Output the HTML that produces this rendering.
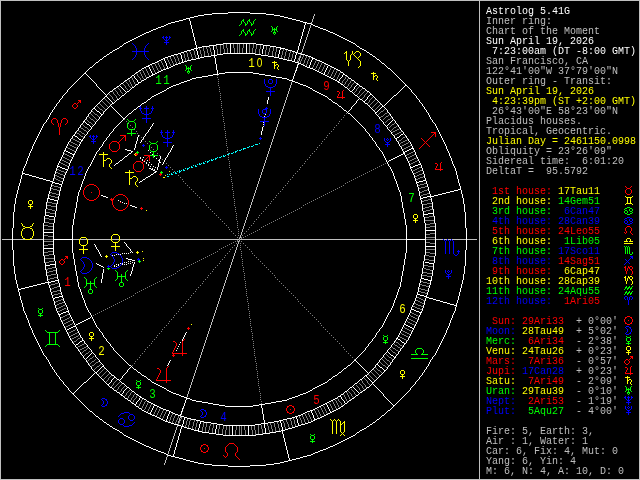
<!DOCTYPE html>
<html lang="en"><head><meta charset="utf-8"><title>Astrolog 5.41G</title>
<style>
html,body{margin:0;padding:0;background:#000;overflow:hidden}
svg{display:block}
.sb{font-family:"Liberation Mono","DejaVu Sans Mono",monospace;font-size:10px;white-space:pre}
.hn{font-family:"Liberation Mono","DejaVu Sans Mono",monospace;font-size:13.5px;text-anchor:middle}
.z{font-family:"Liberation Sans",sans-serif;font-size:12.6px}
path{fill:none;stroke-width:1;shape-rendering:crispEdges}
</style></head>
<body>
<svg width="640" height="480" viewBox="0 0 640 480" style="will-change:transform">
<rect width="640" height="480" fill="#000"/>
<path stroke="#bfbfbf" d="M0 0.5h640M0 1.5h1M479 1.5h1M639 1.5h1M0 2.5h1M479 2.5h1M639 2.5h1M0 3.5h1M479 3.5h1M639 3.5h1M0 4.5h1M479 4.5h1M639 4.5h1M0 5.5h1M479 5.5h1M639 5.5h1M0 6.5h1M479 6.5h1M639 6.5h1M0 7.5h1M479 7.5h1M639 7.5h1M0 8.5h1M479 8.5h1M639 8.5h1M0 9.5h1M479 9.5h1M639 9.5h1M0 10.5h1M479 10.5h1M639 10.5h1M0 11.5h1M479 11.5h1M639 11.5h1M0 12.5h1M479 12.5h1M639 12.5h1M0 13.5h1M479 13.5h1M639 13.5h1M0 14.5h1M314 14.5h1M479 14.5h1M639 14.5h1M0 15.5h1M314 15.5h1M479 15.5h1M639 15.5h1M0 16.5h1M313 16.5h1M479 16.5h1M639 16.5h1M0 17.5h1M313 17.5h1M479 17.5h1M639 17.5h1M0 18.5h1M313 18.5h1M479 18.5h1M639 18.5h1M0 19.5h1M312 19.5h1M479 19.5h1M639 19.5h1M0 20.5h1M312 20.5h1M479 20.5h1M639 20.5h1M0 21.5h1M312 21.5h1M479 21.5h1M639 21.5h1M0 22.5h1M311 22.5h1M479 22.5h1M639 22.5h1M0 23.5h1M311 23.5h1M479 23.5h1M639 23.5h1M0 24.5h1M479 24.5h1M639 24.5h1M0 25.5h1M310 25.5h1M479 25.5h1M639 25.5h1M0 26.5h1M310 26.5h1M479 26.5h1M639 26.5h1M0 27.5h1M310 27.5h1M479 27.5h1M639 27.5h1M0 28.5h1M309 28.5h1M479 28.5h1M639 28.5h1M0 29.5h1M309 29.5h1M479 29.5h1M639 29.5h1M0 30.5h1M309 30.5h1M479 30.5h1M639 30.5h1M0 31.5h1M308 31.5h1M479 31.5h1M639 31.5h1M0 32.5h1M308 32.5h1M479 32.5h1M639 32.5h1M0 33.5h1M308 33.5h1M479 33.5h1M639 33.5h1M0 34.5h1M307 34.5h1M479 34.5h1M639 34.5h1M0 35.5h1M307 35.5h1M479 35.5h1M639 35.5h1M0 36.5h1M307 36.5h1M479 36.5h1M639 36.5h1M0 37.5h1M306 37.5h1M479 37.5h1M639 37.5h1M0 38.5h1M306 38.5h1M479 38.5h1M639 38.5h1M0 39.5h1M306 39.5h1M479 39.5h1M639 39.5h1M0 40.5h1M305 40.5h1M479 40.5h1M639 40.5h1M0 41.5h1M305 41.5h1M479 41.5h1M639 41.5h1M0 42.5h1M305 42.5h1M479 42.5h1M639 42.5h1M0 43.5h1M304 43.5h1M479 43.5h1M639 43.5h1M0 44.5h1M304 44.5h1M479 44.5h1M639 44.5h1M0 45.5h1M304 45.5h1M479 45.5h1M639 45.5h1M0 46.5h1M303 46.5h1M479 46.5h1M639 46.5h1M0 47.5h1M303 47.5h1M479 47.5h1M639 47.5h1M0 48.5h1M303 48.5h1M479 48.5h1M639 48.5h1M0 49.5h1M302 49.5h1M479 49.5h1M639 49.5h1M0 50.5h1M302 50.5h1M479 50.5h1M639 50.5h1M0 51.5h1M302 51.5h1M479 51.5h1M639 51.5h1M0 52.5h1M301 52.5h1M479 52.5h1M639 52.5h1M0 53.5h1M301 53.5h1M479 53.5h1M639 53.5h1M0 54.5h1M479 54.5h1M639 54.5h1M0 55.5h1M479 55.5h1M639 55.5h1M0 56.5h1M300 56.5h1M479 56.5h1M639 56.5h1M0 57.5h1M300 57.5h1M479 57.5h1M639 57.5h1M0 58.5h1M299 58.5h1M479 58.5h1M639 58.5h1M0 59.5h1M299 59.5h1M479 59.5h1M639 59.5h1M0 60.5h1M299 60.5h1M479 60.5h1M639 60.5h1M0 61.5h1M298 61.5h1M479 61.5h1M639 61.5h1M0 62.5h1M298 62.5h1M479 62.5h1M639 62.5h1M0 63.5h1M479 63.5h1M639 63.5h1M0 64.5h1M297 64.5h1M479 64.5h1M639 64.5h1M0 65.5h1M479 65.5h1M639 65.5h1M0 66.5h1M479 66.5h1M639 66.5h1M0 67.5h1M296 67.5h1M479 67.5h1M639 67.5h1M0 68.5h1M479 68.5h1M639 68.5h1M0 69.5h1M479 69.5h1M639 69.5h1M0 70.5h1M295 70.5h1M479 70.5h1M639 70.5h1M0 71.5h1M479 71.5h1M639 71.5h1M0 72.5h1M479 72.5h1M639 72.5h1M0 73.5h1M479 73.5h1M639 73.5h1M0 74.5h1M479 74.5h1M639 74.5h1M0 75.5h1M479 75.5h1M639 75.5h1M0 76.5h1M479 76.5h1M639 76.5h1M0 77.5h1M479 77.5h1M639 77.5h1M0 78.5h1M479 78.5h1M639 78.5h1M0 79.5h1M479 79.5h1M639 79.5h1M0 80.5h1M479 80.5h1M639 80.5h1M0 81.5h1M479 81.5h1M639 81.5h1M0 82.5h1M291 82.5h1M479 82.5h1M639 82.5h1M0 83.5h1M291 83.5h1M479 83.5h1M639 83.5h1M0 84.5h1M291 84.5h1M479 84.5h1M639 84.5h1M0 85.5h1M290 85.5h1M479 85.5h1M639 85.5h1M0 86.5h1M290 86.5h1M479 86.5h1M639 86.5h1M0 87.5h1M290 87.5h1M479 87.5h1M639 87.5h1M0 88.5h1M289 88.5h1M479 88.5h1M639 88.5h1M0 89.5h1M289 89.5h1M479 89.5h1M639 89.5h1M0 90.5h1M289 90.5h1M479 90.5h1M639 90.5h1M0 91.5h1M288 91.5h1M479 91.5h1M639 91.5h1M0 92.5h1M288 92.5h1M479 92.5h1M639 92.5h1M0 93.5h1M288 93.5h1M479 93.5h1M639 93.5h1M0 94.5h1M287 94.5h1M479 94.5h1M639 94.5h1M0 95.5h1M287 95.5h1M479 95.5h1M639 95.5h1M0 96.5h1M287 96.5h1M479 96.5h1M639 96.5h1M0 97.5h1M286 97.5h1M479 97.5h1M639 97.5h1M0 98.5h1M286 98.5h1M479 98.5h1M639 98.5h1M0 99.5h1M286 99.5h1M479 99.5h1M639 99.5h1M0 100.5h1M285 100.5h1M479 100.5h1M639 100.5h1M0 101.5h1M285 101.5h1M479 101.5h1M639 101.5h1M0 102.5h1M285 102.5h1M479 102.5h1M639 102.5h1M0 103.5h1M284 103.5h1M479 103.5h1M639 103.5h1M0 104.5h1M284 104.5h1M479 104.5h1M639 104.5h1M0 105.5h1M284 105.5h1M479 105.5h1M639 105.5h1M0 106.5h1M283 106.5h1M479 106.5h1M639 106.5h1M0 107.5h1M283 107.5h1M479 107.5h1M639 107.5h1M0 108.5h1M283 108.5h1M479 108.5h1M639 108.5h1M0 109.5h1M282 109.5h1M479 109.5h1M639 109.5h1M0 110.5h1M282 110.5h1M479 110.5h1M639 110.5h1M0 111.5h1M282 111.5h1M479 111.5h1M639 111.5h1M0 112.5h1M281 112.5h1M479 112.5h1M639 112.5h1M0 113.5h1M281 113.5h1M479 113.5h1M639 113.5h1M0 114.5h1M281 114.5h1M479 114.5h1M639 114.5h1M0 115.5h1M280 115.5h1M479 115.5h1M639 115.5h1M0 116.5h1M280 116.5h1M479 116.5h1M639 116.5h1M0 117.5h1M280 117.5h1M479 117.5h1M639 117.5h1M0 118.5h1M279 118.5h1M479 118.5h1M639 118.5h1M0 119.5h1M279 119.5h1M479 119.5h1M639 119.5h1M0 120.5h1M279 120.5h1M479 120.5h1M639 120.5h1M0 121.5h1M278 121.5h1M479 121.5h1M639 121.5h1M0 122.5h1M278 122.5h1M479 122.5h1M639 122.5h1M0 123.5h1M278 123.5h1M479 123.5h1M639 123.5h1M0 124.5h1M277 124.5h1M479 124.5h1M639 124.5h1M0 125.5h1M277 125.5h1M479 125.5h1M639 125.5h1M0 126.5h1M277 126.5h1M479 126.5h1M639 126.5h1M0 127.5h1M276 127.5h1M479 127.5h1M639 127.5h1M0 128.5h1M276 128.5h1M479 128.5h1M639 128.5h1M0 129.5h1M276 129.5h1M479 129.5h1M639 129.5h1M0 130.5h1M275 130.5h1M479 130.5h1M639 130.5h1M0 131.5h1M275 131.5h1M479 131.5h1M639 131.5h1M0 132.5h1M275 132.5h1M479 132.5h1M639 132.5h1M0 133.5h1M274 133.5h1M479 133.5h1M639 133.5h1M0 134.5h1M274 134.5h1M479 134.5h1M639 134.5h1M0 135.5h1M274 135.5h1M479 135.5h1M639 135.5h1M0 136.5h1M273 136.5h1M479 136.5h1M639 136.5h1M0 137.5h1M273 137.5h1M479 137.5h1M639 137.5h1M0 138.5h1M273 138.5h1M479 138.5h1M639 138.5h1M0 139.5h1M272 139.5h1M479 139.5h1M639 139.5h1M0 140.5h1M272 140.5h1M479 140.5h1M639 140.5h1M0 141.5h1M272 141.5h1M479 141.5h1M639 141.5h1M0 142.5h1M271 142.5h1M479 142.5h1M639 142.5h1M0 143.5h1M271 143.5h1M479 143.5h1M639 143.5h1M0 144.5h1M271 144.5h1M479 144.5h1M639 144.5h1M0 145.5h1M270 145.5h1M479 145.5h1M639 145.5h1M0 146.5h1M270 146.5h1M479 146.5h1M639 146.5h1M0 147.5h1M270 147.5h1M479 147.5h1M639 147.5h1M0 148.5h1M269 148.5h1M479 148.5h1M639 148.5h1M0 149.5h1M269 149.5h1M479 149.5h1M639 149.5h1M0 150.5h1M269 150.5h1M479 150.5h1M639 150.5h1M0 151.5h1M268 151.5h1M479 151.5h1M639 151.5h1M0 152.5h1M268 152.5h1M479 152.5h1M639 152.5h1M0 153.5h1M268 153.5h1M479 153.5h1M639 153.5h1M0 154.5h1M267 154.5h1M479 154.5h1M639 154.5h1M0 155.5h1M267 155.5h1M479 155.5h1M639 155.5h1M0 156.5h1M267 156.5h1M479 156.5h1M639 156.5h1M0 157.5h1M266 157.5h1M479 157.5h1M639 157.5h1M0 158.5h1M266 158.5h1M479 158.5h1M639 158.5h1M0 159.5h1M266 159.5h1M479 159.5h1M639 159.5h1M0 160.5h1M265 160.5h1M479 160.5h1M639 160.5h1M0 161.5h1M265 161.5h1M479 161.5h1M639 161.5h1M0 162.5h1M265 162.5h1M479 162.5h1M639 162.5h1M0 163.5h1M264 163.5h1M479 163.5h1M639 163.5h1M0 164.5h1M264 164.5h1M479 164.5h1M639 164.5h1M0 165.5h1M264 165.5h1M479 165.5h1M639 165.5h1M0 166.5h1M263 166.5h1M479 166.5h1M639 166.5h1M0 167.5h1M263 167.5h1M479 167.5h1M639 167.5h1M0 168.5h1M263 168.5h1M479 168.5h1M639 168.5h1M0 169.5h1M262 169.5h1M479 169.5h1M639 169.5h1M0 170.5h1M262 170.5h1M479 170.5h1M639 170.5h1M0 171.5h1M262 171.5h1M479 171.5h1M639 171.5h1M0 172.5h1M261 172.5h1M479 172.5h1M639 172.5h1M0 173.5h1M261 173.5h1M479 173.5h1M639 173.5h1M0 174.5h1M261 174.5h1M479 174.5h1M639 174.5h1M0 175.5h1M260 175.5h1M479 175.5h1M639 175.5h1M0 176.5h1M260 176.5h1M479 176.5h1M639 176.5h1M0 177.5h1M260 177.5h1M479 177.5h1M639 177.5h1M0 178.5h1M259 178.5h1M479 178.5h1M639 178.5h1M0 179.5h1M259 179.5h1M479 179.5h1M639 179.5h1M0 180.5h1M259 180.5h1M479 180.5h1M639 180.5h1M0 181.5h1M258 181.5h1M479 181.5h1M639 181.5h1M0 182.5h1M258 182.5h1M479 182.5h1M639 182.5h1M0 183.5h1M258 183.5h1M479 183.5h1M639 183.5h1M0 184.5h1M257 184.5h1M479 184.5h1M639 184.5h1M0 185.5h1M257 185.5h1M479 185.5h1M639 185.5h1M0 186.5h1M257 186.5h1M479 186.5h1M639 186.5h1M0 187.5h1M256 187.5h1M479 187.5h1M639 187.5h1M0 188.5h1M256 188.5h1M479 188.5h1M639 188.5h1M0 189.5h1M256 189.5h1M479 189.5h1M639 189.5h1M0 190.5h1M255 190.5h1M479 190.5h1M639 190.5h1M0 191.5h1M255 191.5h1M479 191.5h1M639 191.5h1M0 192.5h1M255 192.5h1M479 192.5h1M639 192.5h1M0 193.5h1M254 193.5h1M479 193.5h1M639 193.5h1M0 194.5h1M254 194.5h1M479 194.5h1M639 194.5h1M0 195.5h1M254 195.5h1M479 195.5h1M639 195.5h1M0 196.5h1M253 196.5h1M479 196.5h1M639 196.5h1M0 197.5h1M253 197.5h1M479 197.5h1M639 197.5h1M0 198.5h1M253 198.5h1M479 198.5h1M639 198.5h1M0 199.5h1M252 199.5h1M479 199.5h1M639 199.5h1M0 200.5h1M252 200.5h1M479 200.5h1M639 200.5h1M0 201.5h1M252 201.5h1M479 201.5h1M639 201.5h1M0 202.5h1M251 202.5h1M479 202.5h1M639 202.5h1M0 203.5h1M251 203.5h1M479 203.5h1M639 203.5h1M0 204.5h1M251 204.5h1M479 204.5h1M639 204.5h1M0 205.5h1M250 205.5h1M479 205.5h1M639 205.5h1M0 206.5h1M250 206.5h1M479 206.5h1M639 206.5h1M0 207.5h1M250 207.5h1M479 207.5h1M639 207.5h1M0 208.5h1M249 208.5h1M479 208.5h1M639 208.5h1M0 209.5h1M249 209.5h1M479 209.5h1M639 209.5h1M0 210.5h1M249 210.5h1M479 210.5h1M639 210.5h1M0 211.5h1M248 211.5h1M479 211.5h1M639 211.5h1M0 212.5h1M248 212.5h1M479 212.5h1M639 212.5h1M0 213.5h1M248 213.5h1M479 213.5h1M639 213.5h1M0 214.5h1M247 214.5h1M479 214.5h1M639 214.5h1M0 215.5h1M247 215.5h1M479 215.5h1M639 215.5h1M0 216.5h1M247 216.5h1M479 216.5h1M639 216.5h1M0 217.5h1M246 217.5h1M479 217.5h1M639 217.5h1M0 218.5h1M246 218.5h1M479 218.5h1M639 218.5h1M0 219.5h1M246 219.5h1M479 219.5h1M639 219.5h1M0 220.5h1M245 220.5h1M479 220.5h1M639 220.5h1M0 221.5h1M245 221.5h1M479 221.5h1M639 221.5h1M0 222.5h1M245 222.5h1M479 222.5h1M639 222.5h1M0 223.5h1M244 223.5h1M479 223.5h1M639 223.5h1M0 224.5h1M244 224.5h1M479 224.5h1M639 224.5h1M0 225.5h1M244 225.5h1M479 225.5h1M639 225.5h1M0 226.5h1M243 226.5h1M479 226.5h1M639 226.5h1M0 227.5h1M243 227.5h1M479 227.5h1M639 227.5h1M0 228.5h1M243 228.5h1M479 228.5h1M639 228.5h1M0 229.5h1M242 229.5h1M479 229.5h1M639 229.5h1M0 230.5h1M242 230.5h1M479 230.5h1M639 230.5h1M0 231.5h1M242 231.5h1M479 231.5h1M639 231.5h1M0 232.5h1M241 232.5h1M479 232.5h1M639 232.5h1M0 233.5h1M241 233.5h1M479 233.5h1M639 233.5h1M0 234.5h1M241 234.5h1M479 234.5h1M639 234.5h1M0 235.5h1M240 235.5h1M479 235.5h1M639 235.5h1M0 236.5h1M240 236.5h1M479 236.5h1M639 236.5h1M0 237.5h1M240 237.5h1M479 237.5h1M639 237.5h1M0 238.5h1M239 238.5h1M479 238.5h1M639 238.5h1M0 239.5h1M2 239.5h10M13 239.5h12M30 239.5h13M73 239.5h6M80 239.5h7M88 239.5h23M112 239.5h7M120 239.5h119M240 239.5h166M436 239.5h7M444 239.5h3M448 239.5h3M452 239.5h14M467 239.5h10M479 239.5h1M639 239.5h1M0 240.5h1M239 240.5h1M479 240.5h1M639 240.5h1M0 241.5h1M238 241.5h1M479 241.5h1M639 241.5h1M0 242.5h1M238 242.5h1M479 242.5h1M639 242.5h1M0 243.5h1M238 243.5h1M479 243.5h1M639 243.5h1M0 244.5h1M237 244.5h1M479 244.5h1M639 244.5h1M0 245.5h1M237 245.5h1M479 245.5h1M639 245.5h1M0 246.5h1M237 246.5h1M479 246.5h1M639 246.5h1M0 247.5h1M236 247.5h1M479 247.5h1M639 247.5h1M0 248.5h1M236 248.5h1M479 248.5h1M639 248.5h1M0 249.5h1M236 249.5h1M479 249.5h1M639 249.5h1M0 250.5h1M235 250.5h1M479 250.5h1M639 250.5h1M0 251.5h1M235 251.5h1M479 251.5h1M639 251.5h1M0 252.5h1M235 252.5h1M479 252.5h1M639 252.5h1M0 253.5h1M234 253.5h1M479 253.5h1M639 253.5h1M0 254.5h1M234 254.5h1M479 254.5h1M639 254.5h1M0 255.5h1M234 255.5h1M479 255.5h1M639 255.5h1M0 256.5h1M233 256.5h1M479 256.5h1M639 256.5h1M0 257.5h1M233 257.5h1M479 257.5h1M639 257.5h1M0 258.5h1M233 258.5h1M479 258.5h1M639 258.5h1M0 259.5h1M232 259.5h1M479 259.5h1M639 259.5h1M0 260.5h1M232 260.5h1M479 260.5h1M639 260.5h1M0 261.5h1M232 261.5h1M479 261.5h1M639 261.5h1M0 262.5h1M231 262.5h1M479 262.5h1M639 262.5h1M0 263.5h1M231 263.5h1M479 263.5h1M639 263.5h1M0 264.5h1M231 264.5h1M479 264.5h1M639 264.5h1M0 265.5h1M230 265.5h1M479 265.5h1M639 265.5h1M0 266.5h1M230 266.5h1M479 266.5h1M639 266.5h1M0 267.5h1M230 267.5h1M479 267.5h1M639 267.5h1M0 268.5h1M229 268.5h1M479 268.5h1M639 268.5h1M0 269.5h1M229 269.5h1M479 269.5h1M639 269.5h1M0 270.5h1M229 270.5h1M479 270.5h1M639 270.5h1M0 271.5h1M228 271.5h1M479 271.5h1M639 271.5h1M0 272.5h1M228 272.5h1M479 272.5h1M639 272.5h1M0 273.5h1M228 273.5h1M479 273.5h1M639 273.5h1M0 274.5h1M227 274.5h1M479 274.5h1M639 274.5h1M0 275.5h1M227 275.5h1M479 275.5h1M639 275.5h1M0 276.5h1M227 276.5h1M479 276.5h1M639 276.5h1M0 277.5h1M226 277.5h1M479 277.5h1M639 277.5h1M0 278.5h1M226 278.5h1M479 278.5h1M639 278.5h1M0 279.5h1M226 279.5h1M479 279.5h1M639 279.5h1M0 280.5h1M225 280.5h1M479 280.5h1M639 280.5h1M0 281.5h1M225 281.5h1M479 281.5h1M639 281.5h1M0 282.5h1M225 282.5h1M479 282.5h1M639 282.5h1M0 283.5h1M224 283.5h1M479 283.5h1M639 283.5h1M0 284.5h1M224 284.5h1M479 284.5h1M639 284.5h1M0 285.5h1M224 285.5h1M479 285.5h1M639 285.5h1M0 286.5h1M223 286.5h1M479 286.5h1M639 286.5h1M0 287.5h1M223 287.5h1M479 287.5h1M639 287.5h1M0 288.5h1M223 288.5h1M479 288.5h1M639 288.5h1M0 289.5h1M222 289.5h1M479 289.5h1M639 289.5h1M0 290.5h1M222 290.5h1M479 290.5h1M639 290.5h1M0 291.5h1M222 291.5h1M479 291.5h1M639 291.5h1M0 292.5h1M221 292.5h1M479 292.5h1M639 292.5h1M0 293.5h1M221 293.5h1M479 293.5h1M639 293.5h1M0 294.5h1M221 294.5h1M479 294.5h1M639 294.5h1M0 295.5h1M220 295.5h1M479 295.5h1M639 295.5h1M0 296.5h1M220 296.5h1M479 296.5h1M639 296.5h1M0 297.5h1M220 297.5h1M479 297.5h1M639 297.5h1M0 298.5h1M219 298.5h1M479 298.5h1M639 298.5h1M0 299.5h1M219 299.5h1M479 299.5h1M639 299.5h1M0 300.5h1M219 300.5h1M479 300.5h1M639 300.5h1M0 301.5h1M218 301.5h1M479 301.5h1M639 301.5h1M0 302.5h1M218 302.5h1M479 302.5h1M639 302.5h1M0 303.5h1M218 303.5h1M479 303.5h1M639 303.5h1M0 304.5h1M217 304.5h1M479 304.5h1M639 304.5h1M0 305.5h1M217 305.5h1M479 305.5h1M639 305.5h1M0 306.5h1M217 306.5h1M479 306.5h1M639 306.5h1M0 307.5h1M216 307.5h1M479 307.5h1M639 307.5h1M0 308.5h1M216 308.5h1M479 308.5h1M639 308.5h1M0 309.5h1M216 309.5h1M479 309.5h1M639 309.5h1M0 310.5h1M215 310.5h1M479 310.5h1M639 310.5h1M0 311.5h1M215 311.5h1M479 311.5h1M639 311.5h1M0 312.5h1M215 312.5h1M479 312.5h1M639 312.5h1M0 313.5h1M214 313.5h1M479 313.5h1M639 313.5h1M0 314.5h1M214 314.5h1M479 314.5h1M639 314.5h1M0 315.5h1M214 315.5h1M479 315.5h1M639 315.5h1M0 316.5h1M213 316.5h1M479 316.5h1M639 316.5h1M0 317.5h1M213 317.5h1M479 317.5h1M639 317.5h1M0 318.5h1M213 318.5h1M479 318.5h1M639 318.5h1M0 319.5h1M212 319.5h1M479 319.5h1M639 319.5h1M0 320.5h1M212 320.5h1M479 320.5h1M639 320.5h1M0 321.5h1M212 321.5h1M479 321.5h1M639 321.5h1M0 322.5h1M211 322.5h1M479 322.5h1M639 322.5h1M0 323.5h1M211 323.5h1M479 323.5h1M639 323.5h1M0 324.5h1M211 324.5h1M479 324.5h1M639 324.5h1M0 325.5h1M210 325.5h1M479 325.5h1M639 325.5h1M0 326.5h1M210 326.5h1M479 326.5h1M639 326.5h1M0 327.5h1M210 327.5h1M479 327.5h1M639 327.5h1M0 328.5h1M209 328.5h1M479 328.5h1M639 328.5h1M0 329.5h1M209 329.5h1M479 329.5h1M639 329.5h1M0 330.5h1M209 330.5h1M479 330.5h1M639 330.5h1M0 331.5h1M208 331.5h1M479 331.5h1M639 331.5h1M0 332.5h1M208 332.5h1M479 332.5h1M639 332.5h1M0 333.5h1M208 333.5h1M479 333.5h1M639 333.5h1M0 334.5h1M207 334.5h1M479 334.5h1M639 334.5h1M0 335.5h1M207 335.5h1M479 335.5h1M639 335.5h1M0 336.5h1M207 336.5h1M479 336.5h1M639 336.5h1M0 337.5h1M206 337.5h1M479 337.5h1M639 337.5h1M0 338.5h1M206 338.5h1M479 338.5h1M639 338.5h1M0 339.5h1M206 339.5h1M479 339.5h1M639 339.5h1M0 340.5h1M205 340.5h1M479 340.5h1M639 340.5h1M0 341.5h1M205 341.5h1M479 341.5h1M639 341.5h1M0 342.5h1M205 342.5h1M479 342.5h1M639 342.5h1M0 343.5h1M204 343.5h1M479 343.5h1M639 343.5h1M0 344.5h1M204 344.5h1M479 344.5h1M639 344.5h1M0 345.5h1M204 345.5h1M479 345.5h1M639 345.5h1M0 346.5h1M203 346.5h1M479 346.5h1M639 346.5h1M0 347.5h1M203 347.5h1M479 347.5h1M639 347.5h1M0 348.5h1M203 348.5h1M479 348.5h1M639 348.5h1M0 349.5h1M202 349.5h1M479 349.5h1M639 349.5h1M0 350.5h1M202 350.5h1M479 350.5h1M639 350.5h1M0 351.5h1M202 351.5h1M479 351.5h1M639 351.5h1M0 352.5h1M201 352.5h1M479 352.5h1M639 352.5h1M0 353.5h1M201 353.5h1M479 353.5h1M639 353.5h1M0 354.5h1M201 354.5h1M479 354.5h1M639 354.5h1M0 355.5h1M200 355.5h1M479 355.5h1M639 355.5h1M0 356.5h1M200 356.5h1M479 356.5h1M639 356.5h1M0 357.5h1M200 357.5h1M479 357.5h1M639 357.5h1M0 358.5h1M199 358.5h1M479 358.5h1M639 358.5h1M0 359.5h1M199 359.5h1M479 359.5h1M639 359.5h1M0 360.5h1M199 360.5h1M479 360.5h1M639 360.5h1M0 361.5h1M198 361.5h1M479 361.5h1M639 361.5h1M0 362.5h1M198 362.5h1M479 362.5h1M639 362.5h1M0 363.5h1M198 363.5h1M479 363.5h1M639 363.5h1M0 364.5h1M197 364.5h1M479 364.5h1M639 364.5h1M0 365.5h1M197 365.5h1M479 365.5h1M639 365.5h1M0 366.5h1M197 366.5h1M479 366.5h1M639 366.5h1M0 367.5h1M196 367.5h1M479 367.5h1M639 367.5h1M0 368.5h1M196 368.5h1M479 368.5h1M639 368.5h1M0 369.5h1M196 369.5h1M479 369.5h1M639 369.5h1M0 370.5h1M195 370.5h1M479 370.5h1M639 370.5h1M0 371.5h1M195 371.5h1M479 371.5h1M639 371.5h1M0 372.5h1M195 372.5h1M479 372.5h1M639 372.5h1M0 373.5h1M194 373.5h1M479 373.5h1M639 373.5h1M0 374.5h1M194 374.5h1M479 374.5h1M639 374.5h1M0 375.5h1M194 375.5h1M479 375.5h1M639 375.5h1M0 376.5h1M193 376.5h1M479 376.5h1M639 376.5h1M0 377.5h1M193 377.5h1M479 377.5h1M639 377.5h1M0 378.5h1M193 378.5h1M479 378.5h1M639 378.5h1M0 379.5h1M192 379.5h1M479 379.5h1M639 379.5h1M0 380.5h1M192 380.5h1M479 380.5h1M639 380.5h1M0 381.5h1M192 381.5h1M479 381.5h1M639 381.5h1M0 382.5h1M191 382.5h1M479 382.5h1M639 382.5h1M0 383.5h1M191 383.5h1M479 383.5h1M639 383.5h1M0 384.5h1M191 384.5h1M479 384.5h1M639 384.5h1M0 385.5h1M190 385.5h1M479 385.5h1M639 385.5h1M0 386.5h1M190 386.5h1M479 386.5h1M639 386.5h1M0 387.5h1M190 387.5h1M479 387.5h1M639 387.5h1M0 388.5h1M189 388.5h1M479 388.5h1M639 388.5h1M0 389.5h1M189 389.5h1M479 389.5h1M639 389.5h1M0 390.5h1M189 390.5h1M479 390.5h1M639 390.5h1M0 391.5h1M188 391.5h1M479 391.5h1M639 391.5h1M0 392.5h1M188 392.5h1M479 392.5h1M639 392.5h1M0 393.5h1M188 393.5h1M479 393.5h1M639 393.5h1M0 394.5h1M187 394.5h1M479 394.5h1M639 394.5h1M0 395.5h1M187 395.5h1M479 395.5h1M639 395.5h1M0 396.5h1M187 396.5h1M479 396.5h1M639 396.5h1M0 397.5h1M479 397.5h1M639 397.5h1M0 398.5h1M479 398.5h1M639 398.5h1M0 399.5h1M479 399.5h1M639 399.5h1M0 400.5h1M479 400.5h1M639 400.5h1M0 401.5h1M479 401.5h1M639 401.5h1M0 402.5h1M479 402.5h1M639 402.5h1M0 403.5h1M479 403.5h1M639 403.5h1M0 404.5h1M479 404.5h1M639 404.5h1M0 405.5h1M479 405.5h1M639 405.5h1M0 406.5h1M479 406.5h1M639 406.5h1M0 407.5h1M479 407.5h1M639 407.5h1M0 408.5h1M183 408.5h1M479 408.5h1M639 408.5h1M0 409.5h1M479 409.5h1M639 409.5h1M0 410.5h1M479 410.5h1M639 410.5h1M0 411.5h1M182 411.5h1M479 411.5h1M639 411.5h1M0 412.5h1M479 412.5h1M639 412.5h1M0 413.5h1M479 413.5h1M639 413.5h1M0 414.5h1M181 414.5h1M479 414.5h1M639 414.5h1M0 415.5h1M479 415.5h1M639 415.5h1M0 416.5h1M180 416.5h1M479 416.5h1M639 416.5h1M0 417.5h1M180 417.5h1M479 417.5h1M639 417.5h1M0 418.5h1M179 418.5h1M479 418.5h1M639 418.5h1M0 419.5h1M179 419.5h1M479 419.5h1M639 419.5h1M0 420.5h1M179 420.5h1M479 420.5h1M639 420.5h1M0 421.5h1M178 421.5h1M479 421.5h1M639 421.5h1M0 422.5h1M178 422.5h1M479 422.5h1M639 422.5h1M0 423.5h1M479 423.5h1M639 423.5h1M0 424.5h1M479 424.5h1M639 424.5h1M0 425.5h1M177 425.5h1M479 425.5h1M639 425.5h1M0 426.5h1M177 426.5h1M479 426.5h1M639 426.5h1M0 427.5h1M176 427.5h1M479 427.5h1M639 427.5h1M0 428.5h1M176 428.5h1M479 428.5h1M639 428.5h1M0 429.5h1M176 429.5h1M479 429.5h1M639 429.5h1M0 430.5h1M175 430.5h1M479 430.5h1M639 430.5h1M0 431.5h1M175 431.5h1M479 431.5h1M639 431.5h1M0 432.5h1M175 432.5h1M479 432.5h1M639 432.5h1M0 433.5h1M174 433.5h1M479 433.5h1M639 433.5h1M0 434.5h1M174 434.5h1M479 434.5h1M639 434.5h1M0 435.5h1M174 435.5h1M479 435.5h1M639 435.5h1M0 436.5h1M173 436.5h1M479 436.5h1M639 436.5h1M0 437.5h1M173 437.5h1M479 437.5h1M639 437.5h1M0 438.5h1M173 438.5h1M479 438.5h1M639 438.5h1M0 439.5h1M172 439.5h1M479 439.5h1M639 439.5h1M0 440.5h1M172 440.5h1M479 440.5h1M639 440.5h1M0 441.5h1M172 441.5h1M479 441.5h1M639 441.5h1M0 442.5h1M171 442.5h1M479 442.5h1M639 442.5h1M0 443.5h1M171 443.5h1M479 443.5h1M639 443.5h1M0 444.5h1M171 444.5h1M479 444.5h1M639 444.5h1M0 445.5h1M170 445.5h1M479 445.5h1M639 445.5h1M0 446.5h1M170 446.5h1M479 446.5h1M639 446.5h1M0 447.5h1M170 447.5h1M479 447.5h1M639 447.5h1M0 448.5h1M169 448.5h1M479 448.5h1M639 448.5h1M0 449.5h1M169 449.5h1M479 449.5h1M639 449.5h1M0 450.5h1M169 450.5h1M479 450.5h1M639 450.5h1M0 451.5h1M168 451.5h1M479 451.5h1M639 451.5h1M0 452.5h1M168 452.5h1M479 452.5h1M639 452.5h1M0 453.5h1M168 453.5h1M479 453.5h1M639 453.5h1M0 454.5h1M479 454.5h1M639 454.5h1M0 455.5h1M167 455.5h1M479 455.5h1M639 455.5h1M0 456.5h1M167 456.5h1M479 456.5h1M639 456.5h1M0 457.5h1M166 457.5h1M479 457.5h1M639 457.5h1M0 458.5h1M166 458.5h1M479 458.5h1M639 458.5h1M0 459.5h1M166 459.5h1M479 459.5h1M639 459.5h1M0 460.5h1M165 460.5h1M479 460.5h1M639 460.5h1M0 461.5h1M165 461.5h1M479 461.5h1M639 461.5h1M0 462.5h1M165 462.5h1M479 462.5h1M639 462.5h1M0 463.5h1M164 463.5h1M479 463.5h1M639 463.5h1M0 464.5h1M164 464.5h1M479 464.5h1M639 464.5h1M0 465.5h1M479 465.5h1M639 465.5h1M0 466.5h1M479 466.5h1M639 466.5h1M0 467.5h1M479 467.5h1M639 467.5h1M0 468.5h1M479 468.5h1M639 468.5h1M0 469.5h1M479 469.5h1M639 469.5h1M0 470.5h1M479 470.5h1M639 470.5h1M0 471.5h1M479 471.5h1M639 471.5h1M0 472.5h1M479 472.5h1M639 472.5h1M0 473.5h1M479 473.5h1M639 473.5h1M0 474.5h1M479 474.5h1M639 474.5h1M0 475.5h1M479 475.5h1M639 475.5h1M0 476.5h1M479 476.5h1M639 476.5h1M0 477.5h1M479 477.5h1M639 477.5h1M0 478.5h1M479 478.5h1M639 478.5h1M0 479.5h640"/>
<path stroke="#ffffff" d="M228 12.5h22M212 13.5h16M250 13.5h16M204 14.5h8M266 14.5h8M198 15.5h6M274 15.5h6M194 16.5h4M280 16.5h4M190 17.5h4M284 17.5h4M186 18.5h4M288 18.5h4M183 19.5h3M189 19.5h1M292 19.5h4M179 20.5h4M189 20.5h1M296 20.5h4M175 21.5h4M190 21.5h1M300 21.5h3M171 22.5h4M190 22.5h1M303 22.5h4M168 23.5h3M190 23.5h1M305 23.5h1M307 23.5h4M166 24.5h2M190 24.5h1M305 24.5h1M311 24.5h2M164 25.5h2M191 25.5h1M304 25.5h1M313 25.5h2M161 26.5h3M191 26.5h1M304 26.5h1M315 26.5h3M158 27.5h3M191 27.5h1M304 27.5h1M318 27.5h2M156 28.5h2M191 28.5h1M304 28.5h1M320 28.5h3M153 29.5h3M192 29.5h1M303 29.5h1M323 29.5h3M151 30.5h2M192 30.5h1M303 30.5h1M326 30.5h2M149 31.5h2M192 31.5h1M303 31.5h1M328 31.5h2M146 32.5h3M192 32.5h1M302 32.5h1M330 32.5h3M144 33.5h2M193 33.5h1M302 33.5h1M333 33.5h2M142 34.5h2M193 34.5h1M302 34.5h1M335 34.5h2M140 35.5h2M193 35.5h1M302 35.5h1M337 35.5h2M138 36.5h2M193 36.5h1M301 36.5h1M339 36.5h2M136 37.5h2M194 37.5h1M301 37.5h1M341 37.5h2M134 38.5h2M194 38.5h1M301 38.5h1M343 38.5h2M132 39.5h2M194 39.5h1M300 39.5h1M345 39.5h2M130 40.5h2M194 40.5h1M300 40.5h1M347 40.5h2M128 41.5h2M195 41.5h1M300 41.5h1M349 41.5h2M126 42.5h2M195 42.5h1M300 42.5h1M351 42.5h2M124 43.5h2M195 43.5h1M223 43.5h33M299 43.5h1M353 43.5h2M123 44.5h1M195 44.5h1M216 44.5h7M230 44.5h1M246 44.5h1M256 44.5h7M299 44.5h1M355 44.5h1M122 45.5h1M196 45.5h1M209 45.5h7M230 45.5h1M246 45.5h1M263 45.5h7M299 45.5h1M356 45.5h1M120 46.5h2M196 46.5h1M202 46.5h7M213 46.5h1M230 46.5h1M246 46.5h1M263 46.5h1M270 46.5h6M298 46.5h1M357 46.5h2M119 47.5h1M196 47.5h1M198 47.5h4M213 47.5h1M230 47.5h1M246 47.5h1M263 47.5h1M276 47.5h5M298 47.5h1M359 47.5h1M117 48.5h2M194 48.5h4M213 48.5h1M230 48.5h1M246 48.5h1M263 48.5h1M280 48.5h5M298 48.5h1M360 48.5h2M115 49.5h2M191 49.5h3M196 49.5h1M213 49.5h1M230 49.5h1M246 49.5h1M262 49.5h1M280 49.5h1M285 49.5h3M298 49.5h1M362 49.5h2M113 50.5h2M187 50.5h4M196 50.5h1M214 50.5h1M230 50.5h1M246 50.5h1M262 50.5h1M279 50.5h1M288 50.5h4M297 50.5h1M364 50.5h2M112 51.5h1M184 51.5h3M197 51.5h1M214 51.5h1M230 51.5h1M246 51.5h1M262 51.5h1M279 51.5h1M292 51.5h3M297 51.5h1M366 51.5h1M110 52.5h2M181 52.5h3M197 52.5h1M214 52.5h1M230 52.5h1M246 52.5h1M262 52.5h1M279 52.5h1M295 52.5h3M367 52.5h2M109 53.5h1M178 53.5h3M197 53.5h1M214 53.5h1M223 53.5h32M262 53.5h1M279 53.5h1M296 53.5h1M298 53.5h3M369 53.5h1M107 54.5h2M174 54.5h4M180 54.5h1M197 54.5h1M214 54.5h1M217 54.5h6M255 54.5h6M278 54.5h1M296 54.5h1M301 54.5h4M370 54.5h2M106 55.5h1M171 55.5h3M181 55.5h1M198 55.5h1M211 55.5h6M261 55.5h7M278 55.5h1M295 55.5h1M305 55.5h3M372 55.5h1M104 56.5h2M168 56.5h3M181 56.5h1M198 56.5h1M204 56.5h7M214 56.5h1M268 56.5h6M278 56.5h1M295 56.5h1M308 56.5h3M373 56.5h2M103 57.5h1M165 57.5h3M181 57.5h1M198 57.5h1M200 57.5h4M214 57.5h1M274 57.5h5M295 57.5h1M311 57.5h2M375 57.5h1M102 58.5h1M163 58.5h2M181 58.5h1M196 58.5h4M215 58.5h1M279 58.5h4M295 58.5h1M312 58.5h3M376 58.5h1M100 59.5h2M161 59.5h2M164 59.5h1M182 59.5h1M191 59.5h5M215 59.5h1M283 59.5h4M294 59.5h1M312 59.5h1M315 59.5h2M377 59.5h2M99 60.5h1M159 60.5h2M164 60.5h1M182 60.5h1M187 60.5h4M215 60.5h1M287 60.5h5M294 60.5h1M311 60.5h1M317 60.5h3M379 60.5h1M98 61.5h1M157 61.5h2M165 61.5h1M182 61.5h1M184 61.5h3M215 61.5h1M292 61.5h3M311 61.5h1M320 61.5h2M380 61.5h1M96 62.5h2M155 62.5h2M165 62.5h1M181 62.5h3M215 62.5h1M295 62.5h3M310 62.5h1M322 62.5h2M381 62.5h1M95 63.5h1M152 63.5h3M166 63.5h1M178 63.5h3M215 63.5h1M298 63.5h3M310 63.5h1M324 63.5h2M382 63.5h2M94 64.5h1M150 64.5h2M166 64.5h1M175 64.5h3M216 64.5h1M298 64.5h1M301 64.5h2M310 64.5h1M326 64.5h2M384 64.5h1M93 65.5h1M148 65.5h2M166 65.5h1M173 65.5h2M216 65.5h1M297 65.5h1M303 65.5h2M309 65.5h1M328 65.5h2M385 65.5h1M92 66.5h1M146 66.5h3M167 66.5h1M171 66.5h2M216 66.5h1M297 66.5h1M305 66.5h2M309 66.5h1M327 66.5h1M330 66.5h2M386 66.5h1M90 67.5h2M144 67.5h2M149 67.5h1M167 67.5h1M169 67.5h2M216 67.5h1M297 67.5h1M307 67.5h3M327 67.5h1M332 67.5h2M387 67.5h1M89 68.5h1M142 68.5h2M149 68.5h1M166 68.5h3M216 68.5h1M296 68.5h1M310 68.5h3M326 68.5h1M334 68.5h2M388 68.5h2M88 69.5h1M141 69.5h1M150 69.5h1M163 69.5h3M216 69.5h1M296 69.5h1M313 69.5h2M326 69.5h1M336 69.5h2M390 69.5h1M87 70.5h1M139 70.5h2M150 70.5h1M161 70.5h2M217 70.5h1M296 70.5h1M315 70.5h2M325 70.5h1M338 70.5h2M391 70.5h1M86 71.5h1M138 71.5h1M151 71.5h1M159 71.5h2M217 71.5h1M295 71.5h1M317 71.5h2M325 71.5h1M340 71.5h1M392 71.5h1M85 72.5h1M136 72.5h2M151 72.5h1M157 72.5h2M217 72.5h1M225 72.5h28M295 72.5h1M319 72.5h2M324 72.5h1M341 72.5h2M393 72.5h1M84 73.5h2M135 73.5h1M152 73.5h1M155 73.5h2M217 73.5h1M219 73.5h6M253 73.5h6M294 73.5h1M321 73.5h2M324 73.5h1M343 73.5h1M394 73.5h1M83 74.5h1M86 74.5h1M134 74.5h1M152 74.5h3M213 74.5h6M259 74.5h6M294 74.5h1M323 74.5h2M343 74.5h2M395 74.5h1M82 75.5h1M87 75.5h1M132 75.5h2M151 75.5h2M208 75.5h5M265 75.5h6M294 75.5h1M325 75.5h2M342 75.5h1M345 75.5h2M396 75.5h1M81 76.5h1M88 76.5h1M131 76.5h1M134 76.5h1M149 76.5h2M202 76.5h6M271 76.5h5M293 76.5h1M327 76.5h2M342 76.5h1M347 76.5h1M397 76.5h1M80 77.5h1M89 77.5h1M130 77.5h1M134 77.5h1M147 77.5h2M196 77.5h6M276 77.5h6M293 77.5h1M329 77.5h2M341 77.5h1M348 77.5h1M398 77.5h1M79 78.5h1M90 78.5h1M128 78.5h2M135 78.5h1M146 78.5h1M192 78.5h4M282 78.5h5M293 78.5h1M331 78.5h2M340 78.5h1M349 78.5h2M399 78.5h1M78 79.5h1M91 79.5h1M127 79.5h1M136 79.5h1M144 79.5h2M190 79.5h2M287 79.5h2M292 79.5h1M333 79.5h2M339 79.5h1M351 79.5h1M400 79.5h1M77 80.5h1M92 80.5h1M125 80.5h2M137 80.5h1M142 80.5h2M187 80.5h3M289 80.5h4M335 80.5h2M339 80.5h1M352 80.5h2M401 80.5h1M76 81.5h1M93 81.5h1M124 81.5h1M137 81.5h1M141 81.5h1M184 81.5h3M292 81.5h3M337 81.5h2M354 81.5h1M402 81.5h1M75 82.5h1M94 82.5h1M123 82.5h1M138 82.5h3M181 82.5h3M295 82.5h3M338 82.5h2M355 82.5h1M403 82.5h1M74 83.5h1M95 83.5h1M121 83.5h2M138 83.5h1M179 83.5h2M298 83.5h2M340 83.5h1M356 83.5h2M404 83.5h1M73 84.5h1M96 84.5h1M120 84.5h1M136 84.5h2M176 84.5h3M300 84.5h3M341 84.5h2M357 84.5h2M405 84.5h1M72 85.5h1M96 85.5h1M119 85.5h1M135 85.5h1M173 85.5h3M303 85.5h3M343 85.5h1M356 85.5h1M359 85.5h1M405 85.5h2M71 86.5h1M97 86.5h1M117 86.5h2M120 86.5h1M134 86.5h1M171 86.5h2M306 86.5h2M344 86.5h1M355 86.5h1M360 86.5h2M404 86.5h1M407 86.5h1M70 87.5h1M98 87.5h1M116 87.5h1M121 87.5h1M132 87.5h2M169 87.5h2M308 87.5h2M345 87.5h2M354 87.5h1M362 87.5h1M403 87.5h1M408 87.5h1M69 88.5h1M99 88.5h1M114 88.5h2M122 88.5h1M131 88.5h1M167 88.5h2M310 88.5h2M347 88.5h1M354 88.5h1M363 88.5h2M402 88.5h1M409 88.5h1M68 89.5h1M100 89.5h1M113 89.5h1M123 89.5h1M130 89.5h1M166 89.5h1M312 89.5h1M348 89.5h1M353 89.5h1M365 89.5h1M401 89.5h1M410 89.5h1M67 90.5h1M101 90.5h1M112 90.5h1M124 90.5h1M129 90.5h1M164 90.5h2M313 90.5h2M349 90.5h1M352 90.5h1M366 90.5h1M400 90.5h1M411 90.5h1M67 91.5h1M102 91.5h1M110 91.5h2M125 91.5h1M127 91.5h2M162 91.5h2M315 91.5h2M350 91.5h2M367 91.5h2M399 91.5h1M411 91.5h1M66 92.5h1M103 92.5h1M109 92.5h1M126 92.5h1M160 92.5h2M317 92.5h2M352 92.5h1M369 92.5h1M398 92.5h1M412 92.5h1M65 93.5h1M104 93.5h1M108 93.5h1M125 93.5h1M158 93.5h2M319 93.5h2M353 93.5h1M370 93.5h1M397 93.5h1M413 93.5h1M64 94.5h1M105 94.5h1M107 94.5h1M124 94.5h1M156 94.5h2M321 94.5h2M354 94.5h1M370 94.5h2M396 94.5h1M414 94.5h1M63 95.5h1M106 95.5h1M122 95.5h2M154 95.5h2M323 95.5h2M355 95.5h2M369 95.5h1M372 95.5h1M394 95.5h2M415 95.5h1M62 96.5h1M105 96.5h2M121 96.5h1M152 96.5h2M325 96.5h2M357 96.5h1M368 96.5h1M373 96.5h1M393 96.5h1M416 96.5h1M62 97.5h1M104 97.5h1M107 97.5h1M120 97.5h1M151 97.5h1M268 97.5h1M327 97.5h1M358 97.5h1M367 97.5h1M374 97.5h1M392 97.5h1M416 97.5h1M61 98.5h1M103 98.5h1M108 98.5h1M119 98.5h1M150 98.5h1M268 98.5h1M328 98.5h1M359 98.5h1M367 98.5h1M375 98.5h1M391 98.5h1M417 98.5h1M60 99.5h1M102 99.5h1M109 99.5h1M117 99.5h2M148 99.5h2M268 99.5h1M329 99.5h2M358 99.5h1M360 99.5h2M366 99.5h1M376 99.5h1M390 99.5h1M418 99.5h1M59 100.5h1M101 100.5h1M110 100.5h1M116 100.5h1M147 100.5h1M267 100.5h1M331 100.5h1M357 100.5h1M362 100.5h1M365 100.5h1M377 100.5h1M389 100.5h1M419 100.5h1M59 101.5h1M100 101.5h1M111 101.5h1M115 101.5h1M146 101.5h1M267 101.5h1M332 101.5h1M356 101.5h1M363 101.5h2M378 101.5h1M388 101.5h1M419 101.5h1M58 102.5h1M99 102.5h1M112 102.5h1M114 102.5h1M144 102.5h2M267 102.5h1M333 102.5h2M356 102.5h1M364 102.5h1M379 102.5h1M387 102.5h1M420 102.5h1M57 103.5h1M98 103.5h1M112 103.5h2M142 103.5h2M267 103.5h1M335 103.5h2M355 103.5h1M365 103.5h2M380 103.5h1M386 103.5h1M421 103.5h1M56 104.5h1M97 104.5h1M111 104.5h1M141 104.5h1M337 104.5h1M354 104.5h1M367 104.5h1M381 104.5h1M385 104.5h1M422 104.5h1M56 105.5h1M96 105.5h1M110 105.5h1M140 105.5h1M338 105.5h1M353 105.5h1M368 105.5h1M382 105.5h1M384 105.5h1M422 105.5h1M55 106.5h1M95 106.5h1M109 106.5h1M111 106.5h1M138 106.5h2M339 106.5h2M352 106.5h1M369 106.5h1M382 106.5h2M423 106.5h1M54 107.5h1M94 107.5h1M108 107.5h1M112 107.5h1M137 107.5h1M341 107.5h1M351 107.5h1M370 107.5h1M381 107.5h1M384 107.5h1M424 107.5h1M54 108.5h1M93 108.5h2M107 108.5h1M113 108.5h1M136 108.5h1M342 108.5h1M351 108.5h1M371 108.5h1M380 108.5h1M385 108.5h1M424 108.5h1M53 109.5h1M92 109.5h1M95 109.5h1M106 109.5h1M114 109.5h1M134 109.5h2M343 109.5h1M350 109.5h1M372 109.5h1M379 109.5h1M386 109.5h1M425 109.5h1M52 110.5h1M91 110.5h1M96 110.5h1M105 110.5h1M115 110.5h1M133 110.5h1M344 110.5h2M349 110.5h1M373 110.5h1M378 110.5h1M387 110.5h1M426 110.5h1M52 111.5h1M91 111.5h1M97 111.5h2M104 111.5h1M116 111.5h1M132 111.5h1M346 111.5h1M348 111.5h1M374 111.5h1M377 111.5h1M387 111.5h1M426 111.5h1M51 112.5h1M90 112.5h1M99 112.5h1M103 112.5h1M117 112.5h1M131 112.5h1M347 112.5h1M375 112.5h2M388 112.5h1M427 112.5h1M50 113.5h1M89 113.5h1M100 113.5h1M103 113.5h1M118 113.5h1M129 113.5h2M348 113.5h2M375 113.5h1M389 113.5h1M428 113.5h1M50 114.5h1M88 114.5h1M101 114.5h2M119 114.5h1M128 114.5h1M265 114.5h1M350 114.5h1M376 114.5h1M390 114.5h1M428 114.5h1M49 115.5h1M88 115.5h1M101 115.5h1M120 115.5h1M127 115.5h1M351 115.5h1M377 115.5h1M390 115.5h1M429 115.5h1M49 116.5h1M87 116.5h1M100 116.5h1M121 116.5h1M126 116.5h1M264 116.5h1M352 116.5h1M378 116.5h1M391 116.5h1M429 116.5h1M48 117.5h1M86 117.5h1M99 117.5h1M122 117.5h1M125 117.5h1M353 117.5h1M379 117.5h1M392 117.5h1M430 117.5h1M48 118.5h1M86 118.5h1M99 118.5h1M123 118.5h2M354 118.5h1M379 118.5h1M392 118.5h1M430 118.5h1M47 119.5h1M85 119.5h1M98 119.5h1M123 119.5h1M355 119.5h1M380 119.5h1M393 119.5h1M431 119.5h1M46 120.5h1M84 120.5h1M97 120.5h1M122 120.5h1M356 120.5h1M381 120.5h1M392 120.5h1M394 120.5h1M432 120.5h1M46 121.5h1M83 121.5h2M96 121.5h1M121 121.5h1M357 121.5h1M382 121.5h1M391 121.5h1M395 121.5h1M432 121.5h1M45 122.5h1M83 122.5h1M85 122.5h1M95 122.5h1M120 122.5h1M263 122.5h1M358 122.5h1M383 122.5h1M390 122.5h1M395 122.5h1M433 122.5h1M44 123.5h1M82 123.5h1M86 123.5h1M95 123.5h1M119 123.5h1M153 123.5h1M359 123.5h1M383 123.5h1M389 123.5h1M396 123.5h1M434 123.5h1M43 124.5h1M81 124.5h1M87 124.5h2M94 124.5h1M118 124.5h1M152 124.5h1M263 124.5h1M360 124.5h1M384 124.5h1M388 124.5h1M397 124.5h1M435 124.5h1M43 125.5h1M80 125.5h1M89 125.5h1M93 125.5h1M117 125.5h1M152 125.5h1M361 125.5h1M385 125.5h1M387 125.5h1M398 125.5h1M435 125.5h1M42 126.5h1M80 126.5h1M90 126.5h1M92 126.5h1M116 126.5h1M151 126.5h1M263 126.5h1M362 126.5h1M386 126.5h1M398 126.5h1M436 126.5h1M42 127.5h1M79 127.5h1M91 127.5h1M115 127.5h1M150 127.5h1M262 127.5h1M363 127.5h1M387 127.5h1M399 127.5h1M436 127.5h1M41 128.5h1M78 128.5h1M91 128.5h1M114 128.5h1M150 128.5h1M262 128.5h1M364 128.5h1M387 128.5h1M400 128.5h1M437 128.5h1M41 129.5h1M78 129.5h1M90 129.5h1M113 129.5h1M149 129.5h1M262 129.5h1M365 129.5h1M388 129.5h1M400 129.5h1M437 129.5h1M40 130.5h1M77 130.5h1M89 130.5h1M113 130.5h1M148 130.5h1M262 130.5h1M365 130.5h1M389 130.5h1M401 130.5h1M438 130.5h1M40 131.5h1M76 131.5h1M88 131.5h1M112 131.5h1M148 131.5h1M261 131.5h1M366 131.5h1M390 131.5h1M402 131.5h1M438 131.5h1M39 132.5h1M75 132.5h1M87 132.5h1M111 132.5h1M147 132.5h1M261 132.5h1M367 132.5h1M391 132.5h1M403 132.5h1M439 132.5h1M39 133.5h1M75 133.5h1M87 133.5h1M110 133.5h1M146 133.5h1M261 133.5h1M368 133.5h1M391 133.5h1M403 133.5h1M439 133.5h1M38 134.5h1M74 134.5h1M86 134.5h1M109 134.5h1M145 134.5h1M261 134.5h1M369 134.5h1M392 134.5h1M401 134.5h2M404 134.5h1M440 134.5h1M38 135.5h1M73 135.5h2M85 135.5h1M109 135.5h1M138 135.5h1M145 135.5h1M369 135.5h1M393 135.5h1M400 135.5h1M405 135.5h1M440 135.5h1M37 136.5h1M72 136.5h1M75 136.5h2M84 136.5h1M108 136.5h1M138 136.5h1M144 136.5h1M370 136.5h1M394 136.5h1M399 136.5h1M406 136.5h1M441 136.5h1M37 137.5h1M72 137.5h1M77 137.5h1M84 137.5h1M107 137.5h1M137 137.5h1M143 137.5h1M371 137.5h1M394 137.5h1M397 137.5h2M406 137.5h1M441 137.5h1M36 138.5h1M71 138.5h1M78 138.5h1M83 138.5h1M106 138.5h1M137 138.5h1M143 138.5h1M372 138.5h1M395 138.5h2M407 138.5h1M442 138.5h1M36 139.5h1M70 139.5h1M79 139.5h2M82 139.5h1M106 139.5h1M137 139.5h1M142 139.5h1M372 139.5h1M396 139.5h1M408 139.5h1M442 139.5h1M35 140.5h1M70 140.5h1M81 140.5h2M105 140.5h1M137 140.5h1M141 140.5h1M373 140.5h1M396 140.5h1M408 140.5h1M443 140.5h1M35 141.5h1M69 141.5h1M81 141.5h1M104 141.5h1M136 141.5h1M141 141.5h1M374 141.5h1M397 141.5h1M409 141.5h1M443 141.5h1M34 142.5h1M68 142.5h1M80 142.5h1M103 142.5h1M136 142.5h1M140 142.5h1M375 142.5h1M398 142.5h1M410 142.5h1M444 142.5h1M34 143.5h1M68 143.5h1M80 143.5h1M103 143.5h1M136 143.5h1M375 143.5h1M398 143.5h1M410 143.5h1M444 143.5h1M33 144.5h1M67 144.5h1M79 144.5h1M102 144.5h1M135 144.5h1M376 144.5h1M399 144.5h1M411 144.5h1M445 144.5h1M33 145.5h1M67 145.5h1M79 145.5h1M102 145.5h1M135 145.5h1M173 145.5h1M376 145.5h1M399 145.5h1M411 145.5h1M445 145.5h1M32 146.5h1M66 146.5h1M78 146.5h1M101 146.5h1M135 146.5h1M172 146.5h1M377 146.5h1M400 146.5h1M412 146.5h1M446 146.5h1M32 147.5h1M66 147.5h1M77 147.5h1M100 147.5h1M135 147.5h1M172 147.5h1M378 147.5h1M401 147.5h1M412 147.5h1M446 147.5h1M32 148.5h1M65 148.5h1M77 148.5h1M99 148.5h1M134 148.5h1M171 148.5h1M379 148.5h1M401 148.5h1M411 148.5h3M446 148.5h1M31 149.5h1M65 149.5h1M76 149.5h1M99 149.5h1M125 149.5h2M134 149.5h1M171 149.5h1M379 149.5h1M402 149.5h1M409 149.5h2M413 149.5h1M447 149.5h1M31 150.5h1M64 150.5h2M76 150.5h1M98 150.5h1M127 150.5h4M148 150.5h1M170 150.5h1M380 150.5h1M402 150.5h1M407 150.5h2M414 150.5h1M447 150.5h1M30 151.5h1M64 151.5h1M66 151.5h2M75 151.5h1M97 151.5h1M131 151.5h2M170 151.5h1M381 151.5h1M403 151.5h1M405 151.5h2M414 151.5h1M448 151.5h1M30 152.5h1M63 152.5h1M68 152.5h2M75 152.5h1M96 152.5h1M131 152.5h1M150 152.5h1M169 152.5h1M382 152.5h1M403 152.5h2M415 152.5h1M448 152.5h1M29 153.5h1M63 153.5h1M70 153.5h2M74 153.5h1M96 153.5h1M129 153.5h2M168 153.5h1M382 153.5h1M403 153.5h2M415 153.5h1M449 153.5h1M29 154.5h1M63 154.5h1M72 154.5h3M95 154.5h1M128 154.5h1M152 154.5h1M168 154.5h1M383 154.5h1M401 154.5h2M404 154.5h1M415 154.5h1M449 154.5h1M29 155.5h1M62 155.5h1M73 155.5h1M95 155.5h1M127 155.5h1M167 155.5h1M383 155.5h1M399 155.5h2M405 155.5h1M416 155.5h1M449 155.5h1M28 156.5h1M62 156.5h1M73 156.5h1M94 156.5h1M125 156.5h2M154 156.5h1M160 156.5h1M167 156.5h1M384 156.5h1M397 156.5h2M405 156.5h1M416 156.5h1M450 156.5h1M28 157.5h1M61 157.5h1M72 157.5h1M94 157.5h1M124 157.5h1M140 157.5h1M143 157.5h1M160 157.5h1M166 157.5h1M384 157.5h1M395 157.5h2M406 157.5h1M417 157.5h1M450 157.5h1M27 158.5h1M61 158.5h1M72 158.5h1M93 158.5h1M123 158.5h1M140 158.5h1M156 158.5h1M160 158.5h1M165 158.5h1M385 158.5h1M393 158.5h2M406 158.5h1M417 158.5h1M451 158.5h1M27 159.5h1M60 159.5h1M71 159.5h1M93 159.5h1M122 159.5h1M142 159.5h1M159 159.5h1M165 159.5h1M385 159.5h1M391 159.5h2M407 159.5h1M418 159.5h1M451 159.5h1M27 160.5h1M60 160.5h1M71 160.5h1M92 160.5h1M120 160.5h2M142 160.5h1M147 160.5h1M158 160.5h2M164 160.5h1M386 160.5h1M389 160.5h2M407 160.5h1M418 160.5h1M451 160.5h1M26 161.5h1M59 161.5h1M70 161.5h1M92 161.5h1M119 161.5h1M144 161.5h1M159 161.5h1M164 161.5h1M386 161.5h1M388 161.5h1M408 161.5h1M419 161.5h1M452 161.5h1M26 162.5h1M59 162.5h1M70 162.5h1M91 162.5h1M118 162.5h1M146 162.5h1M149 162.5h1M159 162.5h2M163 162.5h1M387 162.5h1M408 162.5h1M419 162.5h1M452 162.5h1M26 163.5h1M58 163.5h1M69 163.5h1M91 163.5h1M116 163.5h2M146 163.5h1M158 163.5h1M163 163.5h1M387 163.5h1M409 163.5h1M420 163.5h1M452 163.5h1M25 164.5h1M58 164.5h1M69 164.5h1M90 164.5h1M115 164.5h1M148 164.5h1M151 164.5h1M158 164.5h1M162 164.5h1M388 164.5h1M409 164.5h1M418 164.5h3M453 164.5h1M25 165.5h1M57 165.5h1M69 165.5h1M90 165.5h1M114 165.5h1M148 165.5h1M158 165.5h1M388 165.5h1M409 165.5h1M415 165.5h3M421 165.5h1M453 165.5h1M24 166.5h1M57 166.5h3M68 166.5h1M89 166.5h1M150 166.5h1M153 166.5h1M158 166.5h1M389 166.5h1M410 166.5h1M413 166.5h2M421 166.5h1M454 166.5h1M24 167.5h1M57 167.5h1M60 167.5h2M68 167.5h1M88 167.5h1M155 167.5h1M157 167.5h1M390 167.5h1M410 167.5h3M421 167.5h1M454 167.5h1M23 168.5h1M56 168.5h1M62 168.5h3M68 168.5h1M88 168.5h1M149 168.5h2M152 168.5h1M157 168.5h1M390 168.5h1M410 168.5h1M422 168.5h1M455 168.5h1M23 169.5h1M56 169.5h1M65 169.5h3M87 169.5h1M151 169.5h2M154 169.5h1M157 169.5h1M391 169.5h1M411 169.5h1M422 169.5h1M455 169.5h1M23 170.5h1M56 170.5h1M67 170.5h1M87 170.5h1M153 170.5h2M391 170.5h1M411 170.5h1M422 170.5h1M455 170.5h1M22 171.5h1M55 171.5h1M66 171.5h1M86 171.5h1M155 171.5h2M392 171.5h1M412 171.5h1M423 171.5h1M456 171.5h1M22 172.5h1M55 172.5h1M66 172.5h1M86 172.5h1M154 172.5h2M392 172.5h1M412 172.5h1M423 172.5h1M456 172.5h1M22 173.5h3M55 173.5h1M65 173.5h1M85 173.5h1M153 173.5h1M393 173.5h1M413 173.5h1M423 173.5h1M456 173.5h1M22 174.5h1M25 174.5h4M54 174.5h1M65 174.5h1M85 174.5h1M151 174.5h2M393 174.5h1M413 174.5h1M424 174.5h1M456 174.5h1M21 175.5h1M29 175.5h3M54 175.5h1M64 175.5h1M85 175.5h1M150 175.5h1M393 175.5h1M414 175.5h1M424 175.5h1M457 175.5h1M21 176.5h1M32 176.5h4M54 176.5h1M64 176.5h1M84 176.5h1M148 176.5h2M394 176.5h1M414 176.5h1M424 176.5h1M457 176.5h1M21 177.5h1M36 177.5h3M54 177.5h1M64 177.5h1M84 177.5h1M146 177.5h2M394 177.5h1M414 177.5h1M424 177.5h1M457 177.5h1M21 178.5h1M39 178.5h4M53 178.5h1M63 178.5h1M84 178.5h1M145 178.5h1M394 178.5h1M415 178.5h1M425 178.5h1M457 178.5h1M20 179.5h1M43 179.5h3M53 179.5h1M63 179.5h1M83 179.5h1M143 179.5h2M395 179.5h1M415 179.5h1M425 179.5h1M458 179.5h1M20 180.5h1M46 180.5h4M53 180.5h1M63 180.5h1M83 180.5h1M142 180.5h1M395 180.5h1M415 180.5h1M423 180.5h3M458 180.5h1M20 181.5h1M50 181.5h3M62 181.5h1M82 181.5h1M140 181.5h2M396 181.5h1M416 181.5h1M419 181.5h4M426 181.5h1M458 181.5h1M20 182.5h1M52 182.5h3M62 182.5h1M82 182.5h1M139 182.5h1M396 182.5h1M416 182.5h3M426 182.5h1M458 182.5h1M19 183.5h1M52 183.5h1M55 183.5h4M62 183.5h1M82 183.5h1M396 183.5h1M416 183.5h1M426 183.5h1M459 183.5h1M19 184.5h1M51 184.5h1M59 184.5h3M81 184.5h1M397 184.5h1M417 184.5h1M427 184.5h1M459 184.5h1M19 185.5h1M51 185.5h1M61 185.5h1M81 185.5h1M397 185.5h1M417 185.5h1M427 185.5h1M459 185.5h1M18 186.5h1M51 186.5h1M61 186.5h1M81 186.5h1M397 186.5h1M417 186.5h1M427 186.5h1M460 186.5h1M18 187.5h1M50 187.5h1M60 187.5h1M80 187.5h1M398 187.5h1M418 187.5h1M428 187.5h1M460 187.5h1M18 188.5h1M50 188.5h1M60 188.5h1M80 188.5h1M398 188.5h1M418 188.5h1M428 188.5h1M460 188.5h1M18 189.5h1M50 189.5h1M60 189.5h1M80 189.5h1M398 189.5h1M418 189.5h1M428 189.5h1M458 189.5h3M17 190.5h1M50 190.5h1M60 190.5h1M79 190.5h1M399 190.5h1M418 190.5h1M428 190.5h1M454 190.5h4M461 190.5h1M17 191.5h1M49 191.5h1M59 191.5h1M79 191.5h1M399 191.5h1M419 191.5h1M429 191.5h1M450 191.5h4M461 191.5h1M17 192.5h1M49 192.5h1M59 192.5h1M78 192.5h1M400 192.5h1M419 192.5h1M429 192.5h1M446 192.5h4M461 192.5h1M17 193.5h1M49 193.5h1M59 193.5h1M78 193.5h1M400 193.5h1M419 193.5h1M429 193.5h1M442 193.5h4M461 193.5h1M16 194.5h1M48 194.5h1M59 194.5h1M78 194.5h1M400 194.5h1M419 194.5h1M430 194.5h1M438 194.5h4M462 194.5h1M16 195.5h1M48 195.5h1M59 195.5h1M78 195.5h1M101 195.5h2M400 195.5h1M419 195.5h1M430 195.5h1M434 195.5h4M462 195.5h1M16 196.5h1M48 196.5h1M58 196.5h1M77 196.5h1M103 196.5h3M401 196.5h1M420 196.5h1M427 196.5h7M462 196.5h1M16 197.5h1M48 197.5h1M58 197.5h1M77 197.5h1M106 197.5h2M401 197.5h1M420 197.5h1M423 197.5h4M430 197.5h1M462 197.5h1M15 198.5h1M47 198.5h3M58 198.5h1M77 198.5h1M401 198.5h1M420 198.5h3M431 198.5h1M463 198.5h1M15 199.5h1M47 199.5h1M50 199.5h4M58 199.5h1M77 199.5h1M401 199.5h1M420 199.5h1M431 199.5h1M463 199.5h1M15 200.5h1M47 200.5h1M54 200.5h4M77 200.5h1M118 200.5h1M401 200.5h1M421 200.5h1M431 200.5h1M463 200.5h1M15 201.5h1M47 201.5h1M57 201.5h1M77 201.5h1M120 201.5h1M401 201.5h1M421 201.5h1M431 201.5h1M463 201.5h1M15 202.5h1M46 202.5h1M57 202.5h1M76 202.5h1M122 202.5h1M402 202.5h1M421 202.5h1M432 202.5h1M463 202.5h1M15 203.5h1M46 203.5h1M57 203.5h1M76 203.5h1M124 203.5h1M126 203.5h1M402 203.5h1M421 203.5h1M432 203.5h1M463 203.5h1M14 204.5h1M46 204.5h1M56 204.5h1M76 204.5h1M402 204.5h1M422 204.5h1M432 204.5h1M464 204.5h1M14 205.5h1M46 205.5h1M56 205.5h1M76 205.5h1M130 205.5h2M402 205.5h1M422 205.5h1M432 205.5h1M464 205.5h1M14 206.5h1M46 206.5h1M56 206.5h1M76 206.5h1M132 206.5h3M402 206.5h1M422 206.5h1M432 206.5h1M464 206.5h1M14 207.5h1M46 207.5h1M56 207.5h1M76 207.5h1M135 207.5h2M402 207.5h1M422 207.5h1M432 207.5h1M464 207.5h1M14 208.5h1M46 208.5h1M56 208.5h1M75 208.5h1M403 208.5h1M422 208.5h1M432 208.5h1M464 208.5h1M14 209.5h1M45 209.5h1M56 209.5h1M75 209.5h1M403 209.5h1M422 209.5h1M433 209.5h1M464 209.5h1M14 210.5h1M45 210.5h1M56 210.5h1M75 210.5h1M403 210.5h1M422 210.5h1M433 210.5h1M464 210.5h1M14 211.5h1M45 211.5h1M55 211.5h1M75 211.5h1M403 211.5h1M423 211.5h1M433 211.5h1M464 211.5h1M13 212.5h1M45 212.5h1M55 212.5h1M75 212.5h1M403 212.5h1M423 212.5h1M433 212.5h1M465 212.5h1M13 213.5h1M45 213.5h1M55 213.5h1M74 213.5h1M404 213.5h1M423 213.5h1M428 213.5h6M465 213.5h1M13 214.5h1M45 214.5h1M55 214.5h1M74 214.5h1M404 214.5h1M423 214.5h5M433 214.5h1M465 214.5h1M13 215.5h1M45 215.5h4M55 215.5h1M74 215.5h1M404 215.5h1M423 215.5h1M433 215.5h1M465 215.5h1M13 216.5h1M44 216.5h1M49 216.5h5M55 216.5h1M74 216.5h1M404 216.5h1M423 216.5h1M434 216.5h1M465 216.5h1M13 217.5h1M44 217.5h1M54 217.5h1M74 217.5h1M404 217.5h1M424 217.5h1M434 217.5h1M465 217.5h1M13 218.5h1M44 218.5h1M54 218.5h1M74 218.5h1M404 218.5h1M424 218.5h1M434 218.5h1M465 218.5h1M13 219.5h1M44 219.5h1M54 219.5h1M73 219.5h1M405 219.5h1M424 219.5h1M434 219.5h1M465 219.5h1M13 220.5h1M44 220.5h1M54 220.5h1M73 220.5h1M405 220.5h1M424 220.5h1M434 220.5h1M465 220.5h1M13 221.5h1M44 221.5h1M54 221.5h1M73 221.5h1M405 221.5h1M424 221.5h1M434 221.5h1M465 221.5h1M13 222.5h1M44 222.5h1M54 222.5h1M73 222.5h1M405 222.5h1M424 222.5h1M434 222.5h1M465 222.5h1M13 223.5h1M43 223.5h1M53 223.5h1M73 223.5h1M405 223.5h1M425 223.5h1M435 223.5h1M465 223.5h1M13 224.5h1M43 224.5h1M53 224.5h1M73 224.5h1M405 224.5h1M425 224.5h1M435 224.5h1M465 224.5h1M13 225.5h1M43 225.5h1M53 225.5h1M72 225.5h1M406 225.5h1M425 225.5h1M435 225.5h1M465 225.5h1M13 226.5h1M43 226.5h1M53 226.5h1M72 226.5h1M406 226.5h1M425 226.5h1M435 226.5h1M465 226.5h1M13 227.5h1M43 227.5h1M53 227.5h1M72 227.5h1M406 227.5h1M425 227.5h1M435 227.5h1M465 227.5h1M12 228.5h1M43 228.5h1M53 228.5h1M72 228.5h1M406 228.5h1M425 228.5h1M435 228.5h1M466 228.5h1M12 229.5h1M43 229.5h1M53 229.5h1M72 229.5h1M406 229.5h1M425 229.5h1M435 229.5h1M466 229.5h1M12 230.5h1M43 230.5h1M53 230.5h1M72 230.5h1M406 230.5h1M425 230.5h11M466 230.5h1M12 231.5h1M43 231.5h1M53 231.5h1M72 231.5h1M406 231.5h1M425 231.5h1M435 231.5h1M466 231.5h1M12 232.5h1M43 232.5h11M72 232.5h1M406 232.5h1M425 232.5h1M435 232.5h1M466 232.5h1M12 233.5h1M43 233.5h1M53 233.5h1M72 233.5h1M406 233.5h1M425 233.5h1M435 233.5h1M466 233.5h1M12 234.5h1M43 234.5h1M53 234.5h1M72 234.5h1M406 234.5h1M425 234.5h1M435 234.5h1M466 234.5h1M12 235.5h1M43 235.5h1M53 235.5h1M72 235.5h1M406 235.5h1M425 235.5h1M435 235.5h1M466 235.5h1M12 236.5h1M43 236.5h1M53 236.5h1M72 236.5h1M406 236.5h1M425 236.5h1M435 236.5h1M466 236.5h1M12 237.5h1M43 237.5h1M53 237.5h1M72 237.5h1M406 237.5h1M425 237.5h1M435 237.5h1M466 237.5h1M12 238.5h1M43 238.5h1M53 238.5h1M72 238.5h1M406 238.5h1M425 238.5h1M435 238.5h1M466 238.5h1M12 239.5h1M43 239.5h1M53 239.5h20M406 239.5h20M435 239.5h1M466 239.5h1M12 240.5h1M43 240.5h1M53 240.5h1M72 240.5h1M406 240.5h1M425 240.5h1M435 240.5h1M466 240.5h1M12 241.5h1M43 241.5h1M53 241.5h1M72 241.5h1M406 241.5h1M425 241.5h1M435 241.5h1M466 241.5h1M12 242.5h1M43 242.5h1M53 242.5h1M72 242.5h1M124 242.5h1M406 242.5h1M425 242.5h1M435 242.5h1M466 242.5h1M12 243.5h1M43 243.5h1M53 243.5h1M72 243.5h1M125 243.5h1M406 243.5h1M425 243.5h1M435 243.5h1M466 243.5h1M12 244.5h1M43 244.5h1M53 244.5h1M72 244.5h1M94 244.5h1M126 244.5h1M406 244.5h1M425 244.5h1M435 244.5h1M466 244.5h1M12 245.5h1M43 245.5h1M53 245.5h1M72 245.5h1M95 245.5h1M126 245.5h1M406 245.5h1M425 245.5h1M435 245.5h1M466 245.5h1M12 246.5h1M43 246.5h1M53 246.5h1M72 246.5h1M95 246.5h1M127 246.5h1M406 246.5h1M425 246.5h11M466 246.5h1M12 247.5h1M43 247.5h1M53 247.5h1M72 247.5h1M96 247.5h1M128 247.5h1M406 247.5h1M425 247.5h1M435 247.5h1M466 247.5h1M12 248.5h1M43 248.5h11M72 248.5h1M96 248.5h1M129 248.5h1M406 248.5h1M425 248.5h1M435 248.5h1M466 248.5h1M12 249.5h1M43 249.5h1M53 249.5h1M72 249.5h1M97 249.5h1M130 249.5h1M406 249.5h1M425 249.5h1M435 249.5h1M466 249.5h1M13 250.5h1M43 250.5h1M53 250.5h1M72 250.5h1M98 250.5h1M130 250.5h1M406 250.5h1M425 250.5h1M435 250.5h1M465 250.5h1M13 251.5h1M43 251.5h1M53 251.5h1M72 251.5h1M98 251.5h1M131 251.5h1M406 251.5h1M425 251.5h1M435 251.5h1M465 251.5h1M13 252.5h1M43 252.5h1M53 252.5h1M72 252.5h1M99 252.5h1M130 252.5h1M132 252.5h1M406 252.5h1M425 252.5h1M435 252.5h1M465 252.5h1M13 253.5h1M43 253.5h1M53 253.5h1M73 253.5h1M99 253.5h1M122 253.5h1M124 253.5h1M126 253.5h1M128 253.5h1M405 253.5h1M425 253.5h1M435 253.5h1M465 253.5h1M13 254.5h1M43 254.5h1M53 254.5h1M73 254.5h1M100 254.5h1M116 254.5h1M118 254.5h1M120 254.5h1M405 254.5h1M425 254.5h1M435 254.5h1M465 254.5h1M13 255.5h1M43 255.5h1M54 255.5h1M73 255.5h1M100 255.5h1M112 255.5h1M114 255.5h1M405 255.5h1M424 255.5h1M435 255.5h1M465 255.5h1M13 256.5h1M44 256.5h1M54 256.5h1M73 256.5h1M101 256.5h1M405 256.5h1M424 256.5h1M434 256.5h1M465 256.5h1M13 257.5h1M44 257.5h1M54 257.5h1M73 257.5h1M405 257.5h1M424 257.5h1M434 257.5h1M465 257.5h1M13 258.5h1M44 258.5h1M54 258.5h1M73 258.5h1M126 258.5h2M405 258.5h1M424 258.5h1M434 258.5h1M465 258.5h1M13 259.5h1M44 259.5h1M54 259.5h1M74 259.5h1M128 259.5h4M404 259.5h1M424 259.5h1M434 259.5h1M465 259.5h1M13 260.5h1M44 260.5h1M54 260.5h1M74 260.5h1M132 260.5h3M404 260.5h1M424 260.5h1M434 260.5h1M465 260.5h1M13 261.5h1M44 261.5h1M55 261.5h1M74 261.5h1M128 261.5h1M130 261.5h1M404 261.5h1M423 261.5h1M434 261.5h1M465 261.5h1M13 262.5h1M44 262.5h1M55 262.5h1M74 262.5h1M124 262.5h1M126 262.5h1M132 262.5h1M134 262.5h1M404 262.5h1M423 262.5h1M425 262.5h4M434 262.5h1M465 262.5h1M13 263.5h1M45 263.5h1M55 263.5h1M74 263.5h1M96 263.5h1M120 263.5h1M122 263.5h1M128 263.5h1M130 263.5h1M134 263.5h1M404 263.5h1M423 263.5h1M429 263.5h5M465 263.5h1M13 264.5h1M45 264.5h1M50 264.5h6M74 264.5h1M97 264.5h2M116 264.5h1M118 264.5h1M122 264.5h1M124 264.5h1M126 264.5h1M133 264.5h1M404 264.5h1M423 264.5h1M433 264.5h1M465 264.5h1M13 265.5h1M45 265.5h5M55 265.5h1M75 265.5h1M99 265.5h2M114 265.5h1M118 265.5h1M133 265.5h1M403 265.5h1M423 265.5h1M433 265.5h1M465 265.5h1M14 266.5h1M45 266.5h1M55 266.5h1M75 266.5h1M101 266.5h2M114 266.5h1M116 266.5h1M133 266.5h1M403 266.5h1M423 266.5h1M433 266.5h1M464 266.5h1M14 267.5h1M45 267.5h1M55 267.5h1M75 267.5h1M103 267.5h1M132 267.5h1M403 267.5h1M423 267.5h1M433 267.5h1M464 267.5h1M14 268.5h1M45 268.5h1M56 268.5h1M75 268.5h1M132 268.5h1M403 268.5h1M422 268.5h1M433 268.5h1M464 268.5h1M14 269.5h1M45 269.5h1M56 269.5h1M75 269.5h1M103 269.5h1M132 269.5h1M403 269.5h1M422 269.5h1M433 269.5h1M464 269.5h1M14 270.5h1M46 270.5h1M56 270.5h1M75 270.5h1M103 270.5h1M132 270.5h1M403 270.5h1M422 270.5h1M432 270.5h1M464 270.5h1M14 271.5h1M46 271.5h1M56 271.5h1M76 271.5h1M103 271.5h1M131 271.5h1M402 271.5h1M422 271.5h1M432 271.5h1M464 271.5h1M14 272.5h1M46 272.5h1M56 272.5h1M76 272.5h1M103 272.5h1M131 272.5h1M402 272.5h1M422 272.5h1M432 272.5h1M464 272.5h1M14 273.5h1M46 273.5h1M56 273.5h1M76 273.5h1M102 273.5h1M131 273.5h1M402 273.5h1M422 273.5h1M432 273.5h1M464 273.5h1M15 274.5h1M46 274.5h1M57 274.5h1M76 274.5h1M102 274.5h1M130 274.5h1M402 274.5h1M421 274.5h1M432 274.5h1M463 274.5h1M15 275.5h1M46 275.5h1M57 275.5h1M76 275.5h1M102 275.5h1M130 275.5h1M402 275.5h1M421 275.5h1M432 275.5h1M463 275.5h1M15 276.5h1M47 276.5h1M57 276.5h1M77 276.5h1M102 276.5h1M401 276.5h1M421 276.5h1M431 276.5h1M463 276.5h1M15 277.5h1M47 277.5h1M57 277.5h1M77 277.5h1M102 277.5h1M401 277.5h1M421 277.5h1M431 277.5h1M463 277.5h1M15 278.5h1M47 278.5h1M57 278.5h1M77 278.5h1M102 278.5h1M401 278.5h1M421 278.5h3M431 278.5h1M463 278.5h1M15 279.5h1M47 279.5h1M58 279.5h1M77 279.5h1M101 279.5h1M401 279.5h1M420 279.5h1M424 279.5h4M431 279.5h1M463 279.5h1M16 280.5h1M47 280.5h1M55 280.5h4M77 280.5h1M101 280.5h1M401 280.5h1M420 280.5h1M428 280.5h4M462 280.5h1M16 281.5h1M48 281.5h1M51 281.5h4M58 281.5h1M77 281.5h1M101 281.5h1M401 281.5h1M420 281.5h1M430 281.5h1M462 281.5h1M16 282.5h1M45 282.5h6M58 282.5h1M78 282.5h1M101 282.5h1M400 282.5h1M420 282.5h1M430 282.5h1M462 282.5h1M16 283.5h1M41 283.5h4M48 283.5h1M59 283.5h1M78 283.5h1M400 283.5h1M419 283.5h1M430 283.5h1M462 283.5h1M17 284.5h1M37 284.5h4M48 284.5h1M59 284.5h1M78 284.5h1M400 284.5h1M419 284.5h1M430 284.5h1M461 284.5h1M17 285.5h1M33 285.5h4M49 285.5h1M59 285.5h1M78 285.5h1M400 285.5h1M419 285.5h1M429 285.5h1M461 285.5h1M17 286.5h1M29 286.5h4M49 286.5h1M59 286.5h1M78 286.5h1M400 286.5h1M419 286.5h1M429 286.5h1M461 286.5h1M17 287.5h1M25 287.5h4M49 287.5h1M60 287.5h1M79 287.5h1M399 287.5h1M418 287.5h1M429 287.5h1M461 287.5h1M18 288.5h1M21 288.5h4M50 288.5h1M60 288.5h1M79 288.5h1M399 288.5h1M418 288.5h1M428 288.5h1M460 288.5h1M18 289.5h3M50 289.5h1M60 289.5h1M80 289.5h1M398 289.5h1M418 289.5h1M428 289.5h1M460 289.5h1M18 290.5h1M50 290.5h1M60 290.5h1M80 290.5h1M398 290.5h1M418 290.5h1M428 290.5h1M460 290.5h1M18 291.5h1M50 291.5h1M60 291.5h1M80 291.5h1M398 291.5h1M418 291.5h1M428 291.5h1M460 291.5h1M19 292.5h1M51 292.5h1M61 292.5h1M81 292.5h1M397 292.5h1M417 292.5h1M427 292.5h1M459 292.5h1M19 293.5h1M51 293.5h1M61 293.5h1M81 293.5h1M397 293.5h1M417 293.5h1M427 293.5h1M459 293.5h1M19 294.5h1M51 294.5h1M61 294.5h1M81 294.5h1M397 294.5h1M417 294.5h3M427 294.5h1M459 294.5h1M19 295.5h1M52 295.5h1M62 295.5h1M82 295.5h1M396 295.5h1M416 295.5h1M420 295.5h4M426 295.5h1M459 295.5h1M20 296.5h1M52 296.5h1M59 296.5h4M82 296.5h1M396 296.5h1M416 296.5h1M424 296.5h3M458 296.5h1M20 297.5h1M52 297.5h1M55 297.5h4M62 297.5h1M82 297.5h1M396 297.5h1M416 297.5h1M426 297.5h3M458 297.5h1M20 298.5h1M53 298.5h2M63 298.5h1M83 298.5h1M395 298.5h1M415 298.5h1M425 298.5h1M429 298.5h4M458 298.5h1M20 299.5h1M53 299.5h1M63 299.5h1M83 299.5h1M395 299.5h1M415 299.5h1M425 299.5h1M433 299.5h3M458 299.5h1M21 300.5h1M53 300.5h1M63 300.5h1M84 300.5h1M394 300.5h1M415 300.5h1M425 300.5h1M436 300.5h4M457 300.5h1M21 301.5h1M54 301.5h1M64 301.5h1M84 301.5h1M394 301.5h1M414 301.5h1M424 301.5h1M440 301.5h3M457 301.5h1M21 302.5h1M54 302.5h1M64 302.5h1M84 302.5h1M394 302.5h1M414 302.5h1M424 302.5h1M443 302.5h4M457 302.5h1M22 303.5h1M54 303.5h1M65 303.5h1M85 303.5h1M393 303.5h1M413 303.5h1M424 303.5h1M447 303.5h3M456 303.5h1M22 304.5h1M54 304.5h1M65 304.5h1M85 304.5h1M393 304.5h1M413 304.5h1M424 304.5h1M450 304.5h4M456 304.5h1M22 305.5h1M55 305.5h1M66 305.5h1M85 305.5h1M393 305.5h1M412 305.5h1M423 305.5h1M454 305.5h3M22 306.5h1M55 306.5h1M66 306.5h1M86 306.5h1M392 306.5h1M412 306.5h1M423 306.5h1M456 306.5h1M23 307.5h1M55 307.5h1M67 307.5h1M86 307.5h1M392 307.5h1M411 307.5h1M423 307.5h1M455 307.5h1M23 308.5h1M56 308.5h1M67 308.5h1M87 308.5h1M391 308.5h1M411 308.5h1M422 308.5h1M455 308.5h1M23 309.5h1M56 309.5h1M67 309.5h1M87 309.5h1M391 309.5h1M411 309.5h3M422 309.5h1M455 309.5h1M23 310.5h1M56 310.5h1M68 310.5h1M88 310.5h1M390 310.5h1M410 310.5h1M414 310.5h2M422 310.5h1M455 310.5h1M24 311.5h1M57 311.5h1M66 311.5h3M88 311.5h1M390 311.5h1M410 311.5h1M416 311.5h3M421 311.5h1M454 311.5h1M24 312.5h1M57 312.5h1M63 312.5h3M68 312.5h1M89 312.5h1M389 312.5h1M410 312.5h1M419 312.5h3M454 312.5h1M25 313.5h1M58 313.5h1M61 313.5h2M69 313.5h1M90 313.5h1M388 313.5h1M409 313.5h1M420 313.5h1M453 313.5h1M25 314.5h1M58 314.5h3M69 314.5h1M90 314.5h1M388 314.5h1M409 314.5h1M420 314.5h1M453 314.5h1M26 315.5h1M59 315.5h1M70 315.5h1M91 315.5h1M387 315.5h1M408 315.5h1M419 315.5h1M452 315.5h1M26 316.5h1M59 316.5h1M70 316.5h1M91 316.5h1M387 316.5h1M408 316.5h1M419 316.5h1M452 316.5h1M26 317.5h1M60 317.5h1M71 317.5h1M90 317.5h1M92 317.5h1M386 317.5h1M407 317.5h1M418 317.5h1M452 317.5h1M27 318.5h1M60 318.5h1M71 318.5h1M88 318.5h2M92 318.5h1M386 318.5h1M407 318.5h1M418 318.5h1M451 318.5h1M27 319.5h1M60 319.5h1M72 319.5h1M86 319.5h2M93 319.5h1M385 319.5h1M406 319.5h1M418 319.5h1M451 319.5h1M28 320.5h1M61 320.5h1M72 320.5h1M84 320.5h2M93 320.5h1M385 320.5h1M406 320.5h1M417 320.5h1M450 320.5h1M28 321.5h1M61 321.5h1M73 321.5h1M82 321.5h2M94 321.5h1M384 321.5h1M405 321.5h1M417 321.5h1M450 321.5h1M28 322.5h1M62 322.5h1M73 322.5h1M80 322.5h2M94 322.5h1M384 322.5h1M405 322.5h1M416 322.5h1M450 322.5h1M29 323.5h1M62 323.5h1M74 323.5h1M78 323.5h2M95 323.5h1M383 323.5h1M404 323.5h1M416 323.5h1M449 323.5h1M29 324.5h1M63 324.5h1M74 324.5h1M76 324.5h2M95 324.5h1M383 324.5h1M404 324.5h2M415 324.5h1M449 324.5h1M29 325.5h1M63 325.5h1M75 325.5h1M96 325.5h1M382 325.5h1M403 325.5h1M406 325.5h2M415 325.5h1M449 325.5h1M30 326.5h1M64 326.5h1M73 326.5h3M96 326.5h1M382 326.5h1M403 326.5h1M408 326.5h2M414 326.5h1M448 326.5h1M30 327.5h1M64 327.5h1M71 327.5h2M76 327.5h1M97 327.5h1M381 327.5h1M402 327.5h1M410 327.5h2M414 327.5h1M448 327.5h1M31 328.5h1M65 328.5h1M69 328.5h2M76 328.5h1M98 328.5h1M380 328.5h1M402 328.5h1M412 328.5h2M447 328.5h1M31 329.5h1M65 329.5h1M67 329.5h2M77 329.5h1M99 329.5h1M379 329.5h1M401 329.5h1M413 329.5h1M447 329.5h1M32 330.5h1M66 330.5h1M77 330.5h1M99 330.5h1M379 330.5h1M401 330.5h1M412 330.5h1M446 330.5h1M32 331.5h1M66 331.5h1M78 331.5h1M100 331.5h1M378 331.5h1M400 331.5h1M412 331.5h1M446 331.5h1M32 332.5h1M67 332.5h1M78 332.5h1M101 332.5h1M186 332.5h1M377 332.5h1M400 332.5h1M411 332.5h1M446 332.5h1M33 333.5h1M67 333.5h1M79 333.5h1M102 333.5h1M185 333.5h1M376 333.5h1M399 333.5h1M411 333.5h1M445 333.5h1M33 334.5h1M68 334.5h1M79 334.5h1M102 334.5h1M185 334.5h1M376 334.5h1M399 334.5h1M410 334.5h1M445 334.5h1M34 335.5h1M68 335.5h1M80 335.5h1M103 335.5h1M184 335.5h1M375 335.5h1M398 335.5h1M410 335.5h1M444 335.5h1M34 336.5h1M69 336.5h1M80 336.5h1M103 336.5h1M184 336.5h1M375 336.5h1M398 336.5h1M409 336.5h1M444 336.5h1M35 337.5h1M69 337.5h1M81 337.5h1M104 337.5h1M183 337.5h1M374 337.5h1M397 337.5h1M409 337.5h1M443 337.5h1M35 338.5h1M70 338.5h1M82 338.5h1M105 338.5h1M183 338.5h1M373 338.5h1M396 338.5h2M408 338.5h1M443 338.5h1M36 339.5h1M70 339.5h1M82 339.5h1M106 339.5h1M182 339.5h1M372 339.5h1M396 339.5h1M398 339.5h2M408 339.5h1M442 339.5h1M36 340.5h1M71 340.5h1M82 340.5h2M106 340.5h1M182 340.5h1M372 340.5h1M395 340.5h1M400 340.5h1M407 340.5h1M442 340.5h1M37 341.5h1M72 341.5h1M80 341.5h2M84 341.5h1M107 341.5h1M371 341.5h1M394 341.5h1M401 341.5h1M406 341.5h1M441 341.5h1M37 342.5h1M72 342.5h1M79 342.5h1M84 342.5h1M108 342.5h1M180 342.5h1M370 342.5h1M394 342.5h1M402 342.5h2M406 342.5h1M441 342.5h1M38 343.5h1M73 343.5h1M78 343.5h1M85 343.5h1M109 343.5h1M369 343.5h1M393 343.5h1M404 343.5h2M440 343.5h1M38 344.5h1M74 344.5h1M76 344.5h2M86 344.5h1M110 344.5h1M179 344.5h1M368 344.5h1M392 344.5h1M404 344.5h1M440 344.5h1M39 345.5h1M75 345.5h1M87 345.5h1M110 345.5h1M368 345.5h1M391 345.5h1M403 345.5h1M439 345.5h1M39 346.5h1M75 346.5h1M87 346.5h1M111 346.5h1M178 346.5h1M367 346.5h1M391 346.5h1M403 346.5h1M439 346.5h1M40 347.5h1M76 347.5h1M88 347.5h1M112 347.5h1M366 347.5h1M390 347.5h1M402 347.5h1M438 347.5h1M40 348.5h1M77 348.5h1M89 348.5h1M113 348.5h1M177 348.5h1M365 348.5h1M389 348.5h1M401 348.5h1M438 348.5h1M41 349.5h1M78 349.5h1M90 349.5h1M113 349.5h1M365 349.5h1M388 349.5h1M400 349.5h1M437 349.5h1M41 350.5h1M78 350.5h1M91 350.5h1M114 350.5h1M176 350.5h1M364 350.5h1M387 350.5h1M400 350.5h1M437 350.5h1M42 351.5h1M79 351.5h1M91 351.5h1M115 351.5h1M363 351.5h1M387 351.5h1M399 351.5h1M436 351.5h1M42 352.5h1M80 352.5h1M92 352.5h1M116 352.5h1M362 352.5h1M386 352.5h1M388 352.5h1M398 352.5h1M436 352.5h1M43 353.5h1M80 353.5h1M91 353.5h1M93 353.5h1M117 353.5h1M361 353.5h1M385 353.5h1M389 353.5h1M398 353.5h1M435 353.5h1M43 354.5h1M81 354.5h1M90 354.5h1M94 354.5h1M118 354.5h1M360 354.5h1M384 354.5h1M390 354.5h1M397 354.5h1M435 354.5h1M44 355.5h1M82 355.5h1M89 355.5h1M95 355.5h1M119 355.5h1M359 355.5h1M383 355.5h1M391 355.5h2M396 355.5h1M434 355.5h1M45 356.5h1M83 356.5h1M88 356.5h1M95 356.5h1M120 356.5h1M358 356.5h1M383 356.5h1M393 356.5h1M395 356.5h1M433 356.5h1M46 357.5h1M83 357.5h1M87 357.5h1M96 357.5h1M121 357.5h1M357 357.5h1M382 357.5h1M394 357.5h2M432 357.5h1M46 358.5h1M84 358.5h1M86 358.5h1M97 358.5h1M122 358.5h1M356 358.5h1M381 358.5h1M394 358.5h1M432 358.5h1M47 359.5h1M85 359.5h1M98 359.5h1M123 359.5h1M355 359.5h1M380 359.5h1M393 359.5h1M431 359.5h1M48 360.5h1M86 360.5h1M99 360.5h1M124 360.5h1M170 360.5h1M354 360.5h2M379 360.5h1M392 360.5h1M430 360.5h1M48 361.5h1M86 361.5h1M99 361.5h1M125 361.5h1M169 361.5h1M353 361.5h1M356 361.5h1M379 361.5h1M392 361.5h1M430 361.5h1M49 362.5h1M87 362.5h1M100 362.5h1M126 362.5h1M169 362.5h1M352 362.5h1M357 362.5h1M378 362.5h1M391 362.5h1M429 362.5h1M49 363.5h1M88 363.5h1M101 363.5h1M127 363.5h1M168 363.5h1M351 363.5h1M358 363.5h1M377 363.5h1M390 363.5h1M429 363.5h1M50 364.5h1M88 364.5h1M102 364.5h1M128 364.5h1M168 364.5h1M350 364.5h1M359 364.5h1M376 364.5h2M390 364.5h1M428 364.5h1M50 365.5h1M89 365.5h1M103 365.5h1M129 365.5h2M167 365.5h1M348 365.5h2M360 365.5h1M375 365.5h1M378 365.5h1M389 365.5h1M428 365.5h1M51 366.5h1M90 366.5h1M102 366.5h2M131 366.5h1M347 366.5h1M361 366.5h1M375 366.5h1M379 366.5h1M388 366.5h1M427 366.5h1M52 367.5h1M91 367.5h1M101 367.5h1M104 367.5h1M130 367.5h1M132 367.5h1M346 367.5h1M362 367.5h1M374 367.5h1M380 367.5h2M387 367.5h1M426 367.5h1M52 368.5h1M91 368.5h1M100 368.5h1M105 368.5h1M129 368.5h1M133 368.5h1M344 368.5h2M363 368.5h1M373 368.5h1M382 368.5h1M387 368.5h1M426 368.5h1M53 369.5h1M92 369.5h1M99 369.5h1M106 369.5h1M128 369.5h1M134 369.5h2M343 369.5h1M364 369.5h1M372 369.5h1M383 369.5h1M386 369.5h1M425 369.5h1M54 370.5h1M93 370.5h1M98 370.5h1M107 370.5h1M127 370.5h1M136 370.5h1M342 370.5h1M365 370.5h1M371 370.5h1M384 370.5h2M424 370.5h1M54 371.5h1M94 371.5h1M97 371.5h1M108 371.5h1M127 371.5h1M137 371.5h1M341 371.5h1M366 371.5h1M370 371.5h1M384 371.5h1M424 371.5h1M55 372.5h1M95 372.5h2M109 372.5h1M126 372.5h1M138 372.5h2M339 372.5h2M367 372.5h1M369 372.5h1M383 372.5h1M423 372.5h1M56 373.5h1M94 373.5h1M96 373.5h1M110 373.5h1M125 373.5h1M140 373.5h1M338 373.5h1M368 373.5h1M382 373.5h1M422 373.5h1M56 374.5h1M93 374.5h1M97 374.5h1M111 374.5h1M124 374.5h1M141 374.5h1M337 374.5h1M367 374.5h1M381 374.5h1M422 374.5h1M57 375.5h1M92 375.5h1M98 375.5h1M112 375.5h2M123 375.5h1M142 375.5h2M335 375.5h2M365 375.5h2M380 375.5h1M421 375.5h1M58 376.5h1M91 376.5h1M99 376.5h1M114 376.5h1M122 376.5h1M144 376.5h2M333 376.5h2M364 376.5h1M366 376.5h1M379 376.5h1M420 376.5h1M59 377.5h1M90 377.5h1M100 377.5h1M114 377.5h2M122 377.5h1M146 377.5h1M332 377.5h1M363 377.5h1M367 377.5h1M378 377.5h1M419 377.5h1M59 378.5h1M89 378.5h1M101 378.5h1M113 378.5h1M116 378.5h1M121 378.5h1M147 378.5h1M331 378.5h1M362 378.5h1M368 378.5h1M377 378.5h1M419 378.5h1M60 379.5h1M88 379.5h1M102 379.5h1M112 379.5h1M117 379.5h2M120 379.5h1M148 379.5h2M329 379.5h2M360 379.5h2M369 379.5h1M376 379.5h1M418 379.5h1M61 380.5h1M87 380.5h1M103 380.5h1M111 380.5h1M119 380.5h1M150 380.5h1M328 380.5h1M359 380.5h1M370 380.5h1M375 380.5h1M417 380.5h1M62 381.5h1M86 381.5h1M104 381.5h1M111 381.5h1M120 381.5h1M151 381.5h1M327 381.5h1M358 381.5h1M371 381.5h1M374 381.5h1M416 381.5h1M63 382.5h1M84 382.5h2M105 382.5h1M110 382.5h1M121 382.5h1M152 382.5h2M325 382.5h2M357 382.5h1M372 382.5h2M415 382.5h1M63 383.5h1M83 383.5h1M106 383.5h1M109 383.5h1M122 383.5h2M154 383.5h2M323 383.5h2M355 383.5h2M372 383.5h1M415 383.5h1M64 384.5h1M82 384.5h1M107 384.5h2M124 384.5h1M156 384.5h2M321 384.5h2M354 384.5h1M371 384.5h1M373 384.5h1M414 384.5h1M65 385.5h1M81 385.5h1M108 385.5h1M125 385.5h1M158 385.5h2M319 385.5h2M353 385.5h1M370 385.5h1M374 385.5h1M413 385.5h1M66 386.5h1M80 386.5h1M109 386.5h1M126 386.5h1M160 386.5h2M317 386.5h2M352 386.5h1M369 386.5h1M375 386.5h1M412 386.5h1M67 387.5h1M79 387.5h1M110 387.5h2M127 387.5h2M162 387.5h2M315 387.5h2M350 387.5h2M353 387.5h1M367 387.5h2M376 387.5h1M411 387.5h1M68 388.5h1M78 388.5h1M112 388.5h1M126 388.5h1M129 388.5h1M164 388.5h2M313 388.5h2M349 388.5h1M354 388.5h1M366 388.5h1M377 388.5h1M410 388.5h1M68 389.5h1M77 389.5h1M113 389.5h1M125 389.5h1M130 389.5h1M166 389.5h1M312 389.5h1M348 389.5h1M355 389.5h1M365 389.5h1M378 389.5h1M410 389.5h1M69 390.5h1M76 390.5h1M114 390.5h2M124 390.5h1M131 390.5h1M167 390.5h2M310 390.5h2M347 390.5h1M356 390.5h1M363 390.5h2M379 390.5h1M409 390.5h1M70 391.5h1M75 391.5h1M116 391.5h1M123 391.5h1M132 391.5h2M169 391.5h2M308 391.5h2M345 391.5h2M357 391.5h1M362 391.5h1M380 391.5h1M408 391.5h1M71 392.5h1M74 392.5h1M117 392.5h2M123 392.5h1M134 392.5h1M171 392.5h2M306 392.5h2M344 392.5h1M358 392.5h1M360 392.5h2M381 392.5h1M407 392.5h1M72 393.5h2M119 393.5h1M122 393.5h1M135 393.5h1M173 393.5h3M303 393.5h3M343 393.5h1M359 393.5h1M382 393.5h1M406 393.5h1M73 394.5h1M120 394.5h2M136 394.5h2M176 394.5h3M300 394.5h3M341 394.5h2M358 394.5h1M383 394.5h1M405 394.5h1M74 395.5h1M121 395.5h2M138 395.5h1M179 395.5h2M298 395.5h2M340 395.5h1M356 395.5h2M383 395.5h1M404 395.5h1M75 396.5h1M123 396.5h1M139 396.5h2M181 396.5h3M295 396.5h3M338 396.5h3M355 396.5h1M384 396.5h1M403 396.5h1M76 397.5h1M124 397.5h1M140 397.5h2M184 397.5h3M292 397.5h3M337 397.5h1M341 397.5h1M354 397.5h1M385 397.5h1M402 397.5h1M77 398.5h1M125 398.5h2M139 398.5h1M142 398.5h2M186 398.5h4M289 398.5h3M335 398.5h2M341 398.5h1M352 398.5h2M386 398.5h1M401 398.5h1M78 399.5h1M127 399.5h1M139 399.5h1M144 399.5h2M186 399.5h1M190 399.5h2M287 399.5h2M333 399.5h2M342 399.5h1M351 399.5h1M387 399.5h1M400 399.5h1M79 400.5h1M128 400.5h2M138 400.5h1M146 400.5h1M185 400.5h1M192 400.5h4M282 400.5h5M331 400.5h2M343 400.5h1M349 400.5h2M388 400.5h1M399 400.5h1M80 401.5h1M130 401.5h1M137 401.5h1M147 401.5h2M185 401.5h1M196 401.5h6M276 401.5h6M329 401.5h2M344 401.5h1M348 401.5h1M389 401.5h1M398 401.5h1M81 402.5h1M131 402.5h1M136 402.5h1M149 402.5h2M185 402.5h1M202 402.5h6M271 402.5h5M327 402.5h2M344 402.5h1M347 402.5h1M390 402.5h1M397 402.5h1M82 403.5h1M132 403.5h2M136 403.5h1M151 403.5h2M184 403.5h1M208 403.5h5M265 403.5h6M325 403.5h2M345 403.5h2M391 403.5h1M396 403.5h1M83 404.5h1M134 404.5h2M153 404.5h2M184 404.5h1M213 404.5h6M259 404.5h6M323 404.5h2M326 404.5h1M344 404.5h1M392 404.5h1M395 404.5h1M84 405.5h1M135 405.5h1M154 405.5h3M184 405.5h1M219 405.5h6M253 405.5h6M261 405.5h1M321 405.5h2M327 405.5h1M343 405.5h1M393 405.5h2M85 406.5h1M136 406.5h2M153 406.5h1M157 406.5h2M183 406.5h1M225 406.5h28M261 406.5h1M319 406.5h2M327 406.5h1M341 406.5h2M393 406.5h1M86 407.5h1M138 407.5h1M153 407.5h1M159 407.5h2M183 407.5h1M261 407.5h1M317 407.5h2M328 407.5h1M340 407.5h1M392 407.5h1M87 408.5h1M139 408.5h2M152 408.5h1M161 408.5h2M182 408.5h1M262 408.5h1M315 408.5h2M328 408.5h1M338 408.5h2M391 408.5h1M88 409.5h1M141 409.5h1M152 409.5h1M163 409.5h3M182 409.5h1M262 409.5h1M313 409.5h2M329 409.5h1M336 409.5h2M390 409.5h1M89 410.5h1M142 410.5h2M151 410.5h1M166 410.5h3M182 410.5h1M262 410.5h1M310 410.5h3M329 410.5h1M334 410.5h2M388 410.5h2M90 411.5h2M144 411.5h2M151 411.5h1M169 411.5h2M181 411.5h1M262 411.5h1M307 411.5h3M311 411.5h1M330 411.5h1M332 411.5h2M387 411.5h1M92 412.5h1M146 412.5h2M150 412.5h1M169 412.5h1M171 412.5h2M181 412.5h1M262 412.5h1M305 412.5h2M311 412.5h1M330 412.5h2M386 412.5h1M93 413.5h1M148 413.5h3M169 413.5h1M173 413.5h2M181 413.5h1M262 413.5h1M303 413.5h2M312 413.5h1M328 413.5h2M385 413.5h1M94 414.5h1M150 414.5h2M168 414.5h1M175 414.5h3M180 414.5h1M263 414.5h1M301 414.5h2M312 414.5h1M326 414.5h2M384 414.5h1M95 415.5h1M152 415.5h3M168 415.5h1M178 415.5h3M263 415.5h1M298 415.5h3M313 415.5h1M324 415.5h2M382 415.5h2M96 416.5h2M155 416.5h2M167 416.5h1M181 416.5h3M263 416.5h1M295 416.5h3M313 416.5h1M322 416.5h2M381 416.5h1M98 417.5h1M157 417.5h2M167 417.5h1M184 417.5h3M263 417.5h1M292 417.5h3M296 417.5h1M313 417.5h1M320 417.5h2M380 417.5h1M99 418.5h1M159 418.5h2M167 418.5h1M184 418.5h1M187 418.5h4M263 418.5h1M287 418.5h5M296 418.5h1M314 418.5h1M317 418.5h3M379 418.5h1M100 419.5h2M161 419.5h2M166 419.5h1M184 419.5h1M191 419.5h5M263 419.5h1M283 419.5h4M297 419.5h1M314 419.5h3M377 419.5h2M102 420.5h1M163 420.5h2M166 420.5h1M183 420.5h1M196 420.5h4M264 420.5h1M279 420.5h4M297 420.5h1M313 420.5h2M376 420.5h1M103 421.5h1M165 421.5h3M183 421.5h1M200 421.5h4M264 421.5h1M274 421.5h5M280 421.5h1M297 421.5h1M311 421.5h2M375 421.5h1M104 422.5h2M168 422.5h3M183 422.5h1M200 422.5h1M204 422.5h7M264 422.5h1M268 422.5h6M280 422.5h1M297 422.5h1M308 422.5h3M373 422.5h2M106 423.5h1M171 423.5h3M183 423.5h1M200 423.5h1M211 423.5h6M261 423.5h7M281 423.5h1M298 423.5h1M305 423.5h3M372 423.5h1M107 424.5h2M174 424.5h4M182 424.5h1M199 424.5h1M217 424.5h6M255 424.5h6M264 424.5h1M281 424.5h1M298 424.5h1M301 424.5h4M370 424.5h2M109 425.5h1M178 425.5h3M182 425.5h1M199 425.5h1M216 425.5h1M223 425.5h32M264 425.5h1M281 425.5h1M298 425.5h3M369 425.5h1M110 426.5h2M181 426.5h3M199 426.5h1M216 426.5h1M232 426.5h1M248 426.5h1M264 426.5h1M281 426.5h1M295 426.5h3M367 426.5h2M112 427.5h1M181 427.5h1M184 427.5h3M199 427.5h1M216 427.5h1M232 427.5h1M248 427.5h1M264 427.5h1M282 427.5h1M292 427.5h3M366 427.5h1M113 428.5h2M181 428.5h1M187 428.5h4M198 428.5h1M216 428.5h1M232 428.5h1M248 428.5h1M265 428.5h1M282 428.5h1M288 428.5h4M364 428.5h2M115 429.5h2M180 429.5h1M191 429.5h3M198 429.5h1M215 429.5h1M232 429.5h1M248 429.5h1M265 429.5h1M282 429.5h1M285 429.5h3M362 429.5h2M117 430.5h2M180 430.5h1M194 430.5h5M215 430.5h1M232 430.5h1M248 430.5h1M265 430.5h1M281 430.5h4M360 430.5h2M119 431.5h1M180 431.5h1M198 431.5h4M215 431.5h1M232 431.5h1M248 431.5h1M265 431.5h1M276 431.5h5M282 431.5h1M359 431.5h1M120 432.5h2M180 432.5h1M202 432.5h7M215 432.5h1M232 432.5h1M248 432.5h1M265 432.5h1M270 432.5h6M282 432.5h1M357 432.5h2M122 433.5h1M179 433.5h1M209 433.5h7M232 433.5h1M248 433.5h1M263 433.5h7M282 433.5h1M356 433.5h1M123 434.5h1M179 434.5h1M216 434.5h7M232 434.5h1M248 434.5h1M256 434.5h7M283 434.5h1M355 434.5h1M124 435.5h2M179 435.5h1M223 435.5h33M283 435.5h1M353 435.5h2M126 436.5h2M178 436.5h1M283 436.5h1M351 436.5h2M128 437.5h2M178 437.5h1M283 437.5h1M349 437.5h2M130 438.5h2M178 438.5h1M284 438.5h1M347 438.5h2M132 439.5h2M178 439.5h1M284 439.5h1M345 439.5h2M134 440.5h2M177 440.5h1M284 440.5h1M343 440.5h2M136 441.5h2M177 441.5h1M284 441.5h1M341 441.5h2M138 442.5h2M177 442.5h1M285 442.5h1M339 442.5h2M140 443.5h2M176 443.5h1M285 443.5h1M337 443.5h2M142 444.5h2M176 444.5h1M285 444.5h1M335 444.5h2M144 445.5h2M176 445.5h1M285 445.5h1M333 445.5h2M146 446.5h3M176 446.5h1M286 446.5h1M330 446.5h3M149 447.5h2M175 447.5h1M286 447.5h1M328 447.5h2M151 448.5h2M175 448.5h1M286 448.5h1M326 448.5h2M153 449.5h3M175 449.5h1M286 449.5h1M323 449.5h3M156 450.5h2M174 450.5h1M287 450.5h1M320 450.5h3M158 451.5h3M174 451.5h1M287 451.5h1M318 451.5h2M161 452.5h3M174 452.5h1M287 452.5h1M315 452.5h3M164 453.5h2M174 453.5h1M287 453.5h1M313 453.5h2M166 454.5h2M173 454.5h1M288 454.5h1M311 454.5h2M168 455.5h3M173 455.5h1M288 455.5h1M307 455.5h4M171 456.5h4M288 456.5h1M303 456.5h4M175 457.5h4M288 457.5h1M300 457.5h3M179 458.5h4M289 458.5h1M296 458.5h4M183 459.5h3M289 459.5h1M292 459.5h4M186 460.5h4M288 460.5h4M190 461.5h4M284 461.5h4M194 462.5h4M280 462.5h4M198 463.5h6M274 463.5h6M204 464.5h8M266 464.5h8M212 465.5h16M250 465.5h16M228 466.5h22"/>
<path stroke="#00ff00" d="M243 19.5h1M249 19.5h1M255 19.5h1M242 20.5h2M248 20.5h2M254 20.5h1M241 21.5h1M243 21.5h1M247 21.5h1M249 21.5h1M253 21.5h1M241 22.5h1M244 22.5h1M247 22.5h1M250 22.5h1M253 22.5h1M241 23.5h1M245 23.5h1M247 23.5h1M251 23.5h1M253 23.5h1M240 24.5h1M245 24.5h2M251 24.5h2M239 25.5h1M245 25.5h1M251 25.5h1M271 26.5h1M277 26.5h1M272 27.5h1M276 27.5h1M272 28.5h1M274 28.5h1M276 28.5h1M243 29.5h1M249 29.5h1M255 29.5h1M272 29.5h5M242 30.5h2M248 30.5h2M254 30.5h1M272 30.5h1M274 30.5h1M276 30.5h1M241 31.5h1M243 31.5h1M247 31.5h1M249 31.5h1M253 31.5h1M271 31.5h1M274 31.5h1M277 31.5h1M241 32.5h1M244 32.5h1M247 32.5h1M250 32.5h1M253 32.5h1M273 32.5h3M241 33.5h1M245 33.5h1M247 33.5h1M251 33.5h1M253 33.5h1M273 33.5h1M275 33.5h1M240 34.5h1M245 34.5h2M251 34.5h2M274 34.5h1M239 35.5h1M245 35.5h1M251 35.5h1M185 65.5h1M191 65.5h1M186 66.5h1M190 66.5h1M186 67.5h1M188 67.5h1M190 67.5h1M186 68.5h5M186 69.5h1M188 69.5h1M190 69.5h1M185 70.5h1M188 70.5h1M191 70.5h1M187 71.5h3M187 72.5h1M189 72.5h1M188 73.5h1M127 119.5h1M135 119.5h1M128 120.5h1M134 120.5h1M129 121.5h5M128 122.5h1M134 122.5h1M127 123.5h1M135 123.5h1M127 124.5h1M135 124.5h1M127 125.5h1M135 125.5h1M127 126.5h1M135 126.5h1M127 127.5h1M135 127.5h1M128 128.5h1M134 128.5h1M129 129.5h5M131 130.5h1M131 131.5h1M131 132.5h1M127 133.5h9M131 134.5h1M131 135.5h1M149 141.5h1M157 141.5h1M150 142.5h1M156 142.5h1M151 143.5h5M150 144.5h1M156 144.5h1M149 145.5h1M157 145.5h1M149 146.5h1M157 146.5h1M149 147.5h1M157 147.5h1M149 148.5h1M157 148.5h1M149 149.5h1M157 149.5h1M150 150.5h1M156 150.5h1M137 151.5h1M151 151.5h5M136 152.5h3M153 152.5h1M137 153.5h1M153 153.5h1M153 154.5h1M150 155.5h8M153 156.5h1M153 157.5h1M161 171.5h1M160 172.5h3M161 173.5h1M627 207.5h3M625 208.5h2M630 208.5h2M624 209.5h1M629 209.5h1M632 209.5h1M625 210.5h2M629 210.5h1M632 210.5h1M624 211.5h1M627 211.5h1M630 211.5h2M624 212.5h1M627 212.5h1M632 212.5h1M625 213.5h2M630 213.5h2M627 214.5h3M624 246.5h1M626 246.5h1M628 246.5h1M625 247.5h1M627 247.5h1M629 247.5h1M625 248.5h1M627 248.5h1M629 248.5h1M625 249.5h1M627 249.5h1M629 249.5h1M625 250.5h1M627 250.5h1M629 250.5h1M625 251.5h1M627 251.5h1M629 251.5h1M625 252.5h1M627 252.5h1M629 252.5h1M632 252.5h1M625 253.5h1M627 253.5h1M629 253.5h1M632 253.5h1M630 254.5h2M139 260.5h1M138 261.5h3M139 262.5h1M107 268.5h3M108 269.5h1M115 270.5h1M127 270.5h1M116 271.5h1M126 271.5h1M117 272.5h1M125 272.5h1M117 273.5h1M125 273.5h1M117 274.5h1M121 274.5h1M125 274.5h1M117 275.5h1M121 275.5h1M125 275.5h1M117 276.5h9M84 277.5h1M96 277.5h1M117 277.5h1M121 277.5h1M125 277.5h1M85 278.5h1M95 278.5h1M117 278.5h1M121 278.5h1M125 278.5h1M86 279.5h1M94 279.5h1M116 279.5h1M121 279.5h1M126 279.5h1M86 280.5h1M94 280.5h1M115 280.5h1M121 280.5h1M127 280.5h1M86 281.5h1M90 281.5h1M94 281.5h1M121 281.5h1M86 282.5h1M90 282.5h1M94 282.5h1M120 282.5h3M86 283.5h9M119 283.5h1M123 283.5h1M86 284.5h1M90 284.5h1M94 284.5h1M119 284.5h1M123 284.5h1M86 285.5h1M90 285.5h1M94 285.5h1M119 285.5h1M123 285.5h1M85 286.5h1M90 286.5h1M95 286.5h1M120 286.5h3M626 286.5h1M629 286.5h1M632 286.5h1M84 287.5h1M90 287.5h1M96 287.5h1M625 287.5h2M628 287.5h2M631 287.5h1M90 288.5h1M625 288.5h1M627 288.5h2M630 288.5h2M89 289.5h3M624 289.5h1M627 289.5h1M630 289.5h1M88 290.5h1M92 290.5h1M88 291.5h1M92 291.5h1M626 291.5h1M629 291.5h1M632 291.5h1M88 292.5h1M92 292.5h1M625 292.5h2M628 292.5h2M631 292.5h1M89 293.5h3M625 293.5h1M627 293.5h2M630 293.5h2M624 294.5h1M627 294.5h1M630 294.5h1M38 308.5h1M42 308.5h1M39 309.5h3M38 310.5h1M42 310.5h1M38 311.5h1M42 311.5h1M38 312.5h1M42 312.5h1M39 313.5h3M40 314.5h1M38 315.5h5M40 316.5h1M45 330.5h1M59 330.5h1M46 331.5h1M58 331.5h1M47 332.5h11M49 333.5h1M55 333.5h1M49 334.5h1M55 334.5h1M49 335.5h1M55 335.5h1M383 335.5h1M387 335.5h1M49 336.5h1M55 336.5h1M384 336.5h3M626 336.5h1M630 336.5h1M49 337.5h1M55 337.5h1M383 337.5h1M387 337.5h1M627 337.5h3M49 338.5h1M55 338.5h1M383 338.5h1M387 338.5h1M626 338.5h1M630 338.5h1M49 339.5h1M55 339.5h1M383 339.5h1M387 339.5h1M626 339.5h1M630 339.5h1M49 340.5h1M55 340.5h1M384 340.5h3M626 340.5h1M630 340.5h1M49 341.5h1M55 341.5h1M385 341.5h1M627 341.5h3M49 342.5h1M55 342.5h1M383 342.5h5M628 342.5h1M49 343.5h1M55 343.5h1M385 343.5h1M626 343.5h5M47 344.5h11M628 344.5h1M46 345.5h1M58 345.5h1M45 346.5h1M59 346.5h1M417 348.5h5M416 349.5h1M422 349.5h1M415 350.5h1M423 350.5h1M415 351.5h1M423 351.5h1M415 352.5h1M423 352.5h1M416 353.5h1M422 353.5h1M411 354.5h7M421 354.5h7M411 358.5h17M136 380.5h1M140 380.5h1M137 381.5h3M136 382.5h1M140 382.5h1M136 383.5h1M140 383.5h1M136 384.5h1M140 384.5h1M137 385.5h3M138 386.5h1M625 386.5h1M631 386.5h1M136 387.5h5M626 387.5h1M630 387.5h1M138 388.5h1M626 388.5h1M628 388.5h1M630 388.5h1M626 389.5h5M626 390.5h1M628 390.5h1M630 390.5h1M625 391.5h1M628 391.5h1M631 391.5h1M627 392.5h3M627 393.5h1M629 393.5h1M628 394.5h1M310 434.5h1M314 434.5h1M311 435.5h3M310 436.5h1M314 436.5h1M310 437.5h1M314 437.5h1M310 438.5h1M314 438.5h1M311 439.5h3M312 440.5h1M310 441.5h5M312 442.5h1"/>
<path stroke="#0000ff" d="M163 36.5h1M166 36.5h1M169 36.5h1M162 37.5h2M165 37.5h3M169 37.5h2M163 38.5h1M166 38.5h1M169 38.5h1M164 39.5h1M166 39.5h1M168 39.5h1M165 40.5h3M166 41.5h1M164 42.5h5M132 43.5h1M148 43.5h1M166 43.5h1M133 44.5h1M147 44.5h1M166 44.5h1M134 45.5h1M146 45.5h1M135 46.5h1M145 46.5h1M135 47.5h1M145 47.5h1M136 48.5h1M144 48.5h1M136 49.5h1M144 49.5h1M136 50.5h1M144 50.5h1M132 51.5h17M136 52.5h1M144 52.5h1M136 53.5h1M144 53.5h1M136 54.5h1M144 54.5h1M135 55.5h1M145 55.5h1M135 56.5h1M145 56.5h1M134 57.5h1M146 57.5h1M133 58.5h1M147 58.5h1M132 59.5h1M148 59.5h1M264 79.5h1M269 79.5h3M276 79.5h1M264 80.5h1M268 80.5h1M272 80.5h1M276 80.5h1M264 81.5h1M268 81.5h1M272 81.5h1M276 81.5h1M264 82.5h1M268 82.5h1M272 82.5h1M276 82.5h1M264 83.5h1M269 83.5h3M276 83.5h1M265 84.5h1M275 84.5h1M265 85.5h1M275 85.5h1M266 86.5h2M273 86.5h2M268 87.5h5M270 88.5h1M270 89.5h1M270 90.5h1M266 91.5h9M270 92.5h1M270 93.5h1M270 94.5h1M270 95.5h1M140 106.5h1M146 106.5h1M152 106.5h1M140 107.5h1M146 107.5h1M152 107.5h1M266 107.5h1M139 108.5h3M144 108.5h5M151 108.5h3M265 108.5h3M140 109.5h1M146 109.5h1M152 109.5h1M258 109.5h1M263 109.5h4M270 109.5h1M140 110.5h1M146 110.5h1M152 110.5h1M258 110.5h1M262 110.5h1M266 110.5h1M270 110.5h1M141 111.5h1M146 111.5h1M151 111.5h1M258 111.5h1M262 111.5h1M266 111.5h1M270 111.5h1M141 112.5h1M146 112.5h1M151 112.5h1M258 112.5h1M262 112.5h1M266 112.5h1M270 112.5h1M142 113.5h2M146 113.5h1M149 113.5h2M258 113.5h1M263 113.5h3M270 113.5h1M144 114.5h5M259 114.5h1M269 114.5h1M146 115.5h1M259 115.5h1M269 115.5h1M146 116.5h1M260 116.5h2M267 116.5h2M146 117.5h1M262 117.5h5M142 118.5h9M264 118.5h1M146 119.5h1M264 119.5h1M146 120.5h1M264 120.5h1M146 121.5h1M260 121.5h9M146 122.5h1M264 122.5h1M264 123.5h1M264 124.5h1M264 125.5h1M161 130.5h1M167 130.5h1M173 130.5h1M161 131.5h1M167 131.5h1M173 131.5h1M160 132.5h3M165 132.5h5M172 132.5h3M161 133.5h1M167 133.5h1M173 133.5h1M161 134.5h1M167 134.5h1M173 134.5h1M90 135.5h1M93 135.5h1M96 135.5h1M162 135.5h1M167 135.5h1M172 135.5h1M89 136.5h2M92 136.5h3M96 136.5h2M162 136.5h1M167 136.5h1M172 136.5h1M90 137.5h1M93 137.5h1M96 137.5h1M163 137.5h2M167 137.5h1M170 137.5h2M260 137.5h1M91 138.5h1M93 138.5h1M95 138.5h1M165 138.5h5M259 138.5h3M384 138.5h1M387 138.5h1M390 138.5h1M92 139.5h3M167 139.5h1M260 139.5h1M384 139.5h1M386 139.5h1M388 139.5h1M390 139.5h1M93 140.5h1M167 140.5h1M384 140.5h1M387 140.5h1M390 140.5h1M91 141.5h5M167 141.5h1M385 141.5h1M389 141.5h1M93 142.5h1M163 142.5h9M386 142.5h3M93 143.5h1M167 143.5h1M387 143.5h1M143 144.5h1M167 144.5h1M385 144.5h5M142 145.5h3M167 145.5h1M387 145.5h1M143 146.5h1M167 146.5h1M387 146.5h1M166 166.5h1M165 167.5h3M166 168.5h1M627 217.5h3M625 218.5h2M630 218.5h2M624 219.5h1M629 219.5h1M632 219.5h1M625 220.5h2M629 220.5h1M632 220.5h1M624 221.5h1M627 221.5h1M630 221.5h2M624 222.5h1M627 222.5h1M632 222.5h1M625 223.5h2M630 223.5h2M627 224.5h3M443 239.5h1M447 239.5h1M451 239.5h1M444 240.5h1M446 240.5h1M448 240.5h1M450 240.5h1M452 240.5h1M445 241.5h1M449 241.5h1M453 241.5h1M445 242.5h1M449 242.5h1M453 242.5h1M445 243.5h1M449 243.5h1M453 243.5h1M445 244.5h1M449 244.5h1M453 244.5h1M445 245.5h1M449 245.5h1M453 245.5h1M445 246.5h1M449 246.5h1M453 246.5h1M445 247.5h1M449 247.5h1M453 247.5h1M445 248.5h1M449 248.5h1M453 248.5h1M445 249.5h1M449 249.5h1M453 249.5h1M445 250.5h1M449 250.5h1M453 250.5h1M458 250.5h1M445 251.5h1M449 251.5h1M453 251.5h1M457 251.5h3M112 252.5h5M445 252.5h1M449 252.5h1M453 252.5h1M458 252.5h1M111 253.5h1M117 253.5h2M445 253.5h1M449 253.5h1M453 253.5h1M458 253.5h1M110 254.5h1M119 254.5h1M454 254.5h1M457 254.5h1M111 255.5h1M120 255.5h1M455 255.5h2M112 256.5h1M121 256.5h1M630 256.5h3M82 257.5h5M113 257.5h1M121 257.5h1M631 257.5h2M81 258.5h1M87 258.5h2M113 258.5h1M122 258.5h1M138 258.5h1M630 258.5h1M632 258.5h1M80 259.5h1M89 259.5h1M114 259.5h1M122 259.5h1M137 259.5h3M625 259.5h1M629 259.5h1M81 260.5h1M90 260.5h1M114 260.5h1M122 260.5h1M138 260.5h1M626 260.5h1M628 260.5h1M82 261.5h1M91 261.5h1M114 261.5h1M122 261.5h1M627 261.5h1M83 262.5h1M91 262.5h1M113 262.5h1M122 262.5h1M626 262.5h1M628 262.5h1M83 263.5h1M92 263.5h1M113 263.5h1M121 263.5h1M625 263.5h1M629 263.5h1M84 264.5h1M92 264.5h1M112 264.5h1M121 264.5h1M624 264.5h1M84 265.5h1M92 265.5h1M108 265.5h1M111 265.5h1M120 265.5h1M84 266.5h1M92 266.5h1M107 266.5h4M119 266.5h1M83 267.5h1M92 267.5h1M108 267.5h1M111 267.5h1M117 267.5h2M83 268.5h1M91 268.5h1M112 268.5h5M82 269.5h1M91 269.5h1M81 270.5h1M90 270.5h1M445 270.5h1M448 270.5h1M451 270.5h1M80 271.5h1M89 271.5h1M445 271.5h1M447 271.5h1M449 271.5h1M451 271.5h1M81 272.5h1M87 272.5h2M445 272.5h1M448 272.5h1M451 272.5h1M82 273.5h5M446 273.5h1M450 273.5h1M447 274.5h3M448 275.5h1M446 276.5h5M448 277.5h1M448 278.5h1M625 296.5h2M630 296.5h2M624 297.5h1M627 297.5h1M629 297.5h1M632 297.5h1M624 298.5h1M627 298.5h1M629 298.5h1M632 298.5h1M625 299.5h1M627 299.5h1M629 299.5h1M631 299.5h1M628 300.5h1M628 301.5h1M628 302.5h1M628 303.5h1M628 304.5h1M626 326.5h3M625 327.5h1M629 327.5h2M626 328.5h1M630 328.5h1M627 329.5h1M631 329.5h1M627 330.5h1M631 330.5h1M627 331.5h1M631 331.5h1M626 332.5h1M630 332.5h1M625 333.5h1M629 333.5h2M626 334.5h3M625 396.5h1M628 396.5h1M631 396.5h1M624 397.5h2M627 397.5h3M631 397.5h2M102 398.5h3M625 398.5h1M628 398.5h1M631 398.5h1M101 399.5h1M105 399.5h2M626 399.5h1M628 399.5h1M630 399.5h1M102 400.5h1M106 400.5h1M627 400.5h3M103 401.5h1M107 401.5h1M628 401.5h1M103 402.5h1M107 402.5h1M626 402.5h5M103 403.5h1M107 403.5h1M628 403.5h1M102 404.5h1M106 404.5h1M628 404.5h1M101 405.5h1M105 405.5h2M102 406.5h3M625 406.5h1M628 406.5h1M631 406.5h1M625 407.5h1M627 407.5h1M629 407.5h1M631 407.5h1M625 408.5h1M628 408.5h1M631 408.5h1M201 409.5h3M626 409.5h1M630 409.5h1M200 410.5h1M204 410.5h2M627 410.5h3M201 411.5h1M205 411.5h1M628 411.5h1M124 412.5h5M202 412.5h1M206 412.5h1M626 412.5h5M121 413.5h3M129 413.5h1M202 413.5h1M206 413.5h1M628 413.5h1M120 414.5h1M130 414.5h3M202 414.5h1M206 414.5h1M628 414.5h1M119 415.5h1M129 415.5h1M133 415.5h1M201 415.5h1M205 415.5h1M118 416.5h1M128 416.5h1M134 416.5h1M200 416.5h1M204 416.5h2M128 417.5h1M134 417.5h1M201 417.5h3M120 418.5h3M128 418.5h1M134 418.5h1M119 419.5h1M123 419.5h1M129 419.5h1M133 419.5h1M118 420.5h1M124 420.5h1M130 420.5h3M118 421.5h1M124 421.5h1M118 422.5h1M124 422.5h1M134 422.5h1M119 423.5h1M123 423.5h1M133 423.5h1M120 424.5h3M132 424.5h1M123 425.5h1M129 425.5h3M124 426.5h5"/>
<path stroke="#7f7f7f" d="M223 44.5h1M226 44.5h1M233 44.5h1M237 44.5h1M239 44.5h1M243 44.5h1M249 44.5h1M253 44.5h1M216 45.5h1M220 45.5h1M223 45.5h1M226 45.5h1M233 45.5h1M237 45.5h1M239 45.5h1M243 45.5h1M249 45.5h1M253 45.5h1M256 45.5h1M260 45.5h1M209 46.5h1M216 46.5h1M220 46.5h1M223 46.5h1M226 46.5h1M233 46.5h1M237 46.5h1M239 46.5h1M243 46.5h1M249 46.5h1M253 46.5h1M256 46.5h1M260 46.5h1M266 46.5h1M203 47.5h1M206 47.5h1M209 47.5h1M216 47.5h1M220 47.5h1M223 47.5h1M226 47.5h1M233 47.5h1M237 47.5h1M239 47.5h1M243 47.5h1M249 47.5h1M253 47.5h1M256 47.5h1M260 47.5h1M266 47.5h1M270 47.5h1M273 47.5h1M199 48.5h1M203 48.5h1M206 48.5h1M210 48.5h1M216 48.5h1M220 48.5h1M223 48.5h1M227 48.5h1M234 48.5h1M237 48.5h1M239 48.5h1M242 48.5h1M249 48.5h1M252 48.5h1M256 48.5h1M260 48.5h1M266 48.5h1M269 48.5h1M273 48.5h1M276 48.5h1M199 49.5h1M203 49.5h1M207 49.5h1M210 49.5h1M217 49.5h1M220 49.5h1M224 49.5h1M227 49.5h1M234 49.5h1M237 49.5h1M239 49.5h1M242 49.5h1M249 49.5h1M252 49.5h1M255 49.5h1M259 49.5h1M266 49.5h1M269 49.5h1M273 49.5h1M276 49.5h1M283 49.5h1M193 50.5h1M200 50.5h1M203 50.5h1M207 50.5h1M210 50.5h1M217 50.5h1M220 50.5h1M224 50.5h1M227 50.5h1M234 50.5h1M237 50.5h1M239 50.5h1M242 50.5h1M249 50.5h1M252 50.5h1M255 50.5h1M259 50.5h1M265 50.5h1M269 50.5h1M273 50.5h1M276 50.5h1M283 50.5h1M286 50.5h1M189 51.5h1M194 51.5h1M200 51.5h1M204 51.5h1M207 51.5h1M210 51.5h1M217 51.5h1M220 51.5h1M224 51.5h1M227 51.5h1M234 51.5h1M237 51.5h1M239 51.5h1M242 51.5h1M249 51.5h1M252 51.5h1M255 51.5h1M259 51.5h1M265 51.5h1M269 51.5h1M272 51.5h1M276 51.5h1M282 51.5h1M286 51.5h1M290 51.5h1M186 52.5h1M190 52.5h1M194 52.5h1M200 52.5h1M204 52.5h1M207 52.5h1M211 52.5h1M217 52.5h1M220 52.5h1M224 52.5h1M227 52.5h1M234 52.5h1M237 52.5h1M239 52.5h1M242 52.5h1M249 52.5h1M252 52.5h1M255 52.5h1M259 52.5h1M265 52.5h1M268 52.5h1M272 52.5h1M275 52.5h1M282 52.5h1M285 52.5h1M290 52.5h1M293 52.5h1M183 53.5h1M187 53.5h1M190 53.5h1M194 53.5h1M200 53.5h1M204 53.5h1M208 53.5h1M211 53.5h1M217 53.5h1M220 53.5h1M255 53.5h1M259 53.5h1M265 53.5h1M268 53.5h1M272 53.5h1M275 53.5h1M282 53.5h1M285 53.5h1M289 53.5h1M293 53.5h1M184 54.5h1M187 54.5h1M191 54.5h1M194 54.5h1M201 54.5h1M204 54.5h1M208 54.5h1M211 54.5h1M265 54.5h1M268 54.5h1M272 54.5h1M275 54.5h1M282 54.5h1M285 54.5h1M289 54.5h1M292 54.5h1M300 54.5h1M176 55.5h1M184 55.5h1M187 55.5h1M191 55.5h1M195 55.5h1M201 55.5h1M204 55.5h1M208 55.5h1M272 55.5h1M275 55.5h1M281 55.5h1M285 55.5h1M289 55.5h1M292 55.5h1M300 55.5h1M303 55.5h1M173 56.5h1M177 56.5h1M184 56.5h1M187 56.5h1M191 56.5h1M195 56.5h1M201 56.5h1M275 56.5h1M281 56.5h1M284 56.5h1M289 56.5h1M292 56.5h1M299 56.5h1M303 56.5h1M306 56.5h1M170 57.5h1M174 57.5h1M177 57.5h1M184 57.5h1M188 57.5h1M192 57.5h1M195 57.5h1M281 57.5h1M284 57.5h1M288 57.5h1M292 57.5h1M299 57.5h1M302 57.5h1M306 57.5h1M309 57.5h1M167 58.5h1M170 58.5h1M174 58.5h1M178 58.5h1M185 58.5h1M188 58.5h1M192 58.5h1M284 58.5h1M288 58.5h1M291 58.5h1M298 58.5h1M302 58.5h1M305 58.5h1M309 58.5h1M167 59.5h1M171 59.5h1M175 59.5h1M178 59.5h1M185 59.5h1M188 59.5h1M288 59.5h1M291 59.5h1M298 59.5h1M301 59.5h1M305 59.5h1M308 59.5h1M168 60.5h1M171 60.5h1M175 60.5h1M178 60.5h1M185 60.5h1M297 60.5h1M301 60.5h1M304 60.5h1M308 60.5h1M316 60.5h1M161 61.5h1M168 61.5h1M172 61.5h1M175 61.5h1M179 61.5h1M297 61.5h1M300 61.5h1M304 61.5h1M307 61.5h1M315 61.5h1M319 61.5h1M157 62.5h1M161 62.5h1M169 62.5h1M172 62.5h1M176 62.5h1M179 62.5h1M300 62.5h1M304 62.5h1M307 62.5h1M315 62.5h1M318 62.5h1M158 63.5h1M162 63.5h1M169 63.5h1M173 63.5h1M176 63.5h1M303 63.5h1M307 63.5h1M314 63.5h1M318 63.5h1M321 63.5h1M155 64.5h1M158 64.5h1M162 64.5h1M170 64.5h1M173 64.5h1M303 64.5h1M306 64.5h1M314 64.5h1M317 64.5h1M321 64.5h1M325 64.5h1M151 65.5h1M155 65.5h1M159 65.5h1M163 65.5h1M170 65.5h1M306 65.5h1M313 65.5h1M317 65.5h1M320 65.5h1M324 65.5h1M152 66.5h1M156 66.5h1M159 66.5h1M163 66.5h1M313 66.5h1M316 66.5h1M320 66.5h1M324 66.5h1M152 67.5h1M156 67.5h1M160 67.5h1M164 67.5h1M312 67.5h1M316 67.5h1M319 67.5h1M323 67.5h1M331 67.5h1M145 68.5h1M153 68.5h1M157 68.5h1M160 68.5h1M164 68.5h1M315 68.5h1M319 68.5h1M323 68.5h1M330 68.5h1M146 69.5h1M153 69.5h1M157 69.5h1M161 69.5h1M318 69.5h1M322 69.5h1M330 69.5h1M334 69.5h1M142 70.5h1M146 70.5h1M154 70.5h1M158 70.5h1M318 70.5h1M322 70.5h1M329 70.5h1M333 70.5h1M337 70.5h1M139 71.5h1M143 71.5h1M147 71.5h1M154 71.5h1M158 71.5h1M321 71.5h1M329 71.5h1M333 71.5h1M336 71.5h1M140 72.5h1M143 72.5h1M147 72.5h1M155 72.5h1M328 72.5h1M332 72.5h1M336 72.5h1M340 72.5h1M136 73.5h1M140 73.5h1M144 73.5h1M148 73.5h1M328 73.5h1M332 73.5h1M335 73.5h1M339 73.5h1M137 74.5h1M141 74.5h1M144 74.5h1M148 74.5h1M327 74.5h1M331 74.5h1M335 74.5h1M339 74.5h1M137 75.5h1M141 75.5h1M145 75.5h1M149 75.5h1M217 75.5h1M331 75.5h1M334 75.5h1M338 75.5h1M138 76.5h1M142 76.5h1M145 76.5h1M330 76.5h1M334 76.5h1M338 76.5h1M346 76.5h1M131 77.5h1M139 77.5h1M142 77.5h1M146 77.5h1M217 77.5h1M333 77.5h1M337 77.5h1M345 77.5h1M132 78.5h1M140 78.5h1M143 78.5h1M337 78.5h1M345 78.5h1M348 78.5h1M128 79.5h1M132 79.5h1M140 79.5h1M218 79.5h1M336 79.5h1M344 79.5h1M347 79.5h1M129 80.5h1M133 80.5h1M141 80.5h1M343 80.5h1M347 80.5h1M351 80.5h1M125 81.5h1M129 81.5h1M133 81.5h1M218 81.5h1M342 81.5h1M346 81.5h1M350 81.5h1M126 82.5h1M130 82.5h1M134 82.5h1M342 82.5h1M345 82.5h1M350 82.5h1M354 82.5h1M127 83.5h1M130 83.5h1M134 83.5h1M218 83.5h1M341 83.5h1M345 83.5h1M349 83.5h1M353 83.5h1M123 84.5h1M128 84.5h1M131 84.5h1M135 84.5h1M344 84.5h1M348 84.5h1M352 84.5h1M124 85.5h1M128 85.5h1M131 85.5h1M218 85.5h1M348 85.5h1M351 85.5h1M125 86.5h1M129 86.5h1M132 86.5h1M347 86.5h1M351 86.5h1M359 86.5h1M117 87.5h1M125 87.5h1M130 87.5h1M219 87.5h1M350 87.5h1M358 87.5h1M118 88.5h1M126 88.5h1M349 88.5h1M357 88.5h1M362 88.5h1M114 89.5h1M119 89.5h1M127 89.5h1M219 89.5h1M356 89.5h1M361 89.5h1M115 90.5h1M120 90.5h1M356 90.5h1M360 90.5h1M365 90.5h1M112 91.5h1M116 91.5h1M120 91.5h1M219 91.5h1M355 91.5h1M359 91.5h1M364 91.5h1M113 92.5h1M117 92.5h1M121 92.5h1M354 92.5h1M359 92.5h1M363 92.5h1M367 92.5h1M113 93.5h1M117 93.5h1M122 93.5h1M220 93.5h1M358 93.5h1M362 93.5h1M366 93.5h1M109 94.5h1M114 94.5h1M118 94.5h1M357 94.5h1M361 94.5h1M365 94.5h1M110 95.5h1M115 95.5h1M119 95.5h1M220 95.5h1M360 95.5h1M364 95.5h1M111 96.5h1M116 96.5h1M359 96.5h1M364 96.5h1M112 97.5h1M116 97.5h1M220 97.5h1M363 97.5h1M372 97.5h1M104 98.5h1M112 98.5h1M117 98.5h1M362 98.5h1M371 98.5h1M105 99.5h1M113 99.5h1M220 99.5h1M370 99.5h1M375 99.5h1M106 100.5h1M114 100.5h1M369 100.5h1M374 100.5h1M102 101.5h1M107 101.5h1M221 101.5h1M369 101.5h1M373 101.5h1M103 102.5h1M108 102.5h1M368 102.5h1M372 102.5h1M377 102.5h1M99 103.5h1M104 103.5h1M109 103.5h1M221 103.5h1M367 103.5h1M371 103.5h1M376 103.5h1M100 104.5h1M105 104.5h1M110 104.5h1M370 104.5h1M375 104.5h1M380 104.5h1M101 105.5h1M106 105.5h1M221 105.5h1M369 105.5h1M374 105.5h1M379 105.5h1M97 106.5h1M102 106.5h1M107 106.5h1M373 106.5h1M378 106.5h1M98 107.5h1M103 107.5h1M221 107.5h1M372 107.5h1M377 107.5h1M99 108.5h1M104 108.5h1M376 108.5h1M100 109.5h2M105 109.5h1M222 109.5h1M375 109.5h1M384 109.5h1M102 110.5h1M374 110.5h1M383 110.5h1M92 111.5h1M103 111.5h1M222 111.5h1M381 111.5h2M93 112.5h1M380 112.5h1M387 112.5h1M90 113.5h1M94 113.5h1M222 113.5h1M346 113.5h1M379 113.5h1M385 113.5h2M91 114.5h1M95 114.5h2M378 114.5h1M384 114.5h1M389 114.5h1M92 115.5h1M97 115.5h1M222 115.5h1M344 115.5h1M383 115.5h1M388 115.5h1M88 116.5h1M93 116.5h1M98 116.5h1M381 116.5h2M386 116.5h2M89 117.5h1M94 117.5h1M223 117.5h1M343 117.5h1M380 117.5h1M385 117.5h1M391 117.5h1M90 118.5h1M95 118.5h1M384 118.5h1M390 118.5h1M86 119.5h1M91 119.5h2M96 119.5h1M124 119.5h1M223 119.5h1M341 119.5h1M383 119.5h1M388 119.5h2M87 120.5h1M93 120.5h1M387 120.5h1M88 121.5h1M94 121.5h1M126 121.5h1M223 121.5h1M339 121.5h1M386 121.5h1M89 122.5h2M385 122.5h1M91 123.5h1M128 123.5h1M224 123.5h1M338 123.5h1M394 123.5h1M82 124.5h1M92 124.5h1M392 124.5h2M83 125.5h1M130 125.5h1M224 125.5h1M336 125.5h1M391 125.5h1M397 125.5h1M84 126.5h1M390 126.5h1M396 126.5h1M80 127.5h1M85 127.5h2M132 127.5h1M224 127.5h1M334 127.5h1M389 127.5h1M394 127.5h2M81 128.5h2M87 128.5h1M393 128.5h1M399 128.5h1M83 129.5h1M88 129.5h1M134 129.5h1M224 129.5h1M333 129.5h1M392 129.5h1M397 129.5h2M78 130.5h1M84 130.5h2M391 130.5h1M395 130.5h2M79 131.5h2M86 131.5h1M136 131.5h1M225 131.5h1M331 131.5h1M393 131.5h2M401 131.5h1M76 132.5h1M81 132.5h1M392 132.5h1M399 132.5h2M77 133.5h2M82 133.5h2M137 133.5h1M225 133.5h1M329 133.5h1M397 133.5h2M79 134.5h1M84 134.5h1M395 134.5h2M80 135.5h1M139 135.5h1M225 135.5h1M327 135.5h1M394 135.5h1M81 136.5h2M405 136.5h1M83 137.5h1M141 137.5h1M225 137.5h1M326 137.5h1M403 137.5h2M72 138.5h1M402 138.5h1M73 139.5h2M143 139.5h1M226 139.5h1M324 139.5h1M401 139.5h1M407 139.5h1M75 140.5h2M399 140.5h2M405 140.5h2M70 141.5h1M77 141.5h2M145 141.5h1M226 141.5h1M322 141.5h1M398 141.5h1M403 141.5h2M71 142.5h2M79 142.5h1M401 142.5h2M408 142.5h1M73 143.5h2M147 143.5h1M226 143.5h1M321 143.5h1M400 143.5h1M406 143.5h2M69 144.5h1M75 144.5h2M404 144.5h2M70 145.5h2M77 145.5h1M226 145.5h1M319 145.5h1M402 145.5h2M410 145.5h1M72 146.5h2M401 146.5h1M408 146.5h2M67 147.5h1M74 147.5h2M151 147.5h1M227 147.5h1M317 147.5h1M406 147.5h2M68 148.5h2M76 148.5h1M404 148.5h2M70 149.5h2M153 149.5h1M227 149.5h1M316 149.5h1M403 149.5h1M72 150.5h2M74 151.5h1M227 151.5h1M314 151.5h1M413 151.5h1M411 152.5h2M64 153.5h1M157 153.5h1M228 153.5h1M312 153.5h1M409 153.5h2M65 154.5h2M407 154.5h2M414 154.5h1M67 155.5h2M159 155.5h1M228 155.5h1M310 155.5h1M406 155.5h1M412 155.5h2M69 156.5h2M410 156.5h2M63 157.5h2M71 157.5h1M228 157.5h1M309 157.5h1M408 157.5h2M416 157.5h1M65 158.5h2M407 158.5h1M414 158.5h2M61 159.5h1M67 159.5h2M162 159.5h1M228 159.5h1M307 159.5h1M412 159.5h2M62 160.5h2M69 160.5h2M410 160.5h2M417 160.5h1M64 161.5h2M229 161.5h1M305 161.5h1M409 161.5h1M415 161.5h2M60 162.5h1M66 162.5h2M413 162.5h2M61 163.5h2M68 163.5h1M166 163.5h1M229 163.5h1M304 163.5h1M385 163.5h1M411 163.5h2M63 164.5h2M383 164.5h1M410 164.5h1M65 165.5h2M168 165.5h1M229 165.5h1M302 165.5h1M381 165.5h1M67 166.5h1M379 166.5h1M170 167.5h1M229 167.5h1M300 167.5h1M377 167.5h1M419 167.5h2M375 168.5h1M417 168.5h2M57 169.5h2M172 169.5h1M230 169.5h1M299 169.5h1M373 169.5h1M415 169.5h2M59 170.5h2M371 170.5h1M413 170.5h2M420 170.5h2M61 171.5h3M174 171.5h1M230 171.5h1M297 171.5h1M369 171.5h1M418 171.5h2M56 172.5h2M64 172.5h2M367 172.5h1M416 172.5h2M58 173.5h2M230 173.5h1M295 173.5h1M365 173.5h1M414 173.5h2M422 173.5h1M60 174.5h3M363 174.5h1M419 174.5h3M55 175.5h2M63 175.5h1M178 175.5h1M230 175.5h1M293 175.5h1M361 175.5h1M417 175.5h2M57 176.5h2M359 176.5h1M415 176.5h2M423 176.5h1M59 177.5h2M180 177.5h1M231 177.5h1M292 177.5h1M357 177.5h1M420 177.5h3M54 178.5h2M61 178.5h2M355 178.5h1M418 178.5h2M56 179.5h2M182 179.5h1M231 179.5h1M290 179.5h1M353 179.5h1M416 179.5h2M58 180.5h2M351 180.5h1M60 181.5h2M183 181.5h1M231 181.5h1M288 181.5h1M349 181.5h1M347 182.5h1M185 183.5h1M232 183.5h1M287 183.5h1M345 183.5h1M424 183.5h2M420 184.5h4M52 185.5h2M187 185.5h1M232 185.5h1M285 185.5h1M343 185.5h1M418 185.5h2M54 186.5h4M341 186.5h1M425 186.5h2M58 187.5h2M189 187.5h1M232 187.5h1M283 187.5h1M339 187.5h1M421 187.5h4M51 188.5h2M337 188.5h1M419 188.5h2M53 189.5h4M191 189.5h1M232 189.5h1M282 189.5h1M335 189.5h1M427 189.5h1M57 190.5h3M333 190.5h1M424 190.5h3M193 191.5h1M233 191.5h1M280 191.5h1M331 191.5h1M422 191.5h2M50 192.5h2M329 192.5h1M420 192.5h2M52 193.5h4M195 193.5h1M233 193.5h1M278 193.5h1M327 193.5h1M427 193.5h2M56 194.5h3M325 194.5h1M423 194.5h4M49 195.5h2M197 195.5h1M233 195.5h1M276 195.5h1M323 195.5h1M421 195.5h2M51 196.5h4M321 196.5h1M55 197.5h3M199 197.5h1M233 197.5h1M275 197.5h1M319 197.5h1M317 198.5h1M201 199.5h1M234 199.5h1M273 199.5h1M315 199.5h1M428 199.5h3M313 200.5h1M424 200.5h4M203 201.5h1M234 201.5h1M271 201.5h1M311 201.5h1M422 201.5h2M47 202.5h5M309 202.5h1M52 203.5h5M205 203.5h1M234 203.5h1M270 203.5h1M307 203.5h1M427 203.5h5M305 204.5h1M423 204.5h4M47 205.5h4M206 205.5h1M234 205.5h1M268 205.5h1M303 205.5h1M51 206.5h5M429 206.5h3M208 207.5h1M235 207.5h1M266 207.5h1M301 207.5h1M425 207.5h4M47 208.5h1M299 208.5h1M423 208.5h2M48 209.5h4M210 209.5h1M235 209.5h1M265 209.5h1M297 209.5h1M430 209.5h3M52 210.5h3M295 210.5h1M426 210.5h4M212 211.5h1M235 211.5h1M263 211.5h1M293 211.5h1M424 211.5h2M46 212.5h4M291 212.5h1M50 213.5h5M214 213.5h1M236 213.5h1M261 213.5h1M289 213.5h1M287 214.5h1M216 215.5h1M236 215.5h1M259 215.5h1M285 215.5h1M283 216.5h1M429 216.5h5M218 217.5h1M236 217.5h1M258 217.5h1M281 217.5h1M425 217.5h4M45 218.5h4M279 218.5h1M49 219.5h5M220 219.5h1M236 219.5h1M256 219.5h1M277 219.5h1M275 220.5h1M425 220.5h9M222 221.5h1M237 221.5h1M254 221.5h1M273 221.5h1M45 222.5h4M271 222.5h1M49 223.5h4M224 223.5h1M237 223.5h1M253 223.5h1M269 223.5h1M430 223.5h5M267 224.5h1M426 224.5h4M44 225.5h4M226 225.5h1M237 225.5h1M251 225.5h1M265 225.5h1M48 226.5h5M263 226.5h1M430 226.5h5M228 227.5h1M237 227.5h1M249 227.5h1M261 227.5h1M426 227.5h4M44 229.5h9M229 229.5h1M238 229.5h1M248 229.5h1M259 229.5h1M257 230.5h1M231 231.5h1M238 231.5h1M246 231.5h1M255 231.5h1M253 232.5h1M233 233.5h1M238 233.5h1M244 233.5h1M251 233.5h1M430 233.5h5M249 234.5h1M426 234.5h4M44 235.5h4M235 235.5h1M238 235.5h1M242 235.5h1M247 235.5h1M48 236.5h5M245 236.5h1M237 237.5h1M239 237.5h1M241 237.5h1M243 237.5h1M426 237.5h9M241 238.5h1M44 239.5h9M239 239.5h1M426 239.5h9M237 240.5h1M44 241.5h9M235 241.5h1M237 241.5h1M239 241.5h1M241 241.5h1M233 242.5h1M426 242.5h4M231 243.5h1M236 243.5h1M240 243.5h1M243 243.5h1M430 243.5h5M48 244.5h5M229 244.5h1M44 245.5h4M227 245.5h1M234 245.5h1M240 245.5h1M245 245.5h1M225 246.5h1M223 247.5h1M232 247.5h1M240 247.5h1M247 247.5h1M221 248.5h1M219 249.5h1M230 249.5h1M240 249.5h1M249 249.5h1M426 249.5h9M48 251.5h5M217 251.5h1M229 251.5h1M241 251.5h1M251 251.5h1M44 252.5h4M215 252.5h1M426 252.5h4M213 253.5h1M227 253.5h1M241 253.5h1M252 253.5h1M430 253.5h5M49 254.5h4M211 254.5h1M44 255.5h5M209 255.5h1M225 255.5h1M241 255.5h1M254 255.5h1M425 255.5h4M207 256.5h1M429 256.5h5M205 257.5h1M224 257.5h1M241 257.5h1M256 257.5h1M45 258.5h9M203 258.5h1M201 259.5h1M222 259.5h1M242 259.5h1M258 259.5h1M425 259.5h4M199 260.5h1M429 260.5h5M49 261.5h5M197 261.5h1M220 261.5h1M242 261.5h1M260 261.5h1M45 262.5h4M195 262.5h1M193 263.5h1M219 263.5h1M242 263.5h1M262 263.5h1M191 264.5h1M189 265.5h1M217 265.5h1M242 265.5h1M264 265.5h1M424 265.5h4M187 266.5h1M428 266.5h5M52 267.5h3M185 267.5h1M215 267.5h1M243 267.5h1M266 267.5h1M48 268.5h4M183 268.5h1M424 268.5h2M46 269.5h2M181 269.5h1M213 269.5h1M243 269.5h1M268 269.5h1M426 269.5h4M53 270.5h3M179 270.5h1M430 270.5h2M49 271.5h4M177 271.5h1M212 271.5h1M243 271.5h1M270 271.5h1M47 272.5h2M423 272.5h4M175 273.5h1M210 273.5h1M244 273.5h1M272 273.5h1M427 273.5h5M51 274.5h5M173 274.5h1M47 275.5h4M171 275.5h1M208 275.5h1M244 275.5h1M274 275.5h1M422 275.5h5M169 276.5h1M427 276.5h4M54 277.5h3M167 277.5h1M207 277.5h1M244 277.5h1M275 277.5h1M50 278.5h4M165 278.5h1M48 279.5h2M163 279.5h1M205 279.5h1M244 279.5h1M277 279.5h1M161 280.5h1M159 281.5h1M203 281.5h1M245 281.5h1M279 281.5h1M421 281.5h2M157 282.5h1M423 282.5h4M55 283.5h3M155 283.5h1M202 283.5h1M245 283.5h1M281 283.5h1M427 283.5h3M51 284.5h4M153 284.5h1M420 284.5h2M50 285.5h1M151 285.5h1M200 285.5h1M245 285.5h1M283 285.5h1M422 285.5h4M57 286.5h2M149 286.5h1M426 286.5h3M54 287.5h3M147 287.5h1M198 287.5h1M245 287.5h1M285 287.5h1M52 288.5h2M145 288.5h1M419 288.5h2M51 289.5h1M143 289.5h1M196 289.5h1M246 289.5h1M287 289.5h1M421 289.5h4M57 290.5h3M141 290.5h1M425 290.5h3M53 291.5h4M139 291.5h1M195 291.5h1M246 291.5h1M289 291.5h1M419 291.5h2M52 292.5h1M137 292.5h1M421 292.5h4M58 293.5h3M135 293.5h1M193 293.5h1M246 293.5h1M291 293.5h1M425 293.5h2M54 294.5h4M53 295.5h1M133 295.5h1M191 295.5h1M246 295.5h1M293 295.5h1M131 296.5h1M129 297.5h1M190 297.5h1M247 297.5h1M295 297.5h1M417 297.5h2M127 298.5h1M419 298.5h2M61 299.5h2M125 299.5h1M188 299.5h1M247 299.5h1M297 299.5h1M421 299.5h2M58 300.5h3M123 300.5h1M416 300.5h2M423 300.5h2M56 301.5h2M121 301.5h1M186 301.5h1M247 301.5h1M298 301.5h1M418 301.5h2M55 302.5h1M62 302.5h2M119 302.5h1M420 302.5h2M59 303.5h3M117 303.5h1M185 303.5h1M248 303.5h1M300 303.5h1M414 303.5h2M422 303.5h2M57 304.5h2M115 304.5h1M416 304.5h2M56 305.5h1M63 305.5h2M113 305.5h1M183 305.5h1M248 305.5h1M302 305.5h1M418 305.5h3M61 306.5h2M111 306.5h1M413 306.5h2M421 306.5h2M59 307.5h2M109 307.5h1M181 307.5h1M248 307.5h1M304 307.5h1M415 307.5h2M57 308.5h2M64 308.5h2M107 308.5h1M417 308.5h3M62 309.5h2M105 309.5h1M179 309.5h1M248 309.5h1M306 309.5h1M420 309.5h2M60 310.5h2M103 310.5h1M58 311.5h2M101 311.5h1M178 311.5h1M249 311.5h1M308 311.5h1M99 312.5h1M411 312.5h1M97 313.5h1M176 313.5h1M249 313.5h1M310 313.5h1M412 313.5h2M67 314.5h2M95 314.5h1M414 314.5h2M65 315.5h2M93 315.5h1M174 315.5h1M249 315.5h1M312 315.5h1M410 315.5h1M416 315.5h2M63 316.5h2M411 316.5h2M418 316.5h1M61 317.5h2M69 317.5h1M173 317.5h1M249 317.5h1M314 317.5h1M413 317.5h2M67 318.5h2M408 318.5h1M415 318.5h2M65 319.5h2M171 319.5h1M250 319.5h1M316 319.5h1M409 319.5h2M417 319.5h1M63 320.5h2M70 320.5h2M411 320.5h2M62 321.5h1M68 321.5h2M169 321.5h1M250 321.5h1M318 321.5h1M407 321.5h1M413 321.5h2M66 322.5h2M408 322.5h2M415 322.5h1M64 323.5h2M72 323.5h1M168 323.5h1M250 323.5h1M320 323.5h1M410 323.5h2M70 324.5h2M412 324.5h2M68 325.5h2M166 325.5h1M250 325.5h1M321 325.5h1M414 325.5h1M66 326.5h2M65 327.5h1M164 327.5h1M251 327.5h1M323 327.5h1M404 327.5h1M405 328.5h2M75 329.5h1M162 329.5h1M251 329.5h1M325 329.5h1M407 329.5h2M73 330.5h2M402 330.5h1M409 330.5h2M71 331.5h2M161 331.5h1M251 331.5h1M327 331.5h1M403 331.5h2M411 331.5h1M69 332.5h2M77 332.5h1M405 332.5h2M68 333.5h1M75 333.5h2M159 333.5h1M252 333.5h1M329 333.5h1M401 333.5h1M407 333.5h2M73 334.5h2M402 334.5h2M409 334.5h1M71 335.5h2M78 335.5h1M157 335.5h1M252 335.5h1M331 335.5h1M404 335.5h2M70 336.5h1M76 336.5h2M399 336.5h1M406 336.5h2M74 337.5h2M80 337.5h1M156 337.5h1M252 337.5h1M333 337.5h1M400 337.5h2M408 337.5h1M72 338.5h2M78 338.5h2M402 338.5h2M71 339.5h1M77 339.5h1M154 339.5h1M252 339.5h1M335 339.5h1M404 339.5h2M76 340.5h1M406 340.5h1M74 341.5h2M152 341.5h1M253 341.5h1M337 341.5h1M395 341.5h1M73 342.5h1M396 342.5h2M84 343.5h1M151 343.5h1M253 343.5h1M339 343.5h1M398 343.5h1M82 344.5h2M394 344.5h1M399 344.5h1M80 345.5h2M149 345.5h1M253 345.5h1M341 345.5h1M395 345.5h2M400 345.5h2M78 346.5h2M86 346.5h1M397 346.5h1M402 346.5h1M77 347.5h1M84 347.5h2M147 347.5h1M253 347.5h1M343 347.5h1M392 347.5h1M398 347.5h2M82 348.5h2M87 348.5h1M393 348.5h2M400 348.5h1M80 349.5h2M86 349.5h1M145 349.5h1M254 349.5h1M344 349.5h1M390 349.5h1M395 349.5h1M79 350.5h1M84 350.5h2M391 350.5h1M396 350.5h2M83 351.5h1M89 351.5h1M144 351.5h1M254 351.5h1M346 351.5h1M392 351.5h1M398 351.5h1M82 352.5h1M88 352.5h1M393 352.5h2M81 353.5h1M86 353.5h2M142 353.5h1M254 353.5h1M348 353.5h1M395 353.5h1M85 354.5h1M386 354.5h1M396 354.5h1M84 355.5h1M140 355.5h1M254 355.5h1M350 355.5h1M387 355.5h1M93 356.5h1M388 356.5h1M92 357.5h1M139 357.5h1M255 357.5h1M352 357.5h1M384 357.5h1M389 357.5h2M90 358.5h2M385 358.5h1M391 358.5h1M89 359.5h1M95 359.5h1M137 359.5h1M255 359.5h1M354 359.5h1M382 359.5h1M386 359.5h1M392 359.5h1M88 360.5h1M94 360.5h1M383 360.5h1M387 360.5h2M87 361.5h1M92 361.5h2M98 361.5h1M135 361.5h1M255 361.5h1M384 361.5h1M389 361.5h1M91 362.5h1M96 362.5h2M380 362.5h1M385 362.5h1M390 362.5h1M90 363.5h1M95 363.5h1M134 363.5h1M256 363.5h1M381 363.5h1M386 363.5h1M89 364.5h1M94 364.5h1M100 364.5h1M382 364.5h1M387 364.5h1M92 365.5h2M99 365.5h1M132 365.5h1M256 365.5h1M383 365.5h2M388 365.5h1M91 366.5h1M97 366.5h2M385 366.5h1M96 367.5h1M256 367.5h1M375 367.5h1M386 367.5h1M95 368.5h1M104 368.5h1M376 368.5h1M94 369.5h1M103 369.5h1M256 369.5h1M373 369.5h1M377 369.5h1M102 370.5h1M374 370.5h1M378 370.5h2M101 371.5h1M106 371.5h1M257 371.5h1M375 371.5h1M380 371.5h1M100 372.5h1M105 372.5h1M371 372.5h1M376 372.5h1M381 372.5h1M99 373.5h1M104 373.5h1M109 373.5h1M257 373.5h1M372 373.5h1M377 373.5h1M98 374.5h1M103 374.5h1M108 374.5h1M368 374.5h1M373 374.5h1M378 374.5h1M102 375.5h1M107 375.5h1M111 375.5h1M257 375.5h1M369 375.5h1M374 375.5h1M379 375.5h1M101 376.5h1M106 376.5h1M110 376.5h1M370 376.5h1M375 376.5h1M105 377.5h1M109 377.5h1M257 377.5h1M371 377.5h1M376 377.5h1M104 378.5h1M108 378.5h1M364 378.5h1M372 378.5h1M103 379.5h1M108 379.5h1M258 379.5h1M365 379.5h1M373 379.5h1M107 380.5h1M116 380.5h1M361 380.5h1M366 380.5h1M374 380.5h1M106 381.5h1M115 381.5h1M258 381.5h1M362 381.5h1M367 381.5h1M114 382.5h1M119 382.5h1M362 382.5h1M367 382.5h1M113 383.5h1M118 383.5h1M258 383.5h1M359 383.5h1M363 383.5h1M368 383.5h1M113 384.5h1M117 384.5h1M121 384.5h1M360 384.5h1M364 384.5h1M369 384.5h1M112 385.5h1M116 385.5h1M120 385.5h1M258 385.5h1M356 385.5h1M361 385.5h1M365 385.5h1M111 386.5h1M115 386.5h1M119 386.5h1M124 386.5h1M357 386.5h1M362 386.5h1M365 386.5h1M114 387.5h1M118 387.5h1M123 387.5h1M259 387.5h1M358 387.5h1M362 387.5h1M366 387.5h1M113 388.5h1M118 388.5h1M122 388.5h1M359 388.5h1M363 388.5h1M117 389.5h1M121 389.5h1M259 389.5h1M351 389.5h1M359 389.5h1M364 389.5h1M116 390.5h1M121 390.5h1M129 390.5h1M352 390.5h1M360 390.5h1M120 391.5h1M128 391.5h1M259 391.5h1M348 391.5h1M353 391.5h1M361 391.5h1M119 392.5h1M127 392.5h1M131 392.5h1M346 392.5h1M349 392.5h1M354 392.5h1M126 393.5h1M130 393.5h1M260 393.5h1M347 393.5h1M350 393.5h1M354 393.5h1M126 394.5h1M130 394.5h1M134 394.5h1M343 394.5h1M347 394.5h1M351 394.5h1M355 394.5h1M125 395.5h1M129 395.5h1M133 395.5h1M137 395.5h1M260 395.5h1M344 395.5h1M348 395.5h1M351 395.5h1M124 396.5h1M128 396.5h1M133 396.5h1M136 396.5h1M344 396.5h1M348 396.5h1M352 396.5h1M128 397.5h1M132 397.5h1M136 397.5h1M260 397.5h1M345 397.5h1M349 397.5h1M353 397.5h1M127 398.5h1M131 398.5h1M135 398.5h1M337 398.5h1M345 398.5h1M349 398.5h1M131 399.5h1M134 399.5h1M142 399.5h1M260 399.5h1M338 399.5h1M346 399.5h1M350 399.5h1M130 400.5h1M133 400.5h1M141 400.5h1M335 400.5h1M338 400.5h1M346 400.5h1M133 401.5h1M141 401.5h1M145 401.5h1M261 401.5h1M332 401.5h1M336 401.5h1M339 401.5h1M347 401.5h1M132 402.5h1M140 402.5h1M144 402.5h1M148 402.5h1M333 402.5h1M336 402.5h1M340 402.5h1M140 403.5h1M144 403.5h1M147 403.5h1M261 403.5h1M329 403.5h1M333 403.5h1M337 403.5h1M341 403.5h1M139 404.5h1M143 404.5h1M147 404.5h1M151 404.5h1M330 404.5h1M334 404.5h1M337 404.5h1M341 404.5h1M139 405.5h1M143 405.5h1M146 405.5h1M150 405.5h1M330 405.5h1M334 405.5h1M338 405.5h1M342 405.5h1M138 406.5h1M142 406.5h1M146 406.5h1M150 406.5h1M323 406.5h1M331 406.5h1M335 406.5h1M338 406.5h1M142 407.5h1M145 407.5h1M149 407.5h1M157 407.5h1M320 407.5h1M324 407.5h1M331 407.5h1M335 407.5h1M339 407.5h1M141 408.5h1M145 408.5h1M149 408.5h1M156 408.5h1M160 408.5h1M321 408.5h1M324 408.5h1M332 408.5h1M336 408.5h1M144 409.5h1M148 409.5h1M156 409.5h1M159 409.5h1M317 409.5h1M321 409.5h1M325 409.5h1M332 409.5h1M148 410.5h1M155 410.5h1M159 410.5h1M163 410.5h1M314 410.5h1M318 410.5h1M322 410.5h1M325 410.5h1M333 410.5h1M147 411.5h1M155 411.5h1M158 411.5h1M162 411.5h1M166 411.5h1M315 411.5h1M318 411.5h1M322 411.5h1M326 411.5h1M154 412.5h1M158 412.5h1M162 412.5h1M165 412.5h1M315 412.5h1M319 412.5h1M323 412.5h1M326 412.5h1M154 413.5h1M157 413.5h1M161 413.5h1M165 413.5h1M172 413.5h1M308 413.5h1M316 413.5h1M319 413.5h1M323 413.5h1M327 413.5h1M153 414.5h1M157 414.5h1M161 414.5h1M164 414.5h1M172 414.5h1M305 414.5h1M308 414.5h1M316 414.5h1M320 414.5h1M324 414.5h1M156 415.5h1M160 415.5h1M164 415.5h1M171 415.5h1M175 415.5h1M302 415.5h1M305 415.5h1M309 415.5h1M317 415.5h1M320 415.5h1M160 416.5h1M163 416.5h1M171 416.5h1M174 416.5h1M178 416.5h1M299 416.5h1M302 416.5h1M306 416.5h1M309 416.5h1M317 416.5h1M321 416.5h1M159 417.5h1M163 417.5h1M170 417.5h1M174 417.5h1M178 417.5h1M181 417.5h1M299 417.5h1M303 417.5h1M306 417.5h1M310 417.5h1M318 417.5h1M162 418.5h1M170 418.5h1M173 418.5h1M177 418.5h1M181 418.5h1M293 418.5h1M300 418.5h1M303 418.5h1M307 418.5h1M310 418.5h1M170 419.5h1M173 419.5h1M177 419.5h1M180 419.5h1M187 419.5h1M190 419.5h1M290 419.5h1M293 419.5h1M300 419.5h1M304 419.5h1M307 419.5h1M311 419.5h1M169 420.5h1M173 420.5h1M176 420.5h1M180 420.5h1M187 420.5h1M190 420.5h1M194 420.5h1M286 420.5h1M290 420.5h1M294 420.5h1M301 420.5h1M304 420.5h1M308 420.5h1M311 420.5h1M169 421.5h1M172 421.5h1M176 421.5h1M179 421.5h1M186 421.5h1M189 421.5h1M194 421.5h1M197 421.5h1M283 421.5h1M286 421.5h1M291 421.5h1M294 421.5h1M301 421.5h1M304 421.5h1M308 421.5h1M172 422.5h1M175 422.5h1M179 422.5h1M186 422.5h1M189 422.5h1M193 422.5h1M197 422.5h1M203 422.5h1M277 422.5h1M283 422.5h1M287 422.5h1M291 422.5h1M294 422.5h1M301 422.5h1M305 422.5h1M175 423.5h1M178 423.5h1M186 423.5h1M189 423.5h1M193 423.5h1M196 423.5h1M203 423.5h1M206 423.5h1M270 423.5h1M274 423.5h1M277 423.5h1M284 423.5h1M287 423.5h1M291 423.5h1M294 423.5h1M302 423.5h1M178 424.5h1M186 424.5h1M189 424.5h1M193 424.5h1M196 424.5h1M203 424.5h1M206 424.5h1M210 424.5h1M213 424.5h1M267 424.5h1M270 424.5h1M274 424.5h1M278 424.5h1M284 424.5h1M288 424.5h1M291 424.5h1M295 424.5h1M185 425.5h1M188 425.5h1M193 425.5h1M196 425.5h1M203 425.5h1M206 425.5h1M210 425.5h1M213 425.5h1M219 425.5h1M258 425.5h1M261 425.5h1M267 425.5h1M271 425.5h1M274 425.5h1M278 425.5h1M284 425.5h1M288 425.5h1M292 425.5h1M295 425.5h1M185 426.5h1M188 426.5h1M192 426.5h1M196 426.5h1M203 426.5h1M206 426.5h1M209 426.5h1M213 426.5h1M219 426.5h1M223 426.5h1M226 426.5h1M229 426.5h1M236 426.5h1M239 426.5h1M241 426.5h1M244 426.5h1M251 426.5h1M254 426.5h1M258 426.5h1M261 426.5h1M268 426.5h1M271 426.5h1M274 426.5h1M278 426.5h1M284 426.5h1M288 426.5h1M292 426.5h1M188 427.5h1M192 427.5h1M195 427.5h1M202 427.5h1M205 427.5h1M209 427.5h1M213 427.5h1M219 427.5h1M223 427.5h1M226 427.5h1M229 427.5h1M236 427.5h1M239 427.5h1M241 427.5h1M244 427.5h1M251 427.5h1M254 427.5h1M258 427.5h1M261 427.5h1M268 427.5h1M271 427.5h1M275 427.5h1M278 427.5h1M285 427.5h1M289 427.5h1M192 428.5h1M195 428.5h1M202 428.5h1M205 428.5h1M209 428.5h1M212 428.5h1M219 428.5h1M223 428.5h1M226 428.5h1M229 428.5h1M236 428.5h1M239 428.5h1M241 428.5h1M244 428.5h1M251 428.5h1M254 428.5h1M258 428.5h1M261 428.5h1M268 428.5h1M271 428.5h1M275 428.5h1M279 428.5h1M285 428.5h1M195 429.5h1M202 429.5h1M205 429.5h1M209 429.5h1M212 429.5h1M218 429.5h1M222 429.5h1M226 429.5h1M229 429.5h1M236 429.5h1M239 429.5h1M241 429.5h1M244 429.5h1M251 429.5h1M254 429.5h1M258 429.5h1M262 429.5h1M268 429.5h1M272 429.5h1M275 429.5h1M279 429.5h1M202 430.5h1M205 430.5h1M208 430.5h1M212 430.5h1M218 430.5h1M222 430.5h1M225 430.5h1M229 430.5h1M235 430.5h1M239 430.5h1M241 430.5h1M245 430.5h1M252 430.5h1M255 430.5h1M258 430.5h1M262 430.5h1M269 430.5h1M272 430.5h1M275 430.5h1M279 430.5h1M202 431.5h1M205 431.5h1M208 431.5h1M212 431.5h1M218 431.5h1M222 431.5h1M225 431.5h1M229 431.5h1M235 431.5h1M239 431.5h1M241 431.5h1M245 431.5h1M252 431.5h1M255 431.5h1M258 431.5h1M262 431.5h1M269 431.5h1M272 431.5h1M275 431.5h1M212 432.5h1M218 432.5h1M222 432.5h1M225 432.5h1M229 432.5h1M235 432.5h1M239 432.5h1M241 432.5h1M245 432.5h1M252 432.5h1M255 432.5h1M258 432.5h1M262 432.5h1M269 432.5h1M218 433.5h1M222 433.5h1M225 433.5h1M229 433.5h1M235 433.5h1M239 433.5h1M241 433.5h1M245 433.5h1M252 433.5h1M255 433.5h1M258 433.5h1M262 433.5h1M225 434.5h1M229 434.5h1M235 434.5h1M239 434.5h1M241 434.5h1M245 434.5h1M252 434.5h1M255 434.5h1"/>
<path stroke="#ffff00" d="M346 51.5h1M352 51.5h1M356 51.5h3M345 52.5h2M352 52.5h1M355 52.5h1M359 52.5h1M344 53.5h1M346 53.5h1M352 53.5h1M354 53.5h1M360 53.5h1M346 54.5h1M351 54.5h1M353 54.5h1M360 54.5h1M346 55.5h1M350 55.5h1M354 55.5h1M360 55.5h1M346 56.5h1M350 56.5h1M355 56.5h1M359 56.5h1M346 57.5h1M350 57.5h1M356 57.5h1M358 57.5h1M346 58.5h1M350 58.5h1M357 58.5h1M346 59.5h1M350 59.5h1M358 59.5h1M347 60.5h1M349 60.5h1M359 60.5h1M274 61.5h1M348 61.5h1M360 61.5h1M272 62.5h5M348 62.5h1M360 62.5h1M274 63.5h1M348 63.5h1M360 63.5h1M274 64.5h1M276 64.5h2M348 64.5h1M360 64.5h1M274 65.5h2M278 65.5h1M348 65.5h1M360 65.5h1M274 66.5h1M278 66.5h1M359 66.5h1M274 67.5h1M277 67.5h1M358 67.5h1M274 68.5h1M277 68.5h1M278 69.5h1M373 72.5h1M371 73.5h5M373 74.5h1M373 75.5h1M375 75.5h2M373 76.5h2M377 76.5h1M373 77.5h1M377 77.5h1M373 78.5h1M376 78.5h1M373 79.5h1M376 79.5h1M377 80.5h1M103 152.5h1M103 153.5h1M135 153.5h1M99 154.5h9M134 154.5h1M103 155.5h1M135 155.5h1M103 156.5h1M103 157.5h1M103 158.5h1M107 158.5h3M103 159.5h1M106 159.5h1M110 159.5h1M103 160.5h3M111 160.5h1M103 161.5h1M111 161.5h1M103 162.5h1M111 162.5h1M103 163.5h1M110 163.5h1M103 164.5h1M109 164.5h1M103 165.5h1M109 165.5h1M103 166.5h1M109 166.5h1M110 167.5h1M111 168.5h1M129 170.5h1M129 171.5h1M169 171.5h1M125 172.5h9M129 173.5h1M129 174.5h1M129 175.5h1M165 175.5h1M129 176.5h1M133 176.5h3M129 177.5h1M132 177.5h1M136 177.5h1M163 177.5h2M129 178.5h3M137 178.5h1M129 179.5h1M137 179.5h1M129 180.5h1M137 180.5h1M129 181.5h1M136 181.5h1M129 182.5h1M135 182.5h1M129 183.5h1M135 183.5h1M129 184.5h1M135 184.5h1M136 185.5h1M137 186.5h1M625 196.5h1M632 196.5h1M626 197.5h6M627 198.5h1M630 198.5h1M627 199.5h1M630 199.5h1M29 200.5h3M627 200.5h1M630 200.5h1M28 201.5h1M32 201.5h1M627 201.5h1M630 201.5h1M28 202.5h1M32 202.5h1M627 202.5h1M630 202.5h1M28 203.5h1M32 203.5h1M626 203.5h6M29 204.5h3M625 204.5h1M632 204.5h1M30 205.5h1M28 206.5h5M30 207.5h1M30 208.5h1M146 210.5h1M414 214.5h3M413 215.5h1M417 215.5h1M413 216.5h1M417 216.5h1M413 217.5h1M417 217.5h1M414 218.5h3M415 219.5h1M413 220.5h5M415 221.5h1M415 222.5h1M21 223.5h1M33 223.5h1M22 224.5h1M32 224.5h1M22 225.5h1M32 225.5h1M23 226.5h2M30 226.5h2M25 227.5h5M23 228.5h2M30 228.5h2M22 229.5h1M32 229.5h1M22 230.5h1M32 230.5h1M21 231.5h1M33 231.5h1M21 232.5h1M33 232.5h1M21 233.5h1M33 233.5h1M21 234.5h1M33 234.5h1M113 234.5h5M21 235.5h1M33 235.5h1M112 235.5h1M118 235.5h1M22 236.5h1M32 236.5h1M111 236.5h1M119 236.5h1M22 237.5h1M32 237.5h1M81 237.5h5M111 237.5h1M119 237.5h1M23 238.5h2M30 238.5h2M80 238.5h1M86 238.5h1M111 238.5h1M119 238.5h1M627 238.5h3M25 239.5h5M79 239.5h1M87 239.5h1M111 239.5h1M119 239.5h1M626 239.5h1M630 239.5h1M79 240.5h1M87 240.5h1M111 240.5h1M119 240.5h1M626 240.5h1M630 240.5h1M79 241.5h1M87 241.5h1M112 241.5h1M118 241.5h1M624 241.5h4M629 241.5h4M79 242.5h1M87 242.5h1M113 242.5h5M79 243.5h1M87 243.5h1M115 243.5h1M624 243.5h9M80 244.5h1M86 244.5h1M115 244.5h1M81 245.5h5M115 245.5h1M83 246.5h1M111 246.5h9M83 247.5h1M115 247.5h1M83 248.5h1M115 248.5h1M79 249.5h9M115 249.5h1M83 250.5h1M115 250.5h1M83 251.5h1M137 251.5h1M142 251.5h1M83 252.5h1M136 252.5h3M83 253.5h1M137 253.5h1M106 255.5h1M105 256.5h3M106 257.5h1M143 258.5h1M143 260.5h1M625 276.5h1M628 276.5h1M630 276.5h2M624 277.5h2M628 277.5h2M632 277.5h1M625 278.5h1M627 278.5h1M629 278.5h1M632 278.5h1M625 279.5h1M627 279.5h1M630 279.5h2M625 280.5h1M627 280.5h1M631 280.5h1M626 281.5h1M632 281.5h1M626 282.5h1M632 282.5h1M626 283.5h1M632 283.5h1M631 284.5h1M191 324.5h1M90 332.5h3M89 333.5h1M93 333.5h1M89 334.5h1M93 334.5h1M89 335.5h1M93 335.5h1M90 336.5h3M91 337.5h1M89 338.5h5M91 339.5h1M91 340.5h1M627 346.5h3M626 347.5h1M630 347.5h1M626 348.5h1M630 348.5h1M626 349.5h1M630 349.5h1M627 350.5h3M628 351.5h1M626 352.5h5M628 353.5h1M628 354.5h1M401 370.5h3M400 371.5h1M404 371.5h1M400 372.5h1M404 372.5h1M400 373.5h1M404 373.5h1M401 374.5h3M402 375.5h1M400 376.5h5M627 376.5h1M402 377.5h1M625 377.5h5M402 378.5h1M627 378.5h1M627 379.5h1M629 379.5h2M627 380.5h2M631 380.5h1M627 381.5h1M631 381.5h1M627 382.5h1M630 382.5h1M627 383.5h1M630 383.5h1M631 384.5h1M330 419.5h1M334 419.5h1M338 419.5h1M331 420.5h1M333 420.5h1M335 420.5h1M337 420.5h1M339 420.5h1M332 421.5h1M336 421.5h1M340 421.5h1M344 421.5h1M332 422.5h1M336 422.5h1M340 422.5h1M343 422.5h2M332 423.5h1M336 423.5h1M340 423.5h1M342 423.5h1M344 423.5h1M332 424.5h1M336 424.5h1M340 424.5h2M344 424.5h1M332 425.5h1M336 425.5h1M340 425.5h1M344 425.5h1M332 426.5h1M336 426.5h1M340 426.5h1M344 426.5h1M332 427.5h1M336 427.5h1M340 427.5h1M344 427.5h1M332 428.5h1M336 428.5h1M340 428.5h1M344 428.5h1M332 429.5h1M336 429.5h1M340 429.5h1M344 429.5h1M332 430.5h1M336 430.5h1M340 430.5h1M344 430.5h1M332 431.5h1M336 431.5h1M340 431.5h1M344 431.5h1M332 432.5h1M336 432.5h1M341 432.5h1M343 432.5h1M332 433.5h1M336 433.5h1M342 433.5h1M341 434.5h1M343 434.5h1M340 435.5h1M344 435.5h1"/>
<path stroke="#ff0000" d="M343 90.5h1M337 91.5h2M342 91.5h1M339 92.5h1M342 92.5h1M339 93.5h1M342 93.5h1M338 94.5h1M342 94.5h1M338 95.5h1M342 95.5h1M337 96.5h1M342 96.5h1M337 97.5h8M342 98.5h1M78 100.5h3M79 101.5h2M78 102.5h1M80 102.5h1M74 103.5h2M77 103.5h1M73 104.5h1M76 104.5h1M72 105.5h1M77 105.5h1M72 106.5h1M77 106.5h1M73 107.5h1M76 107.5h1M74 108.5h2M53 118.5h3M63 118.5h3M52 119.5h1M56 119.5h1M62 119.5h1M66 119.5h1M51 120.5h1M57 120.5h1M61 120.5h1M67 120.5h1M51 121.5h1M57 121.5h1M61 121.5h1M67 121.5h1M51 122.5h1M57 122.5h1M61 122.5h1M67 122.5h1M52 123.5h1M58 123.5h1M60 123.5h1M66 123.5h1M53 124.5h1M58 124.5h1M60 124.5h1M65 124.5h1M58 125.5h1M60 125.5h1M58 126.5h1M60 126.5h1M59 127.5h1M59 128.5h1M59 129.5h1M59 130.5h1M59 131.5h1M59 132.5h1M431 132.5h5M59 133.5h1M434 133.5h2M59 134.5h1M433 134.5h1M435 134.5h1M120 135.5h6M432 135.5h1M435 135.5h1M124 136.5h2M431 136.5h1M435 136.5h1M123 137.5h1M125 137.5h1M430 137.5h1M122 138.5h1M125 138.5h1M421 138.5h1M429 138.5h1M121 139.5h1M125 139.5h1M422 139.5h1M428 139.5h1M120 140.5h1M125 140.5h1M423 140.5h1M427 140.5h1M112 141.5h5M119 141.5h1M424 141.5h1M426 141.5h1M111 142.5h1M117 142.5h2M425 142.5h1M110 143.5h1M118 143.5h1M424 143.5h1M426 143.5h1M109 144.5h1M119 144.5h1M423 144.5h1M427 144.5h1M109 145.5h1M119 145.5h1M422 145.5h1M428 145.5h1M109 146.5h1M119 146.5h1M421 146.5h1M429 146.5h1M109 147.5h1M119 147.5h1M420 147.5h1M109 148.5h1M119 148.5h1M419 148.5h1M110 149.5h1M118 149.5h1M111 150.5h1M117 150.5h1M112 151.5h5M136 153.5h1M135 154.5h3M136 155.5h1M144 155.5h6M148 156.5h2M147 157.5h1M149 157.5h1M146 158.5h1M149 158.5h1M145 159.5h1M149 159.5h1M144 160.5h1M149 160.5h1M136 161.5h5M143 161.5h1M135 162.5h1M141 162.5h2M441 162.5h1M134 163.5h1M142 163.5h1M435 163.5h2M440 163.5h1M133 164.5h1M143 164.5h1M437 164.5h1M440 164.5h1M133 165.5h1M143 165.5h1M437 165.5h1M440 165.5h1M133 166.5h1M143 166.5h1M436 166.5h1M440 166.5h1M133 167.5h1M143 167.5h1M436 167.5h1M440 167.5h1M133 168.5h1M143 168.5h1M435 168.5h1M440 168.5h1M134 169.5h1M142 169.5h1M435 169.5h8M135 170.5h1M141 170.5h1M440 170.5h1M136 171.5h5M160 173.5h1M159 174.5h3M160 175.5h1M89 184.5h5M87 185.5h2M94 185.5h2M86 186.5h1M96 186.5h1M625 186.5h1M631 186.5h1M85 187.5h1M97 187.5h1M626 187.5h1M630 187.5h1M84 188.5h1M98 188.5h1M627 188.5h3M84 189.5h1M98 189.5h1M626 189.5h1M630 189.5h1M83 190.5h1M99 190.5h1M625 190.5h1M631 190.5h1M83 191.5h1M99 191.5h1M625 191.5h1M631 191.5h1M83 192.5h1M91 192.5h1M99 192.5h1M625 192.5h1M631 192.5h1M83 193.5h1M99 193.5h1M626 193.5h1M630 193.5h1M83 194.5h1M99 194.5h1M118 194.5h5M627 194.5h3M84 195.5h1M98 195.5h1M116 195.5h2M123 195.5h2M84 196.5h1M98 196.5h1M115 196.5h1M125 196.5h1M85 197.5h1M97 197.5h1M114 197.5h1M126 197.5h1M86 198.5h1M96 198.5h1M111 198.5h1M113 198.5h1M127 198.5h1M87 199.5h2M94 199.5h2M110 199.5h4M127 199.5h1M89 200.5h5M111 200.5h2M128 200.5h1M112 201.5h1M128 201.5h1M112 202.5h1M120 202.5h1M128 202.5h1M112 203.5h1M128 203.5h1M112 204.5h1M128 204.5h1M113 205.5h1M127 205.5h1M113 206.5h1M127 206.5h1M114 207.5h1M126 207.5h1M141 207.5h1M115 208.5h1M125 208.5h1M140 208.5h3M116 209.5h2M123 209.5h2M141 209.5h1M118 210.5h5M627 226.5h3M626 227.5h1M630 227.5h1M625 228.5h1M631 228.5h1M625 229.5h1M631 229.5h1M625 230.5h1M631 230.5h1M626 231.5h1M630 231.5h1M624 232.5h1M626 232.5h1M630 232.5h1M625 233.5h1M631 233.5h1M632 234.5h1M65 256.5h3M66 257.5h2M65 258.5h1M67 258.5h1M61 259.5h2M64 259.5h1M60 260.5h1M63 260.5h1M59 261.5h1M64 261.5h1M59 262.5h1M64 262.5h1M60 263.5h1M63 263.5h1M61 264.5h2M625 266.5h1M628 266.5h1M630 266.5h2M624 267.5h2M628 267.5h2M632 267.5h1M625 268.5h1M627 268.5h1M629 268.5h1M632 268.5h1M625 269.5h1M627 269.5h1M630 269.5h2M625 270.5h1M627 270.5h1M631 270.5h1M626 271.5h1M632 271.5h1M626 272.5h1M632 272.5h1M626 273.5h1M632 273.5h1M631 274.5h1M627 316.5h3M625 317.5h2M630 317.5h2M625 318.5h1M631 318.5h1M624 319.5h1M632 319.5h1M624 320.5h1M628 320.5h1M632 320.5h1M624 321.5h1M632 321.5h1M625 322.5h1M631 322.5h1M625 323.5h2M630 323.5h2M627 324.5h3M188 327.5h1M187 328.5h3M188 329.5h1M184 339.5h1M183 340.5h1M173 341.5h2M182 341.5h1M175 342.5h1M182 342.5h1M176 343.5h1M182 343.5h1M176 344.5h1M182 344.5h1M176 345.5h1M182 345.5h1M175 346.5h1M182 346.5h1M175 347.5h1M182 347.5h1M174 348.5h1M182 348.5h1M174 349.5h1M182 349.5h1M173 350.5h1M182 350.5h1M173 351.5h1M182 351.5h1M172 352.5h1M182 352.5h1M172 353.5h15M173 354.5h1M182 354.5h1M172 355.5h3M182 355.5h1M173 356.5h1M630 356.5h3M631 357.5h2M630 358.5h1M632 358.5h1M626 359.5h2M629 359.5h1M625 360.5h1M628 360.5h1M624 361.5h1M629 361.5h1M624 362.5h1M629 362.5h1M625 363.5h1M628 363.5h1M626 364.5h2M168 366.5h1M631 366.5h1M167 367.5h1M625 367.5h2M630 367.5h1M157 368.5h2M166 368.5h1M627 368.5h1M630 368.5h1M159 369.5h1M166 369.5h1M627 369.5h1M630 369.5h1M160 370.5h1M166 370.5h1M626 370.5h1M630 370.5h1M160 371.5h1M166 371.5h1M626 371.5h1M630 371.5h1M160 372.5h1M166 372.5h1M625 372.5h1M630 372.5h1M159 373.5h1M166 373.5h1M625 373.5h8M159 374.5h1M166 374.5h1M630 374.5h1M158 375.5h1M166 375.5h1M158 376.5h1M166 376.5h1M157 377.5h1M166 377.5h1M157 378.5h1M166 378.5h1M156 379.5h1M166 379.5h1M156 380.5h15M166 381.5h1M166 382.5h1M289 405.5h3M287 406.5h2M292 406.5h2M287 407.5h1M293 407.5h1M286 408.5h1M294 408.5h1M286 409.5h1M290 409.5h1M294 409.5h1M286 410.5h1M294 410.5h1M287 411.5h1M293 411.5h1M287 412.5h2M292 412.5h2M289 413.5h3M229 443.5h5M203 444.5h3M228 444.5h1M234 444.5h1M201 445.5h2M206 445.5h2M227 445.5h1M235 445.5h1M201 446.5h1M207 446.5h1M226 446.5h1M236 446.5h1M200 447.5h1M208 447.5h1M225 447.5h1M237 447.5h1M200 448.5h1M204 448.5h1M208 448.5h1M225 448.5h1M237 448.5h1M200 449.5h1M208 449.5h1M225 449.5h1M237 449.5h1M201 450.5h1M207 450.5h1M225 450.5h1M237 450.5h1M201 451.5h2M206 451.5h2M225 451.5h1M237 451.5h1M203 452.5h3M226 452.5h1M236 452.5h1M227 453.5h1M235 453.5h1M227 454.5h1M235 454.5h1M223 455.5h1M227 455.5h1M235 455.5h1M224 456.5h1M226 456.5h1M236 456.5h1M225 457.5h1M237 457.5h1M238 458.5h1M239 459.5h1"/>
<path stroke="#00ffff" d="M259 143.5h1M255 144.5h3M253 145.5h1M249 146.5h1M251 146.5h2M247 147.5h2M243 148.5h3M241 149.5h1M243 149.5h1M237 150.5h1M239 150.5h2M235 151.5h2M233 152.5h1M235 152.5h1M229 153.5h1M231 153.5h2M227 154.5h2M223 155.5h1M225 155.5h1M221 156.5h1M223 156.5h2M217 157.5h1M219 157.5h2M215 158.5h2M211 159.5h1M213 159.5h1M215 159.5h1M209 160.5h1M211 160.5h2M205 161.5h1M207 161.5h2M203 162.5h1M207 162.5h1M199 163.5h1M201 163.5h1M203 163.5h2M197 164.5h1M199 164.5h2M193 165.5h1M195 165.5h1M191 166.5h1M195 166.5h2M189 167.5h1M191 167.5h2M185 168.5h1M187 168.5h2M183 169.5h1M187 169.5h1M179 170.5h1M181 170.5h1M183 170.5h2M177 171.5h1M179 171.5h2M173 172.5h1M175 172.5h1M179 172.5h1M171 173.5h1M175 173.5h2M167 174.5h1M169 174.5h1M171 174.5h2M167 176.5h2"/>
<g id="labels">
<text class="hn" transform="translate(0 286) scale(0.8 1)" fill="#ff0000"><tspan x="84.375">1</tspan></text>
<text class="hn" transform="translate(0 355) scale(0.8 1)" fill="#ffff00"><tspan x="126.875">2</tspan></text>
<text class="hn" transform="translate(0 398) scale(0.8 1)" fill="#00ff00"><tspan x="190.625">3</tspan></text>
<text class="hn" transform="translate(0 421) scale(0.8 1)" fill="#0000ff"><tspan x="279.375">4</tspan></text>
<text class="hn" transform="translate(0 404) scale(0.8 1)" fill="#ff0000"><tspan x="395.625">5</tspan></text>
<text class="hn" transform="translate(0 313) scale(0.8 1)" fill="#ffff00"><tspan x="503.125">6</tspan></text>
<text class="hn" transform="translate(0 202) scale(0.8 1)" fill="#00ff00"><tspan x="514.375">7</tspan></text>
<text class="hn" transform="translate(0 133) scale(0.8 1)" fill="#0000ff"><tspan x="471.875">8</tspan></text>
<text class="hn" transform="translate(0 90) scale(0.8 1)" fill="#ff0000"><tspan x="408.125">9</tspan></text>
<text class="hn" transform="translate(0 67) scale(0.8 1)" fill="#ffff00"><tspan x="314.375">1</tspan><tspan class="z" x="324.375">0</tspan></text>
<text class="hn" transform="translate(0 84) scale(0.8 1)" fill="#00ff00"><tspan x="198.125">1</tspan><tspan x="208.125">1</tspan></text>
<text class="hn" transform="translate(0 175) scale(0.8 1)" fill="#0000ff"><tspan x="90.625">1</tspan><tspan x="100.625">2</tspan></text>
<text class="sb" xml:space="preserve" x="486" y="14"><tspan fill="#ffffff">Astrolog 5.41G</tspan></text>
<text class="sb" xml:space="preserve" x="486" y="24"><tspan fill="#bfbfbf">Inner ring:</tspan></text>
<text class="sb" xml:space="preserve" x="486" y="34"><tspan fill="#bfbfbf">Chart of the Moment</tspan></text>
<text class="sb" xml:space="preserve" x="486" y="44"><tspan fill="#ffffff">Sun April 19, 2026</tspan></text>
<text class="sb" xml:space="preserve" x="486" y="54"><tspan fill="#ffffff"> 7:23:00am (DT -8:00 GMT)</tspan></text>
<text class="sb" xml:space="preserve" x="486" y="64"><tspan fill="#bfbfbf">San Francisco, CA</tspan></text>
<text class="sb" xml:space="preserve" x="486" y="74"><tspan fill="#bfbfbf">122°41'00"W 37°79'00"N</tspan></text>
<text class="sb" xml:space="preserve" x="486" y="84"><tspan fill="#bfbfbf">Outer ring - Transit:</tspan></text>
<text class="sb" xml:space="preserve" x="486" y="94"><tspan fill="#ffff00">Sun April 19, 2026</tspan></text>
<text class="sb" xml:space="preserve" x="486" y="104"><tspan fill="#ffff00"> 4:23:39pm (ST +2:00 GMT)</tspan></text>
<text class="sb" xml:space="preserve" x="486" y="114"><tspan fill="#bfbfbf"> 26°43'00"E 58°23'00"N</tspan></text>
<text class="sb" xml:space="preserve" x="486" y="124"><tspan fill="#bfbfbf">Placidus houses.</tspan></text>
<text class="sb" xml:space="preserve" x="486" y="134"><tspan fill="#bfbfbf">Tropical, Geocentric.</tspan></text>
<text class="sb" xml:space="preserve" x="486" y="144"><tspan fill="#ffff00">Julian Day = 2461150.0998</tspan></text>
<text class="sb" xml:space="preserve" x="486" y="154"><tspan fill="#bfbfbf">Obliquity = 23°26'09"</tspan></text>
<text class="sb" xml:space="preserve" x="486" y="164"><tspan fill="#bfbfbf">Sidereal time:  6:01:20</tspan></text>
<text class="sb" xml:space="preserve" x="486" y="174"><tspan fill="#bfbfbf">DeltaT =  95.5792</tspan></text>
<text class="sb" xml:space="preserve" x="486" y="194"><tspan fill="#ff0000"> 1st house: </tspan><tspan fill="#ffff00">17Tau11</tspan></text>
<text class="sb" xml:space="preserve" x="486" y="204"><tspan fill="#ffff00"> 2nd house: </tspan><tspan fill="#00ff00">14Gem51</tspan></text>
<text class="sb" xml:space="preserve" x="486" y="214"><tspan fill="#00ff00"> 3rd house: </tspan><tspan fill="#0000ff"> 6Can47</tspan></text>
<text class="sb" xml:space="preserve" x="486" y="224"><tspan fill="#0000ff"> 4th house: </tspan><tspan fill="#0000ff">28Can39</tspan></text>
<text class="sb" xml:space="preserve" x="486" y="234"><tspan fill="#ff0000"> 5th house: </tspan><tspan fill="#ff0000">24Leo55</tspan></text>
<text class="sb" xml:space="preserve" x="486" y="244"><tspan fill="#ffff00"> 6th house: </tspan><tspan fill="#00ff00"> 1Lib05</tspan></text>
<text class="sb" xml:space="preserve" x="486" y="254"><tspan fill="#00ff00"> 7th house: </tspan><tspan fill="#0000ff">17Sco11</tspan></text>
<text class="sb" xml:space="preserve" x="486" y="264"><tspan fill="#0000ff"> 8th house: </tspan><tspan fill="#ff0000">14Sag51</tspan></text>
<text class="sb" xml:space="preserve" x="486" y="274"><tspan fill="#ff0000"> 9th house: </tspan><tspan fill="#ffff00"> 6Cap47</tspan></text>
<text class="sb" xml:space="preserve" x="486" y="284"><tspan fill="#ffff00">10th house: </tspan><tspan fill="#ffff00">28Cap39</tspan></text>
<text class="sb" xml:space="preserve" x="486" y="294"><tspan fill="#00ff00">11th house: </tspan><tspan fill="#00ff00">24Aqu55</tspan></text>
<text class="sb" xml:space="preserve" x="486" y="304"><tspan fill="#0000ff">12th house: </tspan><tspan fill="#ff0000"> 1Ari05</tspan></text>
<text class="sb" xml:space="preserve" x="486" y="324"><tspan fill="#ff0000"> Sun: </tspan><tspan fill="#ff0000">29Ari33</tspan><tspan fill="#bfbfbf">  + 0°00'</tspan></text>
<text class="sb" xml:space="preserve" x="486" y="334"><tspan fill="#0000ff">Moon: </tspan><tspan fill="#ffff00">28Tau49</tspan><tspan fill="#bfbfbf">  + 5°02'</tspan></text>
<text class="sb" xml:space="preserve" x="486" y="344"><tspan fill="#00ff00">Merc: </tspan><tspan fill="#ff0000"> 6Ari34</tspan><tspan fill="#bfbfbf">  - 2°38'</tspan></text>
<text class="sb" xml:space="preserve" x="486" y="354"><tspan fill="#ffff00">Venu: </tspan><tspan fill="#ffff00">24Tau26</tspan><tspan fill="#bfbfbf">  + 0°23'</tspan></text>
<text class="sb" xml:space="preserve" x="486" y="364"><tspan fill="#ff0000">Mars: </tspan><tspan fill="#ff0000"> 7Ari36</tspan><tspan fill="#bfbfbf">  - 0°57'</tspan></text>
<text class="sb" xml:space="preserve" x="486" y="374"><tspan fill="#ff0000">Jupi: </tspan><tspan fill="#0000ff">17Can28</tspan><tspan fill="#bfbfbf">  + 0°23'</tspan></text>
<text class="sb" xml:space="preserve" x="486" y="384"><tspan fill="#ffff00">Satu: </tspan><tspan fill="#ff0000"> 7Ari49</tspan><tspan fill="#bfbfbf">  - 2°09'</tspan></text>
<text class="sb" xml:space="preserve" x="486" y="394"><tspan fill="#00ff00">Uran: </tspan><tspan fill="#ffff00">29Tau39</tspan><tspan fill="#bfbfbf">  - 0°10'</tspan></text>
<text class="sb" xml:space="preserve" x="486" y="404"><tspan fill="#0000ff">Nept: </tspan><tspan fill="#ff0000"> 2Ari53</tspan><tspan fill="#bfbfbf">  - 1°19'</tspan></text>
<text class="sb" xml:space="preserve" x="486" y="414"><tspan fill="#0000ff">Plut: </tspan><tspan fill="#00ff00"> 5Aqu27</tspan><tspan fill="#bfbfbf">  - 4°00'</tspan></text>
<text class="sb" xml:space="preserve" x="486" y="434"><tspan fill="#bfbfbf">Fire: 5, Earth: 3,</tspan></text>
<text class="sb" xml:space="preserve" x="486" y="444"><tspan fill="#bfbfbf">Air : 1, Water: 1</tspan></text>
<text class="sb" xml:space="preserve" x="486" y="454"><tspan fill="#bfbfbf">Car: 6, Fix: 4, Mut: 0</tspan></text>
<text class="sb" xml:space="preserve" x="486" y="464"><tspan fill="#bfbfbf">Yang: 6, Yin: 4</tspan></text>
<text class="sb" xml:space="preserve" x="486" y="474"><tspan fill="#bfbfbf">M: 6, N: 4, A: 10, D: 0</tspan></text>
</g>
</svg>
</body></html>
